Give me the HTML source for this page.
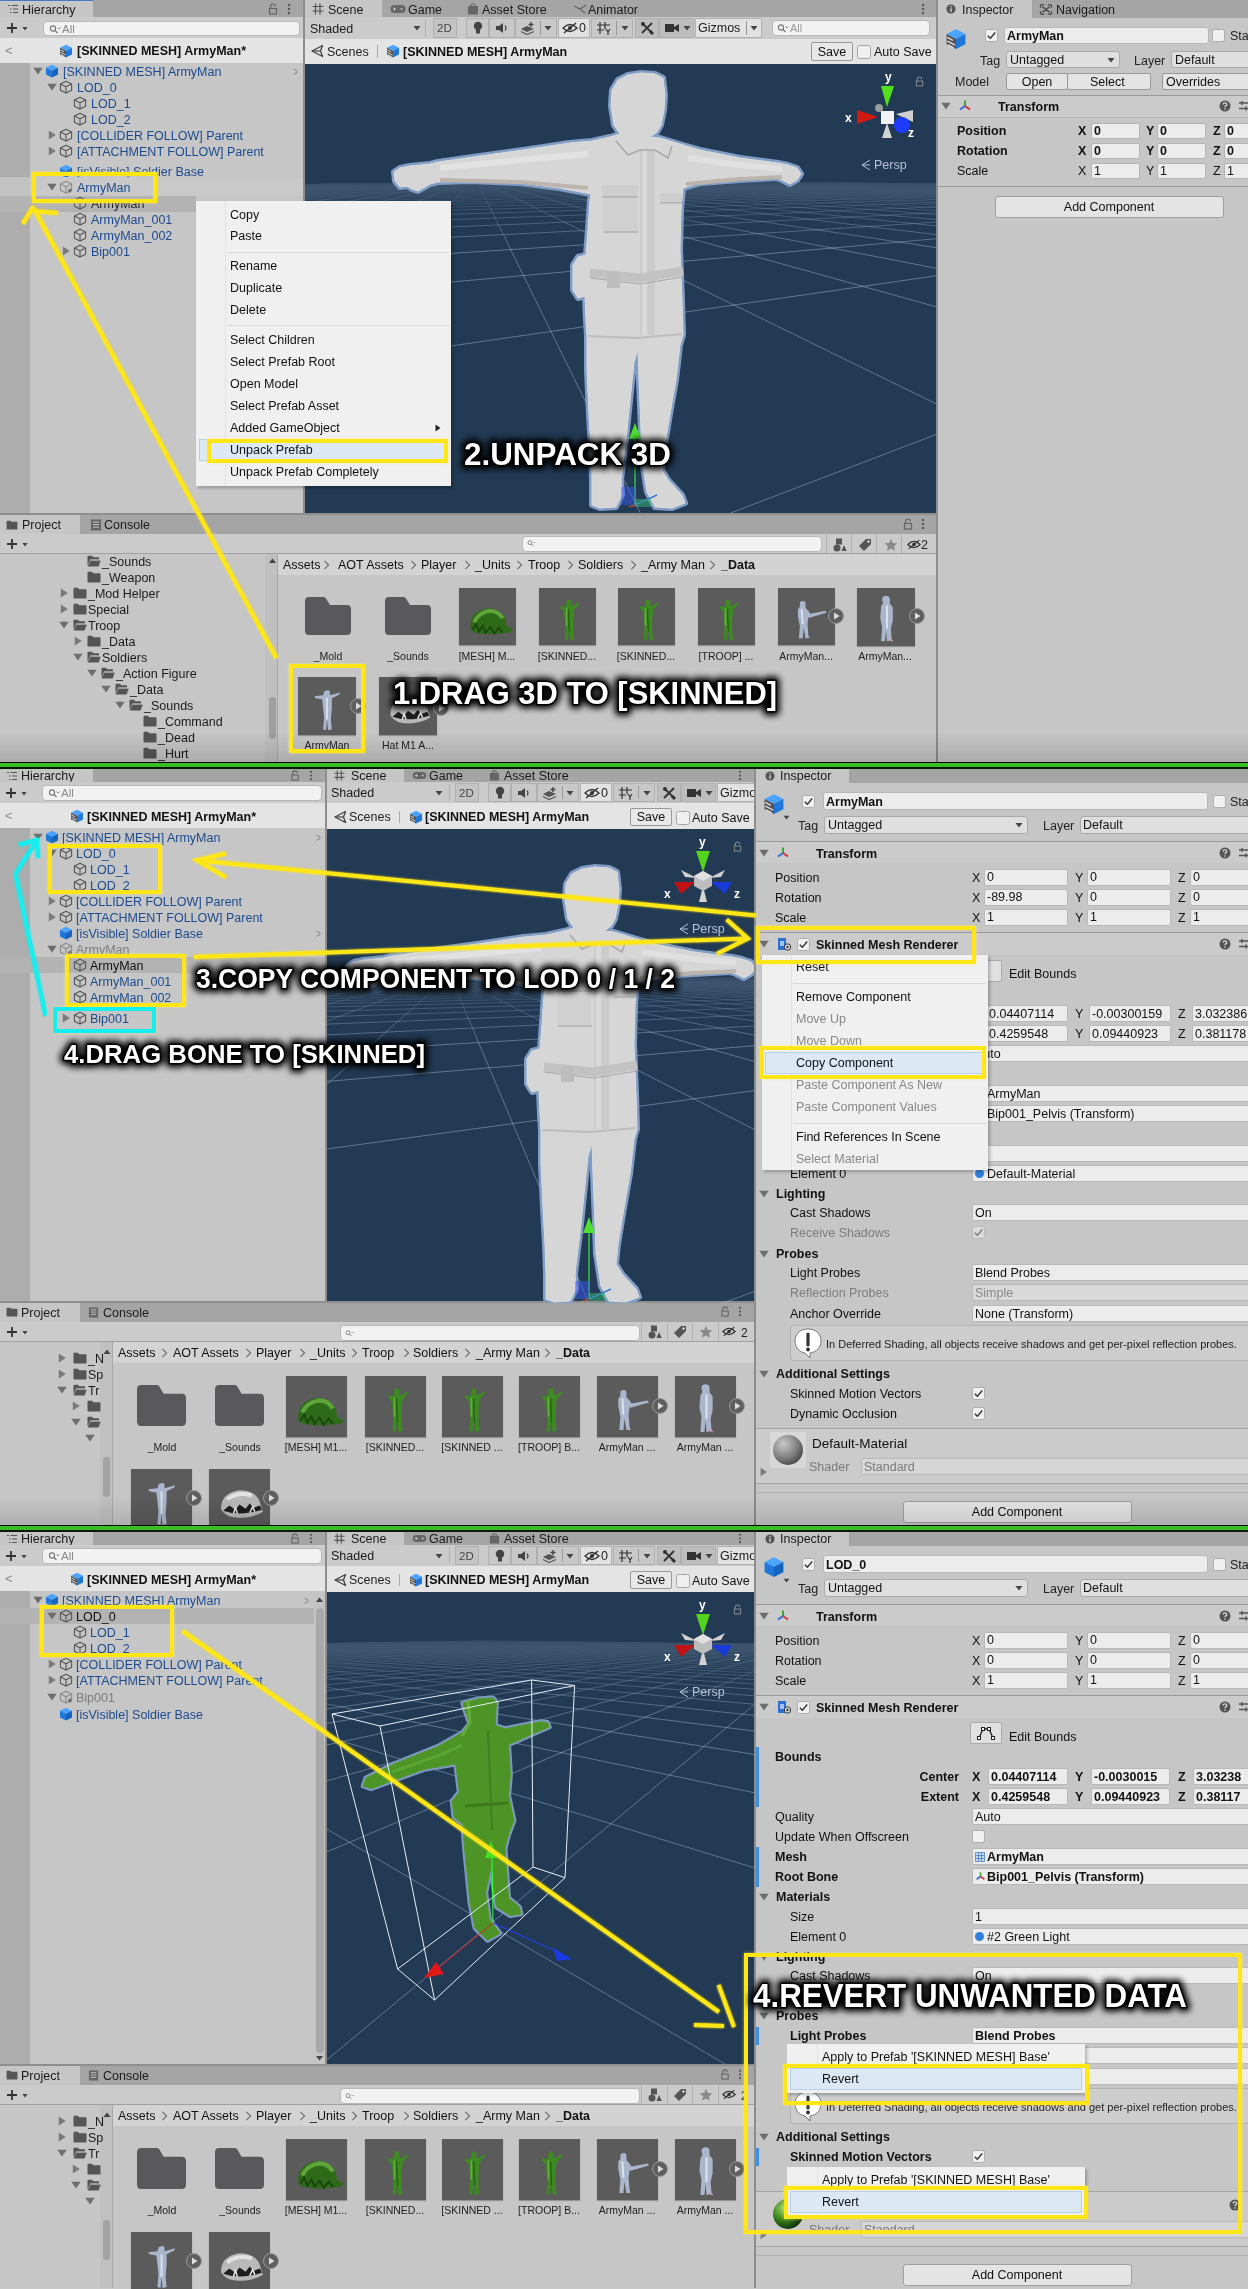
<!DOCTYPE html><html><head><meta charset="utf-8"><style>
html,body{margin:0;padding:0;background:#c8c8c8;}
#root{will-change:transform;position:relative;width:1248px;height:2289px;overflow:hidden;font-family:"Liberation Sans",sans-serif;color:#111;}
.a{position:absolute;}
.t{white-space:nowrap;}
svg.a{overflow:visible}
</style></head><body><div id="root">
<svg width="0" height="0" style="position:absolute">
<defs>
<symbol id="cube" viewBox="0 0 14 14"><path d="M7 1.2 L12.6 4 V10.2 L7 13 L1.4 10.2 V4 Z M1.4 4 L7 6.8 L12.6 4 M7 6.8 V13" fill="none" stroke="#555" stroke-width="1.1" stroke-linejoin="round"/></symbol>
<symbol id="cubeg" viewBox="0 0 14 14"><path d="M7 1.2 L12.6 4 V10.2 L7 13 L1.4 10.2 V4 Z M1.4 4 L7 6.8 L12.6 4 M7 6.8 V13" fill="none" stroke="#8a8a8a" stroke-width="1.1" stroke-linejoin="round"/><path d="M9 10.5h4M11 8.5v4" stroke="#666" stroke-width="1.3"/></symbol>
<symbol id="bcube" viewBox="0 0 14 14"><path d="M7 0.8 L13 3.8 L7 6.8 L1 3.8 Z" fill="#4aa3ff"/><path d="M1 3.8 L7 6.8 V13.4 L1 10.4 Z" fill="#1f78d8"/><path d="M13 3.8 L7 6.8 V13.4 L13 10.4 Z" fill="#1565c0"/></symbol>
<symbol id="pcube" viewBox="0 0 14 14"><path d="M7 0.8 L13 3.8 L7 6.8 L1 3.8 Z" fill="#4aa3ff"/><path d="M1 3.8 L7 6.8 V13.4 L1 10.4 Z" fill="#555"/><path d="M1.5 6 L5 7.8 M1.5 8.4 L6.5 10.9 M2 10.8 L5.5 12.6" stroke="#ddd" stroke-width="0.9"/><path d="M13 3.8 L7 6.8 V13.4 L13 10.4 Z" fill="#1f78d8"/></symbol>
<symbol id="tdown" viewBox="0 0 10 10"><path d="M0.3 1.8 H9.7 L5 8.6 Z" fill="#6e6e6e"/></symbol>
<symbol id="tright" viewBox="0 0 10 10"><path d="M1.8 0.4 V9.6 L8.8 5 Z" fill="#7a7a7a"/></symbol>
<symbol id="folder" viewBox="0 0 14 12"><path d="M0.5 1.5 Q0.5 0.8 1.2 0.8 H5 L6.3 2.2 H12.8 Q13.5 2.2 13.5 2.9 V10.8 Q13.5 11.5 12.8 11.5 H1.2 Q0.5 11.5 0.5 10.8 Z" fill="#555"/></symbol>
<symbol id="folderopen" viewBox="0 0 14 12"><path d="M0.5 1.5 Q0.5 0.8 1.2 0.8 H5 L6.3 2.2 H12 V4.5 H3.2 L0.5 10.5 Z" fill="#555"/><path d="M3.4 5.2 H13.8 L11.6 11.5 H0.6 Z" fill="#555"/><path d="M3.4 5.2 H13.8" stroke="#c6c6c6" stroke-width="0.8"/></symbol>
<symbol id="bigfolder" viewBox="0 0 46 38" preserveAspectRatio="none"><path d="M0 4 Q0 0 4 0 H19 Q20 0 21 1.5 L25 8 H42 Q46 8 46 12 V34 Q46 38 42 38 H4 Q0 38 0 34 Z" fill="#59585b"/></symbol>
<symbol id="play" viewBox="0 0 16 16"><circle cx="8" cy="8" r="7.5" fill="#5f5f5f" stroke="#9a9a9a" stroke-width="1"/><path d="M6 4.5 V11.5 L11.5 8 Z" fill="#ddd"/></symbol>
<symbol id="chk" viewBox="0 0 14 14"><rect x="0.5" y="0.5" width="13" height="13" rx="2" fill="#f0f0f0" stroke="#a8a8a8"/><path d="M3 7.2 L5.8 10 L11 3.8" fill="none" stroke="#333" stroke-width="1.5"/></symbol>
<symbol id="unchk" viewBox="0 0 14 14"><rect x="0.5" y="0.5" width="13" height="13" rx="2" fill="#f0f0f0" stroke="#a8a8a8"/></symbol>
<symbol id="help" viewBox="0 0 12 12"><circle cx="6" cy="6" r="5.5" fill="#555"/><path d="M4.2 4.6 Q4.2 2.8 6 2.8 Q7.8 2.8 7.8 4.4 Q7.8 5.4 6.6 5.9 Q6 6.2 6 7.2" fill="none" stroke="#d8d8d8" stroke-width="1.3"/><circle cx="6" cy="9" r="0.8" fill="#d8d8d8"/></symbol>
<symbol id="sliders" viewBox="0 0 12 12"><path d="M1 3 H11 M1 8.5 H11 M4 1 V5 M8 6.5 V10.5" stroke="#555" stroke-width="1.4"/></symbol>
<symbol id="transform" viewBox="0 0 14 14"><path d="M7 1.5 V7" stroke="#3ea52e" stroke-width="2"/><path d="M7 7 L2 10.5" stroke="#2a6fd6" stroke-width="2"/><path d="M7 7 L12 10.5" stroke="#d33" stroke-width="2"/></symbol>
<symbol id="smr" viewBox="0 0 16 14"><path d="M2 1 H10 V13 H2 Z" fill="#2f6fd0"/><path d="M4 4 L8 4 L8 9 L4 9 Z" fill="#9ec3f5"/><circle cx="11.5" cy="10" r="3.2" fill="#ddd" stroke="#333" stroke-width="1"/><circle cx="11.5" cy="10" r="1.2" fill="#333"/></symbol>
<symbol id="lock" viewBox="0 0 10 12"><path d="M2.5 5.5 V3.5 Q2.5 1 5 1 Q7.5 1 7.5 3.5" fill="none" stroke="#666" stroke-width="1.2"/><rect x="1.5" y="5.5" width="7" height="5.5" fill="none" stroke="#666" stroke-width="1.2"/></symbol>
<symbol id="dots" viewBox="0 0 4 12"><circle cx="2" cy="2" r="1.2" fill="#555"/><circle cx="2" cy="6" r="1.2" fill="#555"/><circle cx="2" cy="10" r="1.2" fill="#555"/></symbol>
<symbol id="hicon" viewBox="0 0 12 10"><path d="M1 1.5 H3 M4.5 1.5 H11 M3 5 H4.5 M6 5 H11 M3 8.5 H4.5 M6 8.5 H11" stroke="#555" stroke-width="1.1"/></symbol>
<symbol id="plus" viewBox="0 0 12 12"><path d="M6 1 V11 M1 6 H11" stroke="#333" stroke-width="1.8"/></symbol>
<symbol id="search" viewBox="0 0 12 10"><circle cx="4" cy="4.5" r="2.6" fill="none" stroke="#777" stroke-width="1.1"/><path d="M6 6.5 L8.5 9" stroke="#777" stroke-width="1.2"/><path d="M8.5 3.5 L10 5 L11.5 3.5" fill="none" stroke="#777" stroke-width="0.9"/></symbol>
<symbol id="unity" viewBox="0 0 14 14"><path d="M12.5 1.5 L2 7 L12.5 12.5 L10.5 7 Z" fill="none" stroke="#444" stroke-width="1.3" stroke-linejoin="round"/><path d="M2 7 H10.5" stroke="#444" stroke-width="1.2"/></symbol>
<symbol id="grid" viewBox="0 0 12 12"><path d="M3.5 0.5 V11.5 M8 0.5 V11.5 M0.5 3.5 H11.5 M0.5 8 H11.5" stroke="#555" stroke-width="1.2"/></symbol>
<symbol id="gamepad" viewBox="0 0 16 10"><rect x="0.5" y="1" width="15" height="8" rx="4" fill="#666"/><path d="M3 5 H6 M4.5 3.5 V6.5" stroke="#c8c8c8" stroke-width="1"/><circle cx="11.5" cy="5" r="1" fill="#c8c8c8"/></symbol>
<symbol id="bag" viewBox="0 0 12 12"><path d="M4 3 V2 Q4 0.8 6 0.8 Q8 0.8 8 2 V3" fill="none" stroke="#666" stroke-width="1.1"/><rect x="1" y="3" width="10" height="8.5" rx="1" fill="#666"/></symbol>
<symbol id="animator" viewBox="0 0 14 12"><path d="M1 3 L7 6 L13 2 M7 6 L12 10" fill="none" stroke="#666" stroke-width="1.3"/></symbol>
<symbol id="info" viewBox="0 0 12 12"><circle cx="6" cy="6" r="5.5" fill="#555"/><path d="M6 5 V9.5" stroke="#ddd" stroke-width="1.5"/><circle cx="6" cy="3.2" r="0.9" fill="#ddd"/></symbol>
<symbol id="nav" viewBox="0 0 14 12"><path d="M1 1 H5 M1 1 V4 M13 1 H9 M13 1 V4 M1 11 H5 M1 11 V8 M13 11 H9 M13 11 V8 M3 3 L11 9 M11 3 L3 9" fill="none" stroke="#444" stroke-width="1.3"/></symbol>
<symbol id="consoleic" viewBox="0 0 12 12"><rect x="1" y="0.5" width="10" height="11" fill="#666"/><path d="M3 3 H9 M3 5.5 H9 M3 8 H9" stroke="#c8c8c8" stroke-width="1"/></symbol>
<symbol id="arrowdn" viewBox="0 0 8 6"><path d="M0.5 1 H7.5 L4 5.5 Z" fill="#444"/></symbol>
<symbol id="redit" viewBox="0 0 14 14"><circle cx="7" cy="4" r="3" fill="#555"/><path d="M1.5 13 Q7 4 12.5 13" fill="#555"/></symbol>
<symbol id="chev" viewBox="0 0 8 12"><path d="M1.5 1 L6.5 6 L1.5 11" fill="none" stroke="#6a6a6a" stroke-width="1.3"/></symbol>
</defs></svg>
<div class="a" style="left:0px;top:0px;width:303px;height:17px;background:#a5a5a5;"></div>
<div class="a" style="left:0px;top:0px;width:93px;height:17px;background:#c6c6c6;"></div>
<div class="a" style="left:0px;top:0px;width:93px;height:1px;background:#4a78c0;"></div>
<svg class="a" style="left:7px;top:4px;" width="12" height="10"><use href="#hicon"/></svg>
<div class="a t" style="top:1.5px;font-size:12.5px;line-height:16px;left:22px;color:#1a1a1a;">Hierarchy</div>
<svg class="a" style="left:268px;top:3px;" width="10" height="12"><use href="#lock"/></svg>
<svg class="a" style="left:287px;top:3px;" width="4" height="12"><use href="#dots"/></svg>
<div class="a" style="left:0px;top:17px;width:303px;height:22px;background:#cbcbcb;"></div>
<svg class="a" style="left:6px;top:22px;" width="12" height="12"><use href="#plus"/></svg>
<svg class="a" style="left:22px;top:26px;" width="6" height="5"><use href="#arrowdn"/></svg>
<div class="a" style="left:43px;top:21px;width:257px;height:15px;background:#f2f2f2;border:1px solid #b8b8b8;box-sizing:border-box;border-radius:4px;"></div>
<svg class="a" style="left:49px;top:24px;" width="12" height="10"><use href="#search"/></svg>
<div class="a t" style="top:20.5px;font-size:11.5px;line-height:16px;left:62px;color:#888;">All</div>
<div class="a" style="left:0px;top:38px;width:303px;height:25px;background:#e4e4e4;"></div>
<div class="a t" style="top:43.0px;font-size:13px;line-height:16px;left:5px;color:#888;">&lt;</div>
<svg class="a" style="left:59px;top:44px;" width="14" height="14"><use href="#pcube"/></svg>
<div class="a t" style="top:43.0px;font-size:12.5px;line-height:16px;left:77px;font-weight:bold;">[SKINNED MESH] ArmyMan*</div>
<div class="a" style="left:0px;top:63px;width:303px;height:452px;background:#c6c6c6;"></div>
<div class="a" style="left:0px;top:63px;width:30px;height:114px;background:#adadad;"></div>
<div class="a" style="left:0px;top:177px;width:30px;height:19px;background:#c2c2c2;"></div>
<div class="a" style="left:0px;top:212px;width:30px;height:303px;background:#adadad;"></div>
<div class="a" style="left:0px;top:196px;width:196px;height:16px;background:#b3b3b3;"></div>
<div class="a" style="left:303px;top:0px;width:2px;height:515px;background:#8d8d8d;"></div>
<svg class="a" style="left:33px;top:66px;" width="10" height="10"><use href="#tdown"/></svg>
<svg class="a" style="left:45px;top:64px;" width="14" height="14"><use href="#bcube"/></svg>
<div class="a t" style="top:63.5px;font-size:12.5px;line-height:16px;left:63px;color:#1c4a8f;">[SKINNED MESH] ArmyMan</div>
<svg class="a" style="left:47px;top:82px;" width="10" height="10"><use href="#tdown"/></svg>
<svg class="a" style="left:59px;top:80px;" width="14" height="14"><use href="#cube"/></svg>
<div class="a t" style="top:79.5px;font-size:12.5px;line-height:16px;left:77px;color:#1c4a8f;">LOD_0</div>
<svg class="a" style="left:73px;top:96px;" width="14" height="14"><use href="#cube"/></svg>
<div class="a t" style="top:95.5px;font-size:12.5px;line-height:16px;left:91px;color:#1c4a8f;">LOD_1</div>
<svg class="a" style="left:73px;top:112px;" width="14" height="14"><use href="#cube"/></svg>
<div class="a t" style="top:111.5px;font-size:12.5px;line-height:16px;left:91px;color:#1c4a8f;">LOD_2</div>
<svg class="a" style="left:47px;top:130px;" width="10" height="10"><use href="#tright"/></svg>
<svg class="a" style="left:59px;top:128px;" width="14" height="14"><use href="#cube"/></svg>
<div class="a t" style="top:127.5px;font-size:12.5px;line-height:16px;left:77px;color:#1c4a8f;">[COLLIDER FOLLOW] Parent</div>
<svg class="a" style="left:47px;top:146px;" width="10" height="10"><use href="#tright"/></svg>
<svg class="a" style="left:59px;top:144px;" width="14" height="14"><use href="#cube"/></svg>
<div class="a t" style="top:143.5px;font-size:12.5px;line-height:16px;left:77px;color:#1c4a8f;">[ATTACHMENT FOLLOW] Parent</div>
<svg class="a" style="left:59px;top:164px;" width="14" height="14"><use href="#bcube"/></svg>
<div class="a t" style="top:163.5px;font-size:12.5px;line-height:16px;left:77px;color:#1c4a8f;">[isVisible] Soldier Base</div>
<div class="a" style="left:30px;top:177px;width:273px;height:19px;background:#c9c9c9;"></div>
<svg class="a" style="left:47px;top:182px;" width="10" height="10"><use href="#tdown"/></svg>
<svg class="a" style="left:59px;top:180px;" width="14" height="14"><use href="#cubeg"/></svg>
<div class="a t" style="top:179.5px;font-size:12.5px;line-height:16px;left:77px;color:#1c4a8f;">ArmyMan</div>
<svg class="a" style="left:73px;top:196px;" width="14" height="14"><use href="#cube"/></svg>
<div class="a t" style="top:195.5px;font-size:12.5px;line-height:16px;left:91px;color:#222;">ArmyMan</div>
<svg class="a" style="left:73px;top:212px;" width="14" height="14"><use href="#cube"/></svg>
<div class="a t" style="top:211.5px;font-size:12.5px;line-height:16px;left:91px;color:#1c4a8f;">ArmyMan_001</div>
<svg class="a" style="left:73px;top:228px;" width="14" height="14"><use href="#cube"/></svg>
<div class="a t" style="top:227.5px;font-size:12.5px;line-height:16px;left:91px;color:#1c4a8f;">ArmyMan_002</div>
<svg class="a" style="left:61px;top:246px;" width="10" height="10"><use href="#tright"/></svg>
<svg class="a" style="left:73px;top:244px;" width="14" height="14"><use href="#cube"/></svg>
<div class="a t" style="top:243.5px;font-size:12.5px;line-height:16px;left:91px;color:#1c4a8f;">Bip001</div>
<div class="a t" style="top:64.0px;font-size:12px;line-height:16px;left:292px;color:#888;transform:scaleX(0.7);">&gt;</div>
<div class="a" style="left:305px;top:0px;width:631px;height:17px;background:#a5a5a5;"></div>
<div class="a" style="left:305px;top:0px;width:77px;height:17px;background:#c6c6c6;"></div>
<svg class="a" style="left:312px;top:3px;" width="12" height="12"><use href="#grid"/></svg>
<div class="a t" style="top:1.5px;font-size:12.5px;line-height:16px;left:328px;color:#1a1a1a;">Scene</div>
<svg class="a" style="left:390px;top:4px;" width="16" height="10"><use href="#gamepad"/></svg>
<div class="a t" style="top:1.5px;font-size:12.5px;line-height:16px;left:408px;color:#1a1a1a;">Game</div>
<svg class="a" style="left:467px;top:3px;" width="12" height="12"><use href="#bag"/></svg>
<div class="a t" style="top:1.5px;font-size:12.5px;line-height:16px;left:482px;color:#1a1a1a;">Asset Store</div>
<svg class="a" style="left:573px;top:3px;" width="14" height="12"><use href="#animator"/></svg>
<div class="a t" style="top:1.5px;font-size:12.5px;line-height:16px;left:588px;color:#1a1a1a;">Animator</div>
<svg class="a" style="left:921px;top:3px;" width="4" height="12"><use href="#dots"/></svg>
<div class="a" style="left:305px;top:17px;width:631px;height:22px;background:#cbcbcb;"></div>
<div class="a t" style="top:20.5px;font-size:12.5px;line-height:16px;left:310px;color:#1a1a1a;">Shaded</div>
<svg class="a" style="left:413px;top:25px;" width="8" height="6"><use href="#arrowdn"/></svg>
<div class="a" style="left:425px;top:19px;width:1px;height:18px;background:#b0b0b0;"></div>
<div class="a" style="left:772px;top:20px;width:158px;height:16px;background:#f2f2f2;border:1px solid #b8b8b8;box-sizing:border-box;border-radius:4px;"></div>
<svg class="a" style="left:777px;top:23px;" width="12" height="10"><use href="#search"/></svg>
<div class="a t" style="top:20.0px;font-size:11px;line-height:16px;left:790px;color:#999;">All</div>
<div class="a" style="left:305px;top:39px;width:631px;height:25px;background:#e4e4e4;"></div>
<svg class="a" style="left:310px;top:44px;" width="14" height="14"><use href="#unity"/></svg>
<div class="a t" style="top:43.5px;font-size:12.5px;line-height:16px;left:327px;color:#222;">Scenes</div>
<div class="a" style="left:377px;top:45px;width:1px;height:13px;background:#aaa;"></div>
<svg class="a" style="left:386px;top:44px;" width="14" height="14"><use href="#pcube"/></svg>
<div class="a t" style="top:43.5px;font-size:12.5px;line-height:16px;left:403px;font-weight:bold;">[SKINNED MESH] ArmyMan</div>
<div class="a" style="left:811px;top:42px;width:42px;height:19px;background:#e8e8e8;border:1px solid #999;box-sizing:border-box;border-radius:2px;"></div>
<div class="a t" style="top:43.5px;font-size:12.5px;line-height:16px;left:532px;width:600px;text-align:center;">Save</div>
<svg class="a" style="left:857px;top:45px;" width="14" height="14"><use href="#unchk"/></svg>
<div class="a t" style="top:44.0px;font-size:12.5px;line-height:16px;left:874px;">Auto Save</div>
<div class="a" style="left:305px;top:64px;width:631px;height:451px;background:#223a54;"></div>
<div class="a" style="left:936px;top:0px;width:2px;height:763px;background:#8d8d8d;"></div>
<div class="a" style="left:938px;top:0px;width:310px;height:18px;background:#a5a5a5;"></div>
<div class="a" style="left:938px;top:0px;width:94px;height:18px;background:#c6c6c6;"></div>
<svg class="a" style="left:946px;top:4px;" width="10" height="10"><use href="#info"/></svg>
<div class="a t" style="top:2.0px;font-size:12.5px;line-height:16px;left:962px;color:#1a1a1a;">Inspector</div>
<svg class="a" style="left:1039px;top:4px;" width="14" height="11"><use href="#nav"/></svg>
<div class="a t" style="top:2.0px;font-size:12.5px;line-height:16px;left:1056px;color:#1a1a1a;">Navigation</div>
<div class="a" style="left:938px;top:18px;width:310px;height:745px;background:#c6c6c6;"></div>
<svg class="a" style="left:945px;top:28px;" width="22" height="22"><use href="#pcube"/></svg>
<svg class="a" style="left:985px;top:29px;" width="13" height="13"><use href="#chk"/></svg>
<div class="a" style="left:1004px;top:27px;width:205px;height:17px;background:#ececec;border:1px solid #b8b8b8;box-sizing:border-box;border-radius:3px;"></div>
<div class="a t" style="top:28.0px;font-size:12.5px;line-height:16px;left:1007px;font-weight:bold;">ArmyMan</div>
<svg class="a" style="left:1212px;top:29px;" width="13" height="13"><use href="#unchk"/></svg>
<div class="a t" style="top:28.0px;font-size:12.5px;line-height:16px;left:1230px;color:#222;">Sta</div>
<div class="a t" style="top:52.5px;font-size:12.5px;line-height:16px;left:980px;color:#222;">Tag</div>
<div class="a" style="left:1006px;top:51px;width:114px;height:17px;background:#dfdfdf;border:1px solid #aaa;box-sizing:border-box;border-radius:3px;"></div>
<div class="a t" style="top:52.0px;font-size:12.5px;line-height:16px;left:1010px;">Untagged</div>
<svg class="a" style="left:1107px;top:57px;" width="8" height="6"><use href="#arrowdn"/></svg>
<div class="a t" style="top:52.5px;font-size:12.5px;line-height:16px;left:1134px;color:#222;">Layer</div>
<div class="a" style="left:1171px;top:51px;width:80px;height:17px;background:#dfdfdf;border:1px solid #aaa;box-sizing:border-box;border-radius:3px;"></div>
<div class="a t" style="top:52.0px;font-size:12.5px;line-height:16px;left:1175px;">Default</div>
<div class="a t" style="top:73.5px;font-size:12.5px;line-height:16px;left:955px;color:#222;">Model</div>
<div class="a" style="left:1006px;top:73px;width:62px;height:17px;background:#e4e4e4;border:1px solid #999;box-sizing:border-box;border-radius:2px;"></div>
<div class="a" style="left:1067px;top:73px;width:84px;height:17px;background:#e4e4e4;border:1px solid #999;box-sizing:border-box;border-radius:2px;"></div>
<div class="a" style="left:1162px;top:73px;width:90px;height:17px;background:#e4e4e4;border:1px solid #999;box-sizing:border-box;border-radius:2px;"></div>
<div class="a t" style="top:73.5px;font-size:12.5px;line-height:16px;left:737px;width:600px;text-align:center;">Open</div>
<div class="a t" style="top:73.5px;font-size:12.5px;line-height:16px;left:1090px;">Select</div>
<div class="a t" style="top:73.5px;font-size:12.5px;line-height:16px;left:1166px;">Overrides</div>
<div class="a" style="left:938px;top:95px;width:310px;height:1px;background:#999;"></div>
<div class="a" style="left:938px;top:96px;width:310px;height:21px;background:#cbcbcb;"></div>
<svg class="a" style="left:941px;top:101px;" width="10" height="10"><use href="#tdown"/></svg>
<svg class="a" style="left:958px;top:99px;" width="14" height="14"><use href="#transform"/></svg>
<div class="a t" style="top:98.5px;font-size:12.5px;line-height:16px;left:998px;font-weight:bold;">Transform</div>
<svg class="a" style="left:1219px;top:100px;" width="12" height="12"><use href="#help"/></svg>
<svg class="a" style="left:1238px;top:100px;" width="12" height="12"><use href="#sliders"/></svg>
<div class="a" style="left:938px;top:117px;width:310px;height:1px;background:#b5b5b5;"></div>
<div class="a t" style="top:123.0px;font-size:12.5px;line-height:16px;left:957px;font-weight:bold;">Position</div>
<div class="a t" style="top:123.0px;font-size:12.5px;line-height:16px;left:1078px;font-weight:bold;">X</div>
<div class="a" style="left:1091px;top:123px;width:49px;height:16px;background:#ececec;border:1px solid #b5b5b5;box-sizing:border-box;border-radius:2px;"></div>
<div class="a t" style="top:123.0px;font-size:12.5px;line-height:16px;left:1094px;font-weight:bold;">0</div>
<div class="a t" style="top:123.0px;font-size:12.5px;line-height:16px;left:1146px;font-weight:bold;">Y</div>
<div class="a" style="left:1157px;top:123px;width:49px;height:16px;background:#ececec;border:1px solid #b5b5b5;box-sizing:border-box;border-radius:2px;"></div>
<div class="a t" style="top:123.0px;font-size:12.5px;line-height:16px;left:1160px;font-weight:bold;">0</div>
<div class="a t" style="top:123.0px;font-size:12.5px;line-height:16px;left:1213px;font-weight:bold;">Z</div>
<div class="a" style="left:1224px;top:123px;width:40px;height:16px;background:#ececec;border:1px solid #b5b5b5;box-sizing:border-box;border-radius:2px;"></div>
<div class="a t" style="top:123.0px;font-size:12.5px;line-height:16px;left:1227px;font-weight:bold;">0</div>
<div class="a t" style="top:143.0px;font-size:12.5px;line-height:16px;left:957px;font-weight:bold;">Rotation</div>
<div class="a t" style="top:143.0px;font-size:12.5px;line-height:16px;left:1078px;font-weight:bold;">X</div>
<div class="a" style="left:1091px;top:143px;width:49px;height:16px;background:#ececec;border:1px solid #b5b5b5;box-sizing:border-box;border-radius:2px;"></div>
<div class="a t" style="top:143.0px;font-size:12.5px;line-height:16px;left:1094px;font-weight:bold;">0</div>
<div class="a t" style="top:143.0px;font-size:12.5px;line-height:16px;left:1146px;font-weight:bold;">Y</div>
<div class="a" style="left:1157px;top:143px;width:49px;height:16px;background:#ececec;border:1px solid #b5b5b5;box-sizing:border-box;border-radius:2px;"></div>
<div class="a t" style="top:143.0px;font-size:12.5px;line-height:16px;left:1160px;font-weight:bold;">0</div>
<div class="a t" style="top:143.0px;font-size:12.5px;line-height:16px;left:1213px;font-weight:bold;">Z</div>
<div class="a" style="left:1224px;top:143px;width:40px;height:16px;background:#ececec;border:1px solid #b5b5b5;box-sizing:border-box;border-radius:2px;"></div>
<div class="a t" style="top:143.0px;font-size:12.5px;line-height:16px;left:1227px;font-weight:bold;">0</div>
<div class="a t" style="top:163.0px;font-size:12.5px;line-height:16px;left:957px;">Scale</div>
<div class="a t" style="top:163.0px;font-size:12.5px;line-height:16px;left:1078px;">X</div>
<div class="a" style="left:1091px;top:163px;width:49px;height:16px;background:#ececec;border:1px solid #b5b5b5;box-sizing:border-box;border-radius:2px;"></div>
<div class="a t" style="top:163.0px;font-size:12.5px;line-height:16px;left:1094px;">1</div>
<div class="a t" style="top:163.0px;font-size:12.5px;line-height:16px;left:1146px;">Y</div>
<div class="a" style="left:1157px;top:163px;width:49px;height:16px;background:#ececec;border:1px solid #b5b5b5;box-sizing:border-box;border-radius:2px;"></div>
<div class="a t" style="top:163.0px;font-size:12.5px;line-height:16px;left:1160px;">1</div>
<div class="a t" style="top:163.0px;font-size:12.5px;line-height:16px;left:1213px;">Z</div>
<div class="a" style="left:1224px;top:163px;width:40px;height:16px;background:#ececec;border:1px solid #b5b5b5;box-sizing:border-box;border-radius:2px;"></div>
<div class="a t" style="top:163.0px;font-size:12.5px;line-height:16px;left:1227px;">1</div>
<div class="a" style="left:938px;top:186px;width:310px;height:1px;background:#999;"></div>
<div class="a" style="left:995px;top:196px;width:229px;height:22px;background:#e4e4e4;border:1px solid #a0a0a0;box-sizing:border-box;border-radius:3px;"></div>
<div class="a t" style="top:199.0px;font-size:12.5px;line-height:16px;left:809px;width:600px;text-align:center;">Add Component</div>
<div class="a" style="left:0px;top:513px;width:936px;height:2px;background:#8e8e8e;"></div>
<div class="a" style="left:0px;top:515px;width:936px;height:19px;background:#a5a5a5;"></div>
<div class="a" style="left:0px;top:515px;width:80px;height:19px;background:#c6c6c6;"></div>
<svg class="a" style="left:6px;top:520px;" width="12" height="10"><use href="#folder"/></svg>
<div class="a t" style="top:517.0px;font-size:12.5px;line-height:16px;left:22px;color:#1a1a1a;">Project</div>
<svg class="a" style="left:90px;top:519px;" width="12" height="12"><use href="#consoleic"/></svg>
<div class="a t" style="top:517.0px;font-size:12.5px;line-height:16px;left:104px;color:#1a1a1a;">Console</div>
<svg class="a" style="left:903px;top:518px;" width="10" height="12"><use href="#lock"/></svg>
<svg class="a" style="left:921px;top:518px;" width="4" height="12"><use href="#dots"/></svg>
<div class="a" style="left:0px;top:534px;width:936px;height:20px;background:#cbcbcb;"></div>
<svg class="a" style="left:6px;top:538px;" width="12" height="12"><use href="#plus"/></svg>
<svg class="a" style="left:22px;top:542px;" width="6" height="5"><use href="#arrowdn"/></svg>
<div class="a" style="left:522px;top:536px;width:300px;height:16px;background:#f2f2f2;border:1px solid #b8b8b8;box-sizing:border-box;border-radius:4px;"></div>
<svg class="a" style="left:527px;top:539px;" width="9" height="8"><use href="#search"/></svg>
<div class="a" style="left:826px;top:535px;width:1px;height:18px;background:#b0b0b0;"></div>
<div class="a" style="left:851px;top:535px;width:1px;height:18px;background:#b0b0b0;"></div>
<div class="a" style="left:876px;top:535px;width:1px;height:18px;background:#b0b0b0;"></div>
<div class="a" style="left:901px;top:535px;width:1px;height:18px;background:#b0b0b0;"></div>
<div class="a t" style="top:536.5px;font-size:12.5px;line-height:16px;left:921px;color:#222;">2</div>
<div class="a" style="left:0px;top:553px;width:936px;height:1px;background:#a0a0a0;"></div>
<div class="a" style="left:0px;top:554px;width:265px;height:209px;background:#c6c6c6;"></div>
<div class="a" style="left:265px;top:554px;width:13px;height:209px;background:#c0c0c0;"></div>
<div class="a" style="left:269px;top:697px;width:7px;height:42px;background:#9f9f9f;border-radius:3px;"></div>
<svg class="a" style="left:268px;top:558px;transform:rotate(180deg);" width="9" height="6"><use href="#arrowdn"/></svg>
<div class="a" style="left:278px;top:554px;width:658px;height:21px;background:#d3d3d3;"></div>
<div class="a" style="left:278px;top:575px;width:658px;height:188px;background:#c6c6c6;"></div>
<div class="a" style="left:277px;top:554px;width:1px;height:209px;background:#a8a8a8;"></div>
<div class="a t" style="top:557.0px;font-size:12.5px;line-height:16px;left:283px;">Assets</div>
<div class="a t" style="top:557.0px;font-size:12px;line-height:16px;left:283px;"></div>
<div class="a t" style="top:557.0px;font-size:12.5px;line-height:16px;left:338px;">AOT Assets</div>
<div class="a t" style="top:557.0px;font-size:12px;line-height:16px;left:338px;"></div>
<div class="a t" style="top:557.0px;font-size:12.5px;line-height:16px;left:421px;">Player</div>
<div class="a t" style="top:557.0px;font-size:12px;line-height:16px;left:421px;"></div>
<div class="a t" style="top:557.0px;font-size:12.5px;line-height:16px;left:475px;">_Units</div>
<div class="a t" style="top:557.0px;font-size:12px;line-height:16px;left:475px;"></div>
<div class="a t" style="top:557.0px;font-size:12.5px;line-height:16px;left:528px;">Troop</div>
<div class="a t" style="top:557.0px;font-size:12px;line-height:16px;left:528px;"></div>
<div class="a t" style="top:557.0px;font-size:12.5px;line-height:16px;left:578px;">Soldiers</div>
<div class="a t" style="top:557.0px;font-size:12px;line-height:16px;left:578px;"></div>
<div class="a t" style="top:557.0px;font-size:12.5px;line-height:16px;left:641px;">_Army Man</div>
<div class="a t" style="top:557.0px;font-size:12px;line-height:16px;left:641px;"></div>
<div class="a t" style="top:557.0px;font-size:12.5px;line-height:16px;left:721px;font-weight:bold;">_Data</div>
<svg class="a" style="left:322.5px;top:560px;" width="7" height="10"><use href="#chev"/></svg>
<svg class="a" style="left:409.5px;top:560px;" width="7" height="10"><use href="#chev"/></svg>
<svg class="a" style="left:464px;top:560px;" width="7" height="10"><use href="#chev"/></svg>
<svg class="a" style="left:516px;top:560px;" width="7" height="10"><use href="#chev"/></svg>
<svg class="a" style="left:567px;top:560px;" width="7" height="10"><use href="#chev"/></svg>
<svg class="a" style="left:629.5px;top:560px;" width="7" height="10"><use href="#chev"/></svg>
<svg class="a" style="left:709px;top:560px;" width="7" height="10"><use href="#chev"/></svg>
<svg class="a" style="left:87px;top:555px;" width="14" height="12"><use href="#folderopen"/></svg>
<div class="a t" style="top:553.5px;font-size:12.5px;line-height:16px;left:102px;color:#1a1a1a;">_Sounds</div>
<svg class="a" style="left:87px;top:571px;" width="14" height="12"><use href="#folder"/></svg>
<div class="a t" style="top:569.5px;font-size:12.5px;line-height:16px;left:102px;color:#1a1a1a;">_Weapon</div>
<svg class="a" style="left:59px;top:588px;" width="10" height="10"><use href="#tright"/></svg>
<svg class="a" style="left:73px;top:587px;" width="14" height="12"><use href="#folder"/></svg>
<div class="a t" style="top:585.5px;font-size:12.5px;line-height:16px;left:88px;color:#1a1a1a;">_Mod Helper</div>
<svg class="a" style="left:59px;top:604px;" width="10" height="10"><use href="#tright"/></svg>
<svg class="a" style="left:73px;top:603px;" width="14" height="12"><use href="#folder"/></svg>
<div class="a t" style="top:601.5px;font-size:12.5px;line-height:16px;left:88px;color:#1a1a1a;">Special</div>
<svg class="a" style="left:59px;top:620px;" width="10" height="10"><use href="#tdown"/></svg>
<svg class="a" style="left:73px;top:619px;" width="14" height="12"><use href="#folderopen"/></svg>
<div class="a t" style="top:617.5px;font-size:12.5px;line-height:16px;left:88px;color:#1a1a1a;">Troop</div>
<svg class="a" style="left:73px;top:636px;" width="10" height="10"><use href="#tright"/></svg>
<svg class="a" style="left:87px;top:635px;" width="14" height="12"><use href="#folder"/></svg>
<div class="a t" style="top:633.5px;font-size:12.5px;line-height:16px;left:102px;color:#1a1a1a;">_Data</div>
<svg class="a" style="left:73px;top:652px;" width="10" height="10"><use href="#tdown"/></svg>
<svg class="a" style="left:87px;top:651px;" width="14" height="12"><use href="#folderopen"/></svg>
<div class="a t" style="top:649.5px;font-size:12.5px;line-height:16px;left:102px;color:#1a1a1a;">Soldiers</div>
<svg class="a" style="left:87px;top:668px;" width="10" height="10"><use href="#tdown"/></svg>
<svg class="a" style="left:101px;top:667px;" width="14" height="12"><use href="#folderopen"/></svg>
<div class="a t" style="top:665.5px;font-size:12.5px;line-height:16px;left:116px;color:#1a1a1a;">_Action Figure</div>
<svg class="a" style="left:101px;top:684px;" width="10" height="10"><use href="#tdown"/></svg>
<svg class="a" style="left:115px;top:683px;" width="14" height="12"><use href="#folderopen"/></svg>
<div class="a t" style="top:681.5px;font-size:12.5px;line-height:16px;left:130px;color:#1a1a1a;">_Data</div>
<svg class="a" style="left:115px;top:700px;" width="10" height="10"><use href="#tdown"/></svg>
<svg class="a" style="left:129px;top:699px;" width="14" height="12"><use href="#folderopen"/></svg>
<div class="a t" style="top:697.5px;font-size:12.5px;line-height:16px;left:144px;color:#1a1a1a;">_Sounds</div>
<svg class="a" style="left:143px;top:715px;" width="14" height="12"><use href="#folder"/></svg>
<div class="a t" style="top:713.5px;font-size:12.5px;line-height:16px;left:158px;color:#1a1a1a;">_Command</div>
<svg class="a" style="left:143px;top:731px;" width="14" height="12"><use href="#folder"/></svg>
<div class="a t" style="top:729.5px;font-size:12.5px;line-height:16px;left:158px;color:#1a1a1a;">_Dead</div>
<svg class="a" style="left:143px;top:747px;" width="14" height="12"><use href="#folder"/></svg>
<div class="a t" style="top:745.5px;font-size:12.5px;line-height:16px;left:158px;color:#1a1a1a;">_Hurt</div>
<svg class="a" style="left:304.7px;top:597px;" width="46" height="38"><use href="#bigfolder"/></svg>
<div class="a t" style="top:648.0px;font-size:10.5px;line-height:16px;left:28px;width:600px;text-align:center;color:#222;">_Mold</div>
<svg class="a" style="left:384.7px;top:597px;" width="46" height="38"><use href="#bigfolder"/></svg>
<div class="a t" style="top:648.0px;font-size:10.5px;line-height:16px;left:108px;width:600px;text-align:center;color:#222;">_Sounds</div>
<div class="a" style="left:459px;top:588px;width:57px;height:57px;background:#5c5c5c;"></div>
<div class="a t" style="top:648.0px;font-size:10.5px;line-height:16px;left:187px;width:600px;text-align:center;color:#222;">[MESH] M...</div>
<div class="a" style="left:539px;top:588px;width:57px;height:57px;background:#5c5c5c;"></div>
<div class="a t" style="top:648.0px;font-size:10.5px;line-height:16px;left:267px;width:600px;text-align:center;color:#222;">[SKINNED...</div>
<div class="a" style="left:618px;top:588px;width:57px;height:57px;background:#5c5c5c;"></div>
<div class="a t" style="top:648.0px;font-size:10.5px;line-height:16px;left:346px;width:600px;text-align:center;color:#222;">[SKINNED...</div>
<div class="a" style="left:698px;top:588px;width:57px;height:57px;background:#5c5c5c;"></div>
<div class="a t" style="top:648.0px;font-size:10.5px;line-height:16px;left:426px;width:600px;text-align:center;color:#222;">[TROOP] ...</div>
<div class="a" style="left:778px;top:588px;width:57px;height:57px;background:#5c5c5c;"></div>
<div class="a t" style="top:648.0px;font-size:10.5px;line-height:16px;left:506px;width:600px;text-align:center;color:#222;">ArmyMan...</div>
<div class="a" style="left:857px;top:588px;width:57px;height:57px;background:#5c5c5c;"></div>
<div class="a t" style="top:648.0px;font-size:10.5px;line-height:16px;left:585px;width:600px;text-align:center;color:#222;">ArmyMan...</div>
<div class="a" style="left:298px;top:677px;width:58px;height:57px;background:#5c5c5c;"></div>
<div class="a t" style="top:737.0px;font-size:10.5px;line-height:16px;left:27px;width:600px;text-align:center;color:#222;">ArmyMan</div>
<div class="a" style="left:379px;top:677px;width:58px;height:57px;background:#5c5c5c;"></div>
<div class="a t" style="top:737.0px;font-size:10.5px;line-height:16px;left:108px;width:600px;text-align:center;color:#222;">Hat M1 A...</div>
<div class="a" style="left:0px;top:769px;width:325px;height:13px;background:#a5a5a5;"></div>
<div class="a" style="left:0px;top:769px;width:93px;height:13px;background:#c6c6c6;"></div>
<svg class="a" style="left:6px;top:771px;" width="12" height="10"><use href="#hicon"/></svg>
<div class="a t" style="top:768.5px;font-size:12.5px;line-height:14px;left:21px;color:#1a1a1a;">Hierarchy</div>
<svg class="a" style="left:290px;top:770px;" width="10" height="11"><use href="#lock"/></svg>
<svg class="a" style="left:309px;top:770px;" width="4" height="11"><use href="#dots"/></svg>
<div class="a" style="left:0px;top:782px;width:325px;height:21px;background:#cbcbcb;"></div>
<svg class="a" style="left:5px;top:787px;" width="12" height="12"><use href="#plus"/></svg>
<svg class="a" style="left:21px;top:791px;" width="6" height="5"><use href="#arrowdn"/></svg>
<div class="a" style="left:42px;top:785px;width:280px;height:16px;background:#f2f2f2;border:1px solid #b8b8b8;box-sizing:border-box;border-radius:4px;"></div>
<svg class="a" style="left:48px;top:788px;" width="12" height="10"><use href="#search"/></svg>
<div class="a t" style="top:785.0px;font-size:11.5px;line-height:16px;left:61px;color:#888;">All</div>
<div class="a" style="left:0px;top:803px;width:325px;height:25px;background:#e4e4e4;"></div>
<div class="a t" style="top:808.0px;font-size:13px;line-height:16px;left:5px;color:#888;">&lt;</div>
<svg class="a" style="left:70px;top:809px;" width="14" height="14"><use href="#pcube"/></svg>
<div class="a t" style="top:808.5px;font-size:12.5px;line-height:16px;left:87px;font-weight:bold;">[SKINNED MESH] ArmyMan*</div>
<div class="a" style="left:0px;top:828px;width:325px;height:475px;background:#c6c6c6;"></div>
<div class="a" style="left:0px;top:828px;width:30px;height:475px;background:#adadad;"></div>
<div class="a" style="left:325px;top:769px;width:2px;height:534px;background:#8d8d8d;"></div>
<svg class="a" style="left:33px;top:832px;" width="10" height="10"><use href="#tdown"/></svg>
<svg class="a" style="left:45px;top:830px;" width="14" height="14"><use href="#bcube"/></svg>
<div class="a t" style="top:829.5px;font-size:12.5px;line-height:16px;left:62px;color:#1c4a8f;">[SKINNED MESH] ArmyMan</div>
<svg class="a" style="left:47px;top:848px;" width="10" height="10"><use href="#tdown"/></svg>
<svg class="a" style="left:59px;top:846px;" width="14" height="14"><use href="#cube"/></svg>
<div class="a t" style="top:845.5px;font-size:12.5px;line-height:16px;left:76px;color:#1c4a8f;">LOD_0</div>
<svg class="a" style="left:73px;top:862px;" width="14" height="14"><use href="#cube"/></svg>
<div class="a t" style="top:861.5px;font-size:12.5px;line-height:16px;left:90px;color:#1c4a8f;">LOD_1</div>
<svg class="a" style="left:73px;top:878px;" width="14" height="14"><use href="#cube"/></svg>
<div class="a t" style="top:877.5px;font-size:12.5px;line-height:16px;left:90px;color:#1c4a8f;">LOD_2</div>
<svg class="a" style="left:47px;top:896px;" width="10" height="10"><use href="#tright"/></svg>
<svg class="a" style="left:59px;top:894px;" width="14" height="14"><use href="#cube"/></svg>
<div class="a t" style="top:893.5px;font-size:12.5px;line-height:16px;left:76px;color:#1c4a8f;">[COLLIDER FOLLOW] Parent</div>
<svg class="a" style="left:47px;top:912px;" width="10" height="10"><use href="#tright"/></svg>
<svg class="a" style="left:59px;top:910px;" width="14" height="14"><use href="#cube"/></svg>
<div class="a t" style="top:909.5px;font-size:12.5px;line-height:16px;left:76px;color:#1c4a8f;">[ATTACHMENT FOLLOW] Parent</div>
<svg class="a" style="left:59px;top:926px;" width="14" height="14"><use href="#bcube"/></svg>
<div class="a t" style="top:925.5px;font-size:12.5px;line-height:16px;left:76px;color:#1c4a8f;">[isVisible] Soldier Base</div>
<svg class="a" style="left:47px;top:944px;" width="10" height="10"><use href="#tdown"/></svg>
<svg class="a" style="left:59px;top:942px;" width="14" height="14"><use href="#cubeg"/></svg>
<div class="a t" style="top:941.5px;font-size:12.5px;line-height:16px;left:76px;color:#7d7d7d;">ArmyMan</div>
<div class="a" style="left:0px;top:957px;width:325px;height:16px;background:#b3b3b3;"></div>
<svg class="a" style="left:73px;top:958px;" width="14" height="14"><use href="#cube"/></svg>
<div class="a t" style="top:957.5px;font-size:12.5px;line-height:16px;left:90px;">ArmyMan</div>
<svg class="a" style="left:73px;top:974px;" width="14" height="14"><use href="#cube"/></svg>
<div class="a t" style="top:973.5px;font-size:12.5px;line-height:16px;left:90px;color:#1c4a8f;">ArmyMan_001</div>
<svg class="a" style="left:73px;top:990px;" width="14" height="14"><use href="#cube"/></svg>
<div class="a t" style="top:989.5px;font-size:12.5px;line-height:16px;left:90px;color:#1c4a8f;">ArmyMan_002</div>
<svg class="a" style="left:61px;top:1013px;" width="10" height="10"><use href="#tright"/></svg>
<svg class="a" style="left:73px;top:1011px;" width="14" height="14"><use href="#cube"/></svg>
<div class="a t" style="top:1010.5px;font-size:12.5px;line-height:16px;left:90px;color:#1c4a8f;">Bip001</div>
<div class="a t" style="top:830.0px;font-size:12px;line-height:16px;left:315px;color:#888;transform:scaleX(0.7);">&gt;</div>
<div class="a t" style="top:926.0px;font-size:12px;line-height:16px;left:315px;color:#888;transform:scaleX(0.7);">&gt;</div>
<div class="a" style="left:327px;top:769px;width:427px;height:13px;background:#a5a5a5;"></div>
<div class="a" style="left:327px;top:769px;width:77px;height:13px;background:#c6c6c6;"></div>
<svg class="a" style="left:334px;top:770px;" width="11" height="11"><use href="#grid"/></svg>
<div class="a t" style="top:768.5px;font-size:12.5px;line-height:14px;left:351px;color:#1a1a1a;">Scene</div>
<svg class="a" style="left:412px;top:771px;" width="15" height="9"><use href="#gamepad"/></svg>
<div class="a t" style="top:768.5px;font-size:12.5px;line-height:14px;left:429px;color:#1a1a1a;">Game</div>
<svg class="a" style="left:489px;top:770px;" width="11" height="11"><use href="#bag"/></svg>
<div class="a t" style="top:768.5px;font-size:12.5px;line-height:14px;left:504px;color:#1a1a1a;">Asset Store</div>
<svg class="a" style="left:738px;top:770px;" width="4" height="11"><use href="#dots"/></svg>
<div class="a" style="left:327px;top:782px;width:427px;height:21px;background:#cbcbcb;"></div>
<div class="a t" style="top:785.0px;font-size:12.5px;line-height:16px;left:331px;color:#1a1a1a;">Shaded</div>
<svg class="a" style="left:435px;top:790px;" width="8" height="6"><use href="#arrowdn"/></svg>
<div class="a" style="left:449px;top:784px;width:1px;height:17px;background:#b0b0b0;"></div>
<div class="a" style="left:327px;top:803px;width:427px;height:26px;background:#e4e4e4;"></div>
<svg class="a" style="left:333px;top:810px;" width="14" height="14"><use href="#unity"/></svg>
<div class="a t" style="top:809.0px;font-size:12.5px;line-height:16px;left:349px;color:#222;">Scenes</div>
<div class="a" style="left:399px;top:811px;width:1px;height:12px;background:#aaa;"></div>
<svg class="a" style="left:409px;top:810px;" width="14" height="14"><use href="#pcube"/></svg>
<div class="a t" style="top:809.0px;font-size:12.5px;line-height:16px;left:425px;font-weight:bold;">[SKINNED MESH] ArmyMan</div>
<div class="a" style="left:630px;top:808px;width:42px;height:18px;background:#e8e8e8;border:1px solid #999;box-sizing:border-box;border-radius:2px;"></div>
<div class="a t" style="top:809.0px;font-size:12.5px;line-height:16px;left:351px;width:600px;text-align:center;">Save</div>
<svg class="a" style="left:676px;top:811px;" width="14" height="14"><use href="#unchk"/></svg>
<div class="a t" style="top:810.0px;font-size:12.5px;line-height:16px;left:692px;">Auto Save</div>
<div class="a" style="left:327px;top:829px;width:427px;height:474px;background:#223a54;"></div>
<div class="a" style="left:754px;top:769px;width:2px;height:756px;background:#8d8d8d;"></div>
<div class="a" style="left:756px;top:769px;width:492px;height:14px;background:#a5a5a5;"></div>
<div class="a" style="left:756px;top:769px;width:93px;height:14px;background:#c6c6c6;"></div>
<svg class="a" style="left:765px;top:771px;" width="10" height="10"><use href="#info"/></svg>
<div class="a t" style="top:768.5px;font-size:12.5px;line-height:14px;left:780px;color:#1a1a1a;">Inspector</div>
<div class="a" style="left:756px;top:783px;width:492px;height:742px;background:#c6c6c6;"></div>
<svg class="a" style="left:763px;top:793px;" width="22" height="22"><use href="#pcube"/></svg>
<svg class="a" style="left:783px;top:815px;" width="7" height="5"><use href="#arrowdn"/></svg>
<svg class="a" style="left:802px;top:795px;" width="13" height="13"><use href="#chk"/></svg>
<div class="a" style="left:823px;top:792px;width:385px;height:18px;background:#ececec;border:1px solid #b8b8b8;box-sizing:border-box;border-radius:3px;"></div>
<div class="a t" style="top:793.5px;font-size:12.5px;line-height:16px;left:826px;font-weight:bold;">ArmyMan</div>
<svg class="a" style="left:1213px;top:795px;" width="13" height="13"><use href="#unchk"/></svg>
<div class="a t" style="top:794.0px;font-size:12.5px;line-height:16px;left:1230px;color:#222;">Sta</div>
<div class="a t" style="top:817.5px;font-size:12.5px;line-height:16px;left:798px;color:#222;">Tag</div>
<div class="a" style="left:824px;top:816px;width:204px;height:18px;background:#dfdfdf;border:1px solid #aaa;box-sizing:border-box;border-radius:3px;"></div>
<div class="a t" style="top:817.0px;font-size:12.5px;line-height:16px;left:828px;">Untagged</div>
<svg class="a" style="left:1015px;top:822px;" width="8" height="6"><use href="#arrowdn"/></svg>
<div class="a t" style="top:817.5px;font-size:12.5px;line-height:16px;left:1043px;color:#222;">Layer</div>
<div class="a" style="left:1080px;top:816px;width:180px;height:18px;background:#dfdfdf;border:1px solid #aaa;box-sizing:border-box;border-radius:3px;"></div>
<div class="a t" style="top:817.0px;font-size:12.5px;line-height:16px;left:1083px;">Default</div>
<div class="a" style="left:756px;top:841px;width:492px;height:1px;background:#999;"></div>
<div class="a" style="left:756px;top:842px;width:492px;height:21px;background:#cbcbcb;"></div>
<svg class="a" style="left:759px;top:848px;" width="10" height="10"><use href="#tdown"/></svg>
<svg class="a" style="left:776px;top:846px;" width="14" height="14"><use href="#transform"/></svg>
<div class="a t" style="top:845.5px;font-size:12.5px;line-height:16px;left:816px;font-weight:bold;">Transform</div>
<svg class="a" style="left:1219px;top:847px;" width="12" height="12"><use href="#help"/></svg>
<svg class="a" style="left:1238px;top:847px;" width="12" height="12"><use href="#sliders"/></svg>
<div class="a t" style="top:869.5px;font-size:12.5px;line-height:16px;left:775px;">Position</div>
<div class="a t" style="top:869.5px;font-size:12.5px;line-height:16px;left:972px;">X</div>
<div class="a" style="left:984px;top:868.5px;width:84px;height:17px;background:#ececec;border:1px solid #b9b9b9;box-sizing:border-box;border-radius:2px;"></div>
<div class="a t" style="top:869.0px;font-size:12.5px;line-height:16px;left:987px;">0</div>
<div class="a t" style="top:869.5px;font-size:12.5px;line-height:16px;left:1075px;">Y</div>
<div class="a" style="left:1087px;top:868.5px;width:84px;height:17px;background:#ececec;border:1px solid #b9b9b9;box-sizing:border-box;border-radius:2px;"></div>
<div class="a t" style="top:869.0px;font-size:12.5px;line-height:16px;left:1090px;">0</div>
<div class="a t" style="top:869.5px;font-size:12.5px;line-height:16px;left:1178px;">Z</div>
<div class="a" style="left:1190px;top:868.5px;width:70px;height:17px;background:#ececec;border:1px solid #b9b9b9;box-sizing:border-box;border-radius:2px;"></div>
<div class="a t" style="top:869.0px;font-size:12.5px;line-height:16px;left:1193px;">0</div>
<div class="a t" style="top:889.5px;font-size:12.5px;line-height:16px;left:775px;">Rotation</div>
<div class="a t" style="top:889.5px;font-size:12.5px;line-height:16px;left:972px;">X</div>
<div class="a" style="left:984px;top:888.5px;width:84px;height:17px;background:#ececec;border:1px solid #b9b9b9;box-sizing:border-box;border-radius:2px;"></div>
<div class="a t" style="top:889.0px;font-size:12.5px;line-height:16px;left:987px;">-89.98</div>
<div class="a t" style="top:889.5px;font-size:12.5px;line-height:16px;left:1075px;">Y</div>
<div class="a" style="left:1087px;top:888.5px;width:84px;height:17px;background:#ececec;border:1px solid #b9b9b9;box-sizing:border-box;border-radius:2px;"></div>
<div class="a t" style="top:889.0px;font-size:12.5px;line-height:16px;left:1090px;">0</div>
<div class="a t" style="top:889.5px;font-size:12.5px;line-height:16px;left:1178px;">Z</div>
<div class="a" style="left:1190px;top:888.5px;width:70px;height:17px;background:#ececec;border:1px solid #b9b9b9;box-sizing:border-box;border-radius:2px;"></div>
<div class="a t" style="top:889.0px;font-size:12.5px;line-height:16px;left:1193px;">0</div>
<div class="a t" style="top:909.5px;font-size:12.5px;line-height:16px;left:775px;">Scale</div>
<div class="a t" style="top:909.5px;font-size:12.5px;line-height:16px;left:972px;">X</div>
<div class="a" style="left:984px;top:908.5px;width:84px;height:17px;background:#ececec;border:1px solid #b9b9b9;box-sizing:border-box;border-radius:2px;"></div>
<div class="a t" style="top:909.0px;font-size:12.5px;line-height:16px;left:987px;">1</div>
<div class="a t" style="top:909.5px;font-size:12.5px;line-height:16px;left:1075px;">Y</div>
<div class="a" style="left:1087px;top:908.5px;width:84px;height:17px;background:#ececec;border:1px solid #b9b9b9;box-sizing:border-box;border-radius:2px;"></div>
<div class="a t" style="top:909.0px;font-size:12.5px;line-height:16px;left:1090px;">1</div>
<div class="a t" style="top:909.5px;font-size:12.5px;line-height:16px;left:1178px;">Z</div>
<div class="a" style="left:1190px;top:908.5px;width:70px;height:17px;background:#ececec;border:1px solid #b9b9b9;box-sizing:border-box;border-radius:2px;"></div>
<div class="a t" style="top:909.0px;font-size:12.5px;line-height:16px;left:1193px;">1</div>
<div class="a" style="left:756px;top:932px;width:492px;height:1px;background:#999;"></div>
<div class="a" style="left:756px;top:933px;width:492px;height:22px;background:#cbcbcb;"></div>
<svg class="a" style="left:759px;top:939px;" width="10" height="10"><use href="#tdown"/></svg>
<svg class="a" style="left:776px;top:937px;" width="16" height="14"><use href="#smr"/></svg>
<svg class="a" style="left:797px;top:938px;" width="13" height="13"><use href="#chk"/></svg>
<div class="a t" style="top:936.5px;font-size:12.5px;line-height:16px;left:816px;font-weight:bold;">Skinned Mesh Renderer</div>
<svg class="a" style="left:1219px;top:938px;" width="12" height="12"><use href="#help"/></svg>
<svg class="a" style="left:1238px;top:938px;" width="12" height="12"><use href="#sliders"/></svg>
<div class="a" style="left:0px;top:1301px;width:754px;height:2px;background:#8e8e8e;"></div>
<div class="a" style="left:0px;top:1303px;width:754px;height:19px;background:#a5a5a5;"></div>
<div class="a" style="left:0px;top:1303px;width:80px;height:19px;background:#c6c6c6;"></div>
<svg class="a" style="left:6px;top:1307px;" width="12" height="10"><use href="#folder"/></svg>
<div class="a t" style="top:1305.0px;font-size:12.5px;line-height:16px;left:21px;color:#1a1a1a;">Project</div>
<svg class="a" style="left:88px;top:1307px;" width="11" height="11"><use href="#consoleic"/></svg>
<div class="a t" style="top:1305.0px;font-size:12.5px;line-height:16px;left:103px;color:#1a1a1a;">Console</div>
<svg class="a" style="left:720px;top:1306px;" width="10" height="11"><use href="#lock"/></svg>
<svg class="a" style="left:738px;top:1306px;" width="4" height="11"><use href="#dots"/></svg>
<div class="a" style="left:0px;top:1322px;width:754px;height:20px;background:#cbcbcb;"></div>
<svg class="a" style="left:6px;top:1326px;" width="12" height="12"><use href="#plus"/></svg>
<svg class="a" style="left:22px;top:1330px;" width="6" height="5"><use href="#arrowdn"/></svg>
<div class="a" style="left:340px;top:1325px;width:300px;height:16px;background:#f2f2f2;border:1px solid #b8b8b8;box-sizing:border-box;border-radius:4px;"></div>
<svg class="a" style="left:345px;top:1329px;" width="9" height="8"><use href="#search"/></svg>
<div class="a" style="left:641px;top:1323px;width:1px;height:18px;background:#b0b0b0;"></div>
<div class="a" style="left:667px;top:1323px;width:1px;height:18px;background:#b0b0b0;"></div>
<div class="a" style="left:692px;top:1323px;width:1px;height:18px;background:#b0b0b0;"></div>
<div class="a" style="left:718px;top:1323px;width:1px;height:18px;background:#b0b0b0;"></div>
<div class="a t" style="top:1324.5px;font-size:12px;line-height:16px;left:741px;color:#222;">2</div>
<div class="a" style="left:0px;top:1341px;width:754px;height:1px;background:#a0a0a0;"></div>
<div class="a" style="left:0px;top:1342px;width:100px;height:183px;background:#c6c6c6;"></div>
<div class="a" style="left:100px;top:1342px;width:13px;height:183px;background:#c0c0c0;"></div>
<svg class="a" style="left:103px;top:1349px;transform:rotate(180deg);" width="8" height="6"><use href="#arrowdn"/></svg>
<div class="a" style="left:103px;top:1457px;width:7px;height:40px;background:#a3a3a3;border-radius:3px;"></div>
<div class="a" style="left:113px;top:1342px;width:641px;height:21px;background:#d3d3d3;"></div>
<div class="a" style="left:113px;top:1363px;width:641px;height:162px;background:#c6c6c6;"></div>
<div class="a" style="left:112px;top:1342px;width:1px;height:183px;background:#a8a8a8;"></div>
<div class="a t" style="top:1345.0px;font-size:12.5px;line-height:16px;left:118px;">Assets</div>
<div class="a t" style="top:1345.0px;font-size:12.5px;line-height:16px;left:173px;">AOT Assets</div>
<div class="a t" style="top:1345.0px;font-size:12.5px;line-height:16px;left:256px;">Player</div>
<div class="a t" style="top:1345.0px;font-size:12.5px;line-height:16px;left:310px;">_Units</div>
<div class="a t" style="top:1345.0px;font-size:12.5px;line-height:16px;left:362px;">Troop</div>
<div class="a t" style="top:1345.0px;font-size:12.5px;line-height:16px;left:413px;">Soldiers</div>
<div class="a t" style="top:1345.0px;font-size:12.5px;line-height:16px;left:476px;">_Army Man</div>
<div class="a t" style="top:1345.0px;font-size:12.5px;line-height:16px;left:556px;font-weight:bold;">_Data</div>
<svg class="a" style="left:161px;top:1348px;" width="7" height="10"><use href="#chev"/></svg>
<svg class="a" style="left:245px;top:1348px;" width="7" height="10"><use href="#chev"/></svg>
<svg class="a" style="left:299px;top:1348px;" width="7" height="10"><use href="#chev"/></svg>
<svg class="a" style="left:351px;top:1348px;" width="7" height="10"><use href="#chev"/></svg>
<svg class="a" style="left:402.5px;top:1348px;" width="7" height="10"><use href="#chev"/></svg>
<svg class="a" style="left:464px;top:1348px;" width="7" height="10"><use href="#chev"/></svg>
<svg class="a" style="left:543.5px;top:1348px;" width="7" height="10"><use href="#chev"/></svg>
<svg class="a" style="left:57px;top:1353px;" width="10" height="10"><use href="#tright"/></svg>
<svg class="a" style="left:73px;top:1352px;" width="14" height="12"><use href="#folder"/></svg>
<div class="a t" style="top:1350.5px;font-size:12.5px;line-height:16px;left:88px;color:#1a1a1a;clip-path:inset(0 0 0 0);">_N</div>
<svg class="a" style="left:57px;top:1369px;" width="10" height="10"><use href="#tright"/></svg>
<svg class="a" style="left:73px;top:1368px;" width="14" height="12"><use href="#folder"/></svg>
<div class="a t" style="top:1366.5px;font-size:12.5px;line-height:16px;left:88px;color:#1a1a1a;clip-path:inset(0 0 0 0);">Sp</div>
<svg class="a" style="left:57px;top:1385px;" width="10" height="10"><use href="#tdown"/></svg>
<svg class="a" style="left:73px;top:1384px;" width="14" height="12"><use href="#folderopen"/></svg>
<div class="a t" style="top:1382.5px;font-size:12.5px;line-height:16px;left:88px;color:#1a1a1a;clip-path:inset(0 0 0 0);">Tr</div>
<svg class="a" style="left:71px;top:1401px;" width="10" height="10"><use href="#tright"/></svg>
<svg class="a" style="left:87px;top:1400px;" width="14" height="12"><use href="#folder"/></svg>
<svg class="a" style="left:71px;top:1417px;" width="10" height="10"><use href="#tdown"/></svg>
<svg class="a" style="left:87px;top:1416px;" width="14" height="12"><use href="#folderopen"/></svg>
<svg class="a" style="left:85px;top:1433px;" width="10" height="10"><use href="#tdown"/></svg>
<div class="a" style="left:90px;top:1342px;width:10px;height:6px;background:#c6c6c6;"></div>
<svg class="a" style="left:137px;top:1385px;width:49px;height:41px;" width="49" height="41"><use href="#bigfolder"/></svg>
<div class="a t" style="top:1438.5px;font-size:10.5px;line-height:16px;left:-138px;width:600px;text-align:center;color:#222;">_Mold</div>
<svg class="a" style="left:215px;top:1385px;width:49px;height:41px;" width="49" height="41"><use href="#bigfolder"/></svg>
<div class="a t" style="top:1438.5px;font-size:10.5px;line-height:16px;left:-60px;width:600px;text-align:center;color:#222;">_Sounds</div>
<div class="a" style="left:286px;top:1376px;width:61px;height:60px;background:#5c5c5c;"></div>
<div class="a t" style="top:1438.5px;font-size:10.5px;line-height:16px;left:16px;width:600px;text-align:center;color:#222;">[MESH] M1...</div>
<div class="a" style="left:365px;top:1376px;width:61px;height:60px;background:#5c5c5c;"></div>
<div class="a t" style="top:1438.5px;font-size:10.5px;line-height:16px;left:95px;width:600px;text-align:center;color:#222;">[SKINNED...</div>
<div class="a" style="left:442px;top:1376px;width:61px;height:60px;background:#5c5c5c;"></div>
<div class="a t" style="top:1438.5px;font-size:10.5px;line-height:16px;left:172px;width:600px;text-align:center;color:#222;">[SKINNED ...</div>
<div class="a" style="left:519px;top:1376px;width:61px;height:60px;background:#5c5c5c;"></div>
<div class="a t" style="top:1438.5px;font-size:10.5px;line-height:16px;left:249px;width:600px;text-align:center;color:#222;">[TROOP] B...</div>
<div class="a" style="left:597px;top:1376px;width:61px;height:60px;background:#5c5c5c;"></div>
<div class="a t" style="top:1438.5px;font-size:10.5px;line-height:16px;left:327px;width:600px;text-align:center;color:#222;">ArmyMan ...</div>
<div class="a" style="left:675px;top:1376px;width:61px;height:60px;background:#5c5c5c;"></div>
<div class="a t" style="top:1438.5px;font-size:10.5px;line-height:16px;left:405px;width:600px;text-align:center;color:#222;">ArmyMan ...</div>
<div class="a" style="left:131px;top:1469px;width:61px;height:56px;background:#5c5c5c;"></div>
<div class="a" style="left:209px;top:1469px;width:61px;height:56px;background:#5c5c5c;"></div>
<div class="a" style="left:970px;top:960px;width:32px;height:22px;background:#e0e0e0;border:1px solid #aaa;box-sizing:border-box;border-radius:2px;"></div>
<div class="a t" style="top:966.0px;font-size:12.5px;line-height:16px;left:1009px;">Edit Bounds</div>
<div class="a t" style="top:1006.0px;font-size:12.5px;line-height:16px;left:972px;">X</div>
<div class="a" style="left:986px;top:1005px;width:82px;height:17px;background:#ececec;border:1px solid #b9b9b9;box-sizing:border-box;border-radius:2px;"></div>
<div class="a t" style="top:1005.5px;font-size:12.5px;line-height:16px;left:989px;">0.04407114</div>
<div class="a t" style="top:1006.0px;font-size:12.5px;line-height:16px;left:1075px;">Y</div>
<div class="a" style="left:1089px;top:1005px;width:82px;height:17px;background:#ececec;border:1px solid #b9b9b9;box-sizing:border-box;border-radius:2px;"></div>
<div class="a t" style="top:1005.5px;font-size:12.5px;line-height:16px;left:1092px;">-0.00300159</div>
<div class="a t" style="top:1006.0px;font-size:12.5px;line-height:16px;left:1178px;">Z</div>
<div class="a" style="left:1192px;top:1005px;width:70px;height:17px;background:#ececec;border:1px solid #b9b9b9;box-sizing:border-box;border-radius:2px;"></div>
<div class="a t" style="top:1005.5px;font-size:12.5px;line-height:16px;left:1195px;">3.032386</div>
<div class="a t" style="top:1026.0px;font-size:12.5px;line-height:16px;left:972px;">X</div>
<div class="a" style="left:986px;top:1025px;width:82px;height:17px;background:#ececec;border:1px solid #b9b9b9;box-sizing:border-box;border-radius:2px;"></div>
<div class="a t" style="top:1025.5px;font-size:12.5px;line-height:16px;left:989px;">0.4259548</div>
<div class="a t" style="top:1026.0px;font-size:12.5px;line-height:16px;left:1075px;">Y</div>
<div class="a" style="left:1089px;top:1025px;width:82px;height:17px;background:#ececec;border:1px solid #b9b9b9;box-sizing:border-box;border-radius:2px;"></div>
<div class="a t" style="top:1025.5px;font-size:12.5px;line-height:16px;left:1092px;">0.09440923</div>
<div class="a t" style="top:1026.0px;font-size:12.5px;line-height:16px;left:1178px;">Z</div>
<div class="a" style="left:1192px;top:1025px;width:70px;height:17px;background:#ececec;border:1px solid #b9b9b9;box-sizing:border-box;border-radius:2px;"></div>
<div class="a t" style="top:1025.5px;font-size:12.5px;line-height:16px;left:1195px;">0.381178</div>
<div class="a" style="left:972px;top:1045px;width:290px;height:17px;background:#ececec;border:1px solid #b9b9b9;box-sizing:border-box;border-radius:2px;"></div>
<div class="a t" style="top:1045.5px;font-size:12.5px;line-height:16px;left:975px;">Auto</div>
<div class="a" style="left:972px;top:1085px;width:290px;height:17px;background:#ececec;border:1px solid #b9b9b9;box-sizing:border-box;border-radius:2px;"></div>
<div class="a t" style="top:1085.5px;font-size:12.5px;line-height:16px;left:987px;">ArmyMan</div>
<div class="a" style="left:972px;top:1105px;width:290px;height:17px;background:#ececec;border:1px solid #b9b9b9;box-sizing:border-box;border-radius:2px;"></div>
<div class="a t" style="top:1105.5px;font-size:12.5px;line-height:16px;left:987px;">Bip001_Pelvis (Transform)</div>
<div class="a" style="left:972px;top:1145px;width:290px;height:17px;background:#ececec;border:1px solid #b9b9b9;box-sizing:border-box;border-radius:2px;"></div>
<div class="a t" style="top:1145.5px;font-size:12.5px;line-height:16px;left:975px;">1</div>
<div class="a t" style="top:1166.0px;font-size:12.5px;line-height:16px;left:790px;">Element 0</div>
<div class="a" style="left:972px;top:1165px;width:290px;height:17px;background:#ececec;border:1px solid #b9b9b9;box-sizing:border-box;border-radius:2px;"></div>
<div class="a t" style="top:1165.5px;font-size:12.5px;line-height:16px;left:987px;">Default-Material</div>
<div class="a" style="left:975px;top:1169px;width:9px;height:9px;background:#2f7fe0;border-radius:5px;"></div>
<svg class="a" style="left:759px;top:1189px;" width="10" height="10"><use href="#tdown"/></svg>
<div class="a t" style="top:1186.0px;font-size:12.5px;line-height:16px;left:776px;font-weight:bold;">Lighting</div>
<div class="a t" style="top:1205.0px;font-size:12.5px;line-height:16px;left:790px;">Cast Shadows</div>
<div class="a" style="left:972px;top:1204px;width:290px;height:17px;background:#ececec;border:1px solid #b9b9b9;box-sizing:border-box;border-radius:2px;"></div>
<div class="a t" style="top:1204.5px;font-size:12.5px;line-height:16px;left:975px;">On</div>
<div class="a t" style="top:1225.0px;font-size:12.5px;line-height:16px;left:790px;color:#7d7d7d;">Receive Shadows</div>
<svg class="a" style="left:972px;top:1226px;opacity:0.5;" width="13" height="13"><use href="#chk"/></svg>
<svg class="a" style="left:759px;top:1249px;" width="10" height="10"><use href="#tdown"/></svg>
<div class="a t" style="top:1246.0px;font-size:12.5px;line-height:16px;left:776px;font-weight:bold;">Probes</div>
<div class="a t" style="top:1265.0px;font-size:12.5px;line-height:16px;left:790px;">Light Probes</div>
<div class="a" style="left:972px;top:1264px;width:290px;height:17px;background:#ececec;border:1px solid #b9b9b9;box-sizing:border-box;border-radius:2px;"></div>
<div class="a t" style="top:1264.5px;font-size:12.5px;line-height:16px;left:975px;">Blend Probes</div>
<div class="a t" style="top:1285.0px;font-size:12.5px;line-height:16px;left:790px;color:#7d7d7d;">Reflection Probes</div>
<div class="a" style="left:972px;top:1284px;width:290px;height:17px;background:#d9d9d9;border:1px solid #b9b9b9;box-sizing:border-box;border-radius:2px;"></div>
<div class="a t" style="top:1284.5px;font-size:12.5px;line-height:16px;left:975px;color:#888;">Simple</div>
<div class="a t" style="top:1306.0px;font-size:12.5px;line-height:16px;left:790px;">Anchor Override</div>
<div class="a" style="left:972px;top:1305px;width:290px;height:17px;background:#ececec;border:1px solid #b9b9b9;box-sizing:border-box;border-radius:2px;"></div>
<div class="a t" style="top:1305.5px;font-size:12.5px;line-height:16px;left:975px;">None (Transform)</div>
<div class="a" style="left:790px;top:1325px;width:470px;height:36px;background:#cdcdcd;border:1px solid #b3b3b3;box-sizing:border-box;border-radius:3px;"></div>
<svg class="a" style="left:793px;top:1327px;" width="32" height="32" viewBox="0 0 32 32"><path d="M15 2 C7 2 2 7 2 14 C2 20 6 25 12 26 L17 31 L17 26 C24 25 28 20 28 14 C28 7 23 2 15 2 Z" fill="#fff" stroke="#777" stroke-width="1"/><path d="M15 7 V18" stroke="#333" stroke-width="3.2" stroke-linecap="round"/><circle cx="15" cy="22.5" r="1.9" fill="#333"/></svg>
<div class="a t" style="top:1335.5px;font-size:11px;line-height:16px;left:826px;color:#222;">In Deferred Shading, all objects receive shadows and get per-pixel reflection probes.</div>
<svg class="a" style="left:759px;top:1369px;" width="10" height="10"><use href="#tdown"/></svg>
<div class="a t" style="top:1366.0px;font-size:12.5px;line-height:16px;left:776px;font-weight:bold;">Additional Settings</div>
<div class="a t" style="top:1386.0px;font-size:12.5px;line-height:16px;left:790px;">Skinned Motion Vectors</div>
<svg class="a" style="left:972px;top:1387px;" width="13" height="13"><use href="#chk"/></svg>
<div class="a t" style="top:1406.0px;font-size:12.5px;line-height:16px;left:790px;">Dynamic Occlusion</div>
<svg class="a" style="left:972px;top:1407px;" width="13" height="13"><use href="#chk"/></svg>
<div class="a" style="left:756px;top:1428px;width:492px;height:1px;background:#a5a5a5;"></div>
<div class="a" style="left:756px;top:1429px;width:492px;height:54px;background:#cbcbcb;"></div>
<div class="a" style="left:770px;top:1432px;width:36px;height:36px;background:#d8d8d8;"></div>
<svg class="a" style="left:772px;top:1434px;" width="32" height="32" viewBox="0 0 32 32"><defs><radialGradient id="ws" cx="0.35" cy="0.3" r="0.8"><stop offset="0" stop-color="#c9c9c9"/><stop offset="0.6" stop-color="#7d7d7d"/><stop offset="1" stop-color="#3d3d3d"/></radialGradient></defs><circle cx="16" cy="16" r="15" fill="url(#ws)"/></svg>
<div class="a t" style="top:1435.5px;font-size:13.5px;line-height:16px;left:812px;">Default-Material</div>
<div class="a t" style="top:1458.5px;font-size:12.5px;line-height:16px;left:809px;color:#7a7a7a;">Shader</div>
<div class="a" style="left:861px;top:1458px;width:400px;height:17px;background:#d6d6d6;border:1px solid #b9b9b9;box-sizing:border-box;border-radius:2px;"></div>
<div class="a t" style="top:1458.5px;font-size:12.5px;line-height:16px;left:864px;color:#7a7a7a;">Standard</div>
<svg class="a" style="left:759px;top:1467px;" width="9" height="10"><use href="#tright"/></svg>
<div class="a" style="left:756px;top:1483px;width:492px;height:1px;background:#a5a5a5;"></div>
<div class="a" style="left:756px;top:1492px;width:492px;height:1px;background:#b0b0b0;"></div>
<div class="a" style="left:903px;top:1501px;width:229px;height:22px;background:#e4e4e4;border:1px solid #a0a0a0;box-sizing:border-box;border-radius:3px;"></div>
<div class="a t" style="top:1504.0px;font-size:12.5px;line-height:16px;left:717px;width:600px;text-align:center;">Add Component</div>
<div class="a" style="left:762px;top:955px;width:226px;height:215px;background:#f0f0f0;box-shadow:2px 2px 3px rgba(0,0,0,0.25);"></div>
<div class="a" style="left:791px;top:955px;width:1px;height:215px;background:#e2e2e2;"></div>
<div class="a t" style="top:959.0px;font-size:12.5px;line-height:16px;left:796px;">Reset</div>
<div class="a" style="left:793px;top:983px;width:193px;height:1px;background:#d9d9d9;"></div>
<div class="a t" style="top:989.0px;font-size:12.5px;line-height:16px;left:796px;">Remove Component</div>
<div class="a t" style="top:1011.0px;font-size:12.5px;line-height:16px;left:796px;color:#888;">Move Up</div>
<div class="a t" style="top:1033.0px;font-size:12.5px;line-height:16px;left:796px;color:#888;">Move Down</div>
<div class="a" style="left:765px;top:1052px;width:220px;height:22px;background:#dde8f5;border:1px solid #b8cfe8;box-sizing:border-box;"></div>
<div class="a t" style="top:1055.0px;font-size:12.5px;line-height:16px;left:796px;">Copy Component</div>
<div class="a t" style="top:1077.0px;font-size:12.5px;line-height:16px;left:796px;color:#888;">Paste Component As New</div>
<div class="a t" style="top:1099.0px;font-size:12.5px;line-height:16px;left:796px;color:#888;">Paste Component Values</div>
<div class="a" style="left:793px;top:1123px;width:193px;height:1px;background:#d9d9d9;"></div>
<div class="a t" style="top:1129.0px;font-size:12.5px;line-height:16px;left:796px;">Find References In Scene</div>
<div class="a t" style="top:1151.0px;font-size:12.5px;line-height:16px;left:796px;color:#888;">Select Material</div>
<div class="a" style="left:0px;top:1532px;width:325px;height:13px;background:#a5a5a5;"></div>
<div class="a" style="left:0px;top:1532px;width:93px;height:13px;background:#c6c6c6;"></div>
<svg class="a" style="left:6px;top:1534px;" width="12" height="10"><use href="#hicon"/></svg>
<div class="a t" style="top:1531.5px;font-size:12.5px;line-height:14px;left:21px;color:#1a1a1a;">Hierarchy</div>
<svg class="a" style="left:290px;top:1533px;" width="10" height="11"><use href="#lock"/></svg>
<svg class="a" style="left:309px;top:1533px;" width="4" height="11"><use href="#dots"/></svg>
<div class="a" style="left:0px;top:1545px;width:325px;height:21px;background:#cbcbcb;"></div>
<svg class="a" style="left:5px;top:1550px;" width="12" height="12"><use href="#plus"/></svg>
<svg class="a" style="left:21px;top:1554px;" width="6" height="5"><use href="#arrowdn"/></svg>
<div class="a" style="left:42px;top:1548px;width:280px;height:16px;background:#f2f2f2;border:1px solid #b8b8b8;box-sizing:border-box;border-radius:4px;"></div>
<svg class="a" style="left:48px;top:1551px;" width="12" height="10"><use href="#search"/></svg>
<div class="a t" style="top:1548.0px;font-size:11.5px;line-height:16px;left:61px;color:#888;">All</div>
<div class="a" style="left:0px;top:1566px;width:325px;height:25px;background:#e4e4e4;"></div>
<div class="a t" style="top:1571.0px;font-size:13px;line-height:16px;left:5px;color:#888;">&lt;</div>
<svg class="a" style="left:70px;top:1572px;" width="14" height="14"><use href="#pcube"/></svg>
<div class="a t" style="top:1571.5px;font-size:12.5px;line-height:16px;left:87px;font-weight:bold;">[SKINNED MESH] ArmyMan*</div>
<div class="a" style="left:0px;top:1591px;width:325px;height:475px;background:#c6c6c6;"></div>
<div class="a" style="left:0px;top:1591px;width:30px;height:475px;background:#adadad;"></div>
<div class="a" style="left:325px;top:1532px;width:2px;height:534px;background:#8d8d8d;"></div>
<svg class="a" style="left:33px;top:1595px;" width="10" height="10"><use href="#tdown"/></svg>
<svg class="a" style="left:45px;top:1593px;" width="14" height="14"><use href="#bcube"/></svg>
<div class="a t" style="top:1592.5px;font-size:12.5px;line-height:16px;left:62px;color:#1c4a8f;">[SKINNED MESH] ArmyMan</div>
<div class="a" style="left:0px;top:1608px;width:314px;height:16px;background:#b3b3b3;"></div>
<svg class="a" style="left:47px;top:1611px;" width="10" height="10"><use href="#tdown"/></svg>
<svg class="a" style="left:59px;top:1609px;" width="14" height="14"><use href="#cube"/></svg>
<div class="a t" style="top:1608.5px;font-size:12.5px;line-height:16px;left:76px;">LOD_0</div>
<svg class="a" style="left:73px;top:1625px;" width="14" height="14"><use href="#cube"/></svg>
<div class="a t" style="top:1624.5px;font-size:12.5px;line-height:16px;left:90px;color:#1c4a8f;">LOD_1</div>
<svg class="a" style="left:73px;top:1641px;" width="14" height="14"><use href="#cube"/></svg>
<div class="a t" style="top:1640.5px;font-size:12.5px;line-height:16px;left:90px;color:#1c4a8f;">LOD_2</div>
<svg class="a" style="left:47px;top:1659px;" width="10" height="10"><use href="#tright"/></svg>
<svg class="a" style="left:59px;top:1657px;" width="14" height="14"><use href="#cube"/></svg>
<div class="a t" style="top:1656.5px;font-size:12.5px;line-height:16px;left:76px;color:#1c4a8f;">[COLLIDER FOLLOW] Parent</div>
<svg class="a" style="left:47px;top:1675px;" width="10" height="10"><use href="#tright"/></svg>
<svg class="a" style="left:59px;top:1673px;" width="14" height="14"><use href="#cube"/></svg>
<div class="a t" style="top:1672.5px;font-size:12.5px;line-height:16px;left:76px;color:#1c4a8f;">[ATTACHMENT FOLLOW] Parent</div>
<svg class="a" style="left:47px;top:1692px;" width="10" height="10"><use href="#tdown"/></svg>
<svg class="a" style="left:59px;top:1690px;" width="14" height="14"><use href="#cubeg"/></svg>
<div class="a t" style="top:1689.5px;font-size:12.5px;line-height:16px;left:76px;color:#7d7d7d;">Bip001</div>
<svg class="a" style="left:59px;top:1707px;" width="14" height="14"><use href="#bcube"/></svg>
<div class="a t" style="top:1706.5px;font-size:12.5px;line-height:16px;left:76px;color:#1c4a8f;">[isVisible] Soldier Base</div>
<div class="a t" style="top:1593.0px;font-size:12px;line-height:16px;left:303px;color:#888;transform:scaleX(0.7);">&gt;</div>
<div class="a" style="left:314px;top:1592px;width:11px;height:472px;background:#c4c4c4;"></div>
<div class="a" style="left:316px;top:1608px;width:8px;height:445px;background:#a9a9a9;border-radius:4px;"></div>
<svg class="a" style="left:315px;top:1597px;transform:rotate(180deg);" width="9" height="6"><use href="#arrowdn"/></svg>
<svg class="a" style="left:315px;top:2055px;" width="9" height="6"><use href="#arrowdn"/></svg>
<div class="a" style="left:327px;top:1532px;width:427px;height:13px;background:#a5a5a5;"></div>
<div class="a" style="left:327px;top:1532px;width:77px;height:13px;background:#c6c6c6;"></div>
<svg class="a" style="left:334px;top:1533px;" width="11" height="11"><use href="#grid"/></svg>
<div class="a t" style="top:1531.5px;font-size:12.5px;line-height:14px;left:351px;color:#1a1a1a;">Scene</div>
<svg class="a" style="left:412px;top:1534px;" width="15" height="9"><use href="#gamepad"/></svg>
<div class="a t" style="top:1531.5px;font-size:12.5px;line-height:14px;left:429px;color:#1a1a1a;">Game</div>
<svg class="a" style="left:489px;top:1533px;" width="11" height="11"><use href="#bag"/></svg>
<div class="a t" style="top:1531.5px;font-size:12.5px;line-height:14px;left:504px;color:#1a1a1a;">Asset Store</div>
<svg class="a" style="left:738px;top:1533px;" width="4" height="11"><use href="#dots"/></svg>
<div class="a" style="left:327px;top:1545px;width:427px;height:21px;background:#cbcbcb;"></div>
<div class="a t" style="top:1548.0px;font-size:12.5px;line-height:16px;left:331px;color:#1a1a1a;">Shaded</div>
<svg class="a" style="left:435px;top:1553px;" width="8" height="6"><use href="#arrowdn"/></svg>
<div class="a" style="left:449px;top:1547px;width:1px;height:17px;background:#b0b0b0;"></div>
<div class="a" style="left:327px;top:1566px;width:427px;height:26px;background:#e4e4e4;"></div>
<svg class="a" style="left:333px;top:1573px;" width="14" height="14"><use href="#unity"/></svg>
<div class="a t" style="top:1572.0px;font-size:12.5px;line-height:16px;left:349px;color:#222;">Scenes</div>
<div class="a" style="left:399px;top:1574px;width:1px;height:12px;background:#aaa;"></div>
<svg class="a" style="left:409px;top:1573px;" width="14" height="14"><use href="#pcube"/></svg>
<div class="a t" style="top:1572.0px;font-size:12.5px;line-height:16px;left:425px;font-weight:bold;">[SKINNED MESH] ArmyMan</div>
<div class="a" style="left:630px;top:1571px;width:42px;height:18px;background:#e8e8e8;border:1px solid #999;box-sizing:border-box;border-radius:2px;"></div>
<div class="a t" style="top:1572.0px;font-size:12.5px;line-height:16px;left:351px;width:600px;text-align:center;">Save</div>
<svg class="a" style="left:676px;top:1574px;" width="14" height="14"><use href="#unchk"/></svg>
<div class="a t" style="top:1573.0px;font-size:12.5px;line-height:16px;left:692px;">Auto Save</div>
<div class="a" style="left:327px;top:1592px;width:427px;height:474px;background:#223a54;"></div>
<div class="a" style="left:754px;top:1532px;width:2px;height:756px;background:#8d8d8d;"></div>
<div class="a" style="left:756px;top:1532px;width:492px;height:14px;background:#a5a5a5;"></div>
<div class="a" style="left:756px;top:1532px;width:93px;height:14px;background:#c6c6c6;"></div>
<svg class="a" style="left:765px;top:1534px;" width="10" height="10"><use href="#info"/></svg>
<div class="a t" style="top:1531.5px;font-size:12.5px;line-height:14px;left:780px;color:#1a1a1a;">Inspector</div>
<div class="a" style="left:756px;top:1546px;width:492px;height:742px;background:#c6c6c6;"></div>
<svg class="a" style="left:763px;top:1556px;" width="22" height="22"><use href="#bcube"/></svg>
<svg class="a" style="left:783px;top:1578px;" width="7" height="5"><use href="#arrowdn"/></svg>
<svg class="a" style="left:802px;top:1558px;" width="13" height="13"><use href="#chk"/></svg>
<div class="a" style="left:823px;top:1555px;width:385px;height:18px;background:#ececec;border:1px solid #b8b8b8;box-sizing:border-box;border-radius:3px;"></div>
<div class="a t" style="top:1556.5px;font-size:12.5px;line-height:16px;left:826px;font-weight:bold;">LOD_0</div>
<svg class="a" style="left:1213px;top:1558px;" width="13" height="13"><use href="#unchk"/></svg>
<div class="a t" style="top:1557.0px;font-size:12.5px;line-height:16px;left:1230px;color:#222;">Sta</div>
<div class="a t" style="top:1580.5px;font-size:12.5px;line-height:16px;left:798px;color:#222;">Tag</div>
<div class="a" style="left:824px;top:1579px;width:204px;height:18px;background:#dfdfdf;border:1px solid #aaa;box-sizing:border-box;border-radius:3px;"></div>
<div class="a t" style="top:1580.0px;font-size:12.5px;line-height:16px;left:828px;">Untagged</div>
<svg class="a" style="left:1015px;top:1585px;" width="8" height="6"><use href="#arrowdn"/></svg>
<div class="a t" style="top:1580.5px;font-size:12.5px;line-height:16px;left:1043px;color:#222;">Layer</div>
<div class="a" style="left:1080px;top:1579px;width:180px;height:18px;background:#dfdfdf;border:1px solid #aaa;box-sizing:border-box;border-radius:3px;"></div>
<div class="a t" style="top:1580.0px;font-size:12.5px;line-height:16px;left:1083px;">Default</div>
<div class="a" style="left:756px;top:1604px;width:492px;height:1px;background:#999;"></div>
<div class="a" style="left:756px;top:1605px;width:492px;height:21px;background:#cbcbcb;"></div>
<svg class="a" style="left:759px;top:1611px;" width="10" height="10"><use href="#tdown"/></svg>
<svg class="a" style="left:776px;top:1609px;" width="14" height="14"><use href="#transform"/></svg>
<div class="a t" style="top:1608.5px;font-size:12.5px;line-height:16px;left:816px;font-weight:bold;">Transform</div>
<svg class="a" style="left:1219px;top:1610px;" width="12" height="12"><use href="#help"/></svg>
<svg class="a" style="left:1238px;top:1610px;" width="12" height="12"><use href="#sliders"/></svg>
<div class="a t" style="top:1632.5px;font-size:12.5px;line-height:16px;left:775px;">Position</div>
<div class="a t" style="top:1632.5px;font-size:12.5px;line-height:16px;left:972px;">X</div>
<div class="a" style="left:984px;top:1631.5px;width:84px;height:17px;background:#ececec;border:1px solid #b9b9b9;box-sizing:border-box;border-radius:2px;"></div>
<div class="a t" style="top:1632.0px;font-size:12.5px;line-height:16px;left:987px;">0</div>
<div class="a t" style="top:1632.5px;font-size:12.5px;line-height:16px;left:1075px;">Y</div>
<div class="a" style="left:1087px;top:1631.5px;width:84px;height:17px;background:#ececec;border:1px solid #b9b9b9;box-sizing:border-box;border-radius:2px;"></div>
<div class="a t" style="top:1632.0px;font-size:12.5px;line-height:16px;left:1090px;">0</div>
<div class="a t" style="top:1632.5px;font-size:12.5px;line-height:16px;left:1178px;">Z</div>
<div class="a" style="left:1190px;top:1631.5px;width:70px;height:17px;background:#ececec;border:1px solid #b9b9b9;box-sizing:border-box;border-radius:2px;"></div>
<div class="a t" style="top:1632.0px;font-size:12.5px;line-height:16px;left:1193px;">0</div>
<div class="a t" style="top:1652.5px;font-size:12.5px;line-height:16px;left:775px;">Rotation</div>
<div class="a t" style="top:1652.5px;font-size:12.5px;line-height:16px;left:972px;">X</div>
<div class="a" style="left:984px;top:1651.5px;width:84px;height:17px;background:#ececec;border:1px solid #b9b9b9;box-sizing:border-box;border-radius:2px;"></div>
<div class="a t" style="top:1652.0px;font-size:12.5px;line-height:16px;left:987px;">0</div>
<div class="a t" style="top:1652.5px;font-size:12.5px;line-height:16px;left:1075px;">Y</div>
<div class="a" style="left:1087px;top:1651.5px;width:84px;height:17px;background:#ececec;border:1px solid #b9b9b9;box-sizing:border-box;border-radius:2px;"></div>
<div class="a t" style="top:1652.0px;font-size:12.5px;line-height:16px;left:1090px;">0</div>
<div class="a t" style="top:1652.5px;font-size:12.5px;line-height:16px;left:1178px;">Z</div>
<div class="a" style="left:1190px;top:1651.5px;width:70px;height:17px;background:#ececec;border:1px solid #b9b9b9;box-sizing:border-box;border-radius:2px;"></div>
<div class="a t" style="top:1652.0px;font-size:12.5px;line-height:16px;left:1193px;">0</div>
<div class="a t" style="top:1672.5px;font-size:12.5px;line-height:16px;left:775px;">Scale</div>
<div class="a t" style="top:1672.5px;font-size:12.5px;line-height:16px;left:972px;">X</div>
<div class="a" style="left:984px;top:1671.5px;width:84px;height:17px;background:#ececec;border:1px solid #b9b9b9;box-sizing:border-box;border-radius:2px;"></div>
<div class="a t" style="top:1672.0px;font-size:12.5px;line-height:16px;left:987px;">1</div>
<div class="a t" style="top:1672.5px;font-size:12.5px;line-height:16px;left:1075px;">Y</div>
<div class="a" style="left:1087px;top:1671.5px;width:84px;height:17px;background:#ececec;border:1px solid #b9b9b9;box-sizing:border-box;border-radius:2px;"></div>
<div class="a t" style="top:1672.0px;font-size:12.5px;line-height:16px;left:1090px;">1</div>
<div class="a t" style="top:1672.5px;font-size:12.5px;line-height:16px;left:1178px;">Z</div>
<div class="a" style="left:1190px;top:1671.5px;width:70px;height:17px;background:#ececec;border:1px solid #b9b9b9;box-sizing:border-box;border-radius:2px;"></div>
<div class="a t" style="top:1672.0px;font-size:12.5px;line-height:16px;left:1193px;">1</div>
<div class="a" style="left:756px;top:1695px;width:492px;height:1px;background:#999;"></div>
<div class="a" style="left:756px;top:1696px;width:492px;height:22px;background:#cbcbcb;"></div>
<svg class="a" style="left:759px;top:1702px;" width="10" height="10"><use href="#tdown"/></svg>
<svg class="a" style="left:776px;top:1700px;" width="16" height="14"><use href="#smr"/></svg>
<svg class="a" style="left:797px;top:1701px;" width="13" height="13"><use href="#chk"/></svg>
<div class="a t" style="top:1699.5px;font-size:12.5px;line-height:16px;left:816px;font-weight:bold;">Skinned Mesh Renderer</div>
<svg class="a" style="left:1219px;top:1701px;" width="12" height="12"><use href="#help"/></svg>
<svg class="a" style="left:1238px;top:1701px;" width="12" height="12"><use href="#sliders"/></svg>
<div class="a" style="left:0px;top:2064px;width:754px;height:2px;background:#8e8e8e;"></div>
<div class="a" style="left:0px;top:2066px;width:754px;height:19px;background:#a5a5a5;"></div>
<div class="a" style="left:0px;top:2066px;width:80px;height:19px;background:#c6c6c6;"></div>
<svg class="a" style="left:6px;top:2070px;" width="12" height="10"><use href="#folder"/></svg>
<div class="a t" style="top:2068.0px;font-size:12.5px;line-height:16px;left:21px;color:#1a1a1a;">Project</div>
<svg class="a" style="left:88px;top:2070px;" width="11" height="11"><use href="#consoleic"/></svg>
<div class="a t" style="top:2068.0px;font-size:12.5px;line-height:16px;left:103px;color:#1a1a1a;">Console</div>
<svg class="a" style="left:720px;top:2069px;" width="10" height="11"><use href="#lock"/></svg>
<svg class="a" style="left:738px;top:2069px;" width="4" height="11"><use href="#dots"/></svg>
<div class="a" style="left:0px;top:2085px;width:754px;height:20px;background:#cbcbcb;"></div>
<svg class="a" style="left:6px;top:2089px;" width="12" height="12"><use href="#plus"/></svg>
<svg class="a" style="left:22px;top:2093px;" width="6" height="5"><use href="#arrowdn"/></svg>
<div class="a" style="left:340px;top:2088px;width:300px;height:16px;background:#f2f2f2;border:1px solid #b8b8b8;box-sizing:border-box;border-radius:4px;"></div>
<svg class="a" style="left:345px;top:2092px;" width="9" height="8"><use href="#search"/></svg>
<div class="a" style="left:641px;top:2086px;width:1px;height:18px;background:#b0b0b0;"></div>
<div class="a" style="left:667px;top:2086px;width:1px;height:18px;background:#b0b0b0;"></div>
<div class="a" style="left:692px;top:2086px;width:1px;height:18px;background:#b0b0b0;"></div>
<div class="a" style="left:718px;top:2086px;width:1px;height:18px;background:#b0b0b0;"></div>
<div class="a t" style="top:2087.5px;font-size:12px;line-height:16px;left:741px;color:#222;">2</div>
<div class="a" style="left:0px;top:2104px;width:754px;height:1px;background:#a0a0a0;"></div>
<div class="a" style="left:0px;top:2105px;width:100px;height:183px;background:#c6c6c6;"></div>
<div class="a" style="left:100px;top:2105px;width:13px;height:183px;background:#c0c0c0;"></div>
<svg class="a" style="left:103px;top:2112px;transform:rotate(180deg);" width="8" height="6"><use href="#arrowdn"/></svg>
<div class="a" style="left:103px;top:2220px;width:7px;height:40px;background:#a3a3a3;border-radius:3px;"></div>
<div class="a" style="left:113px;top:2105px;width:641px;height:21px;background:#d3d3d3;"></div>
<div class="a" style="left:113px;top:2126px;width:641px;height:162px;background:#c6c6c6;"></div>
<div class="a" style="left:112px;top:2105px;width:1px;height:183px;background:#a8a8a8;"></div>
<div class="a t" style="top:2108.0px;font-size:12.5px;line-height:16px;left:118px;">Assets</div>
<div class="a t" style="top:2108.0px;font-size:12.5px;line-height:16px;left:173px;">AOT Assets</div>
<div class="a t" style="top:2108.0px;font-size:12.5px;line-height:16px;left:256px;">Player</div>
<div class="a t" style="top:2108.0px;font-size:12.5px;line-height:16px;left:310px;">_Units</div>
<div class="a t" style="top:2108.0px;font-size:12.5px;line-height:16px;left:362px;">Troop</div>
<div class="a t" style="top:2108.0px;font-size:12.5px;line-height:16px;left:413px;">Soldiers</div>
<div class="a t" style="top:2108.0px;font-size:12.5px;line-height:16px;left:476px;">_Army Man</div>
<div class="a t" style="top:2108.0px;font-size:12.5px;line-height:16px;left:556px;font-weight:bold;">_Data</div>
<svg class="a" style="left:161px;top:2111px;" width="7" height="10"><use href="#chev"/></svg>
<svg class="a" style="left:245px;top:2111px;" width="7" height="10"><use href="#chev"/></svg>
<svg class="a" style="left:299px;top:2111px;" width="7" height="10"><use href="#chev"/></svg>
<svg class="a" style="left:351px;top:2111px;" width="7" height="10"><use href="#chev"/></svg>
<svg class="a" style="left:402.5px;top:2111px;" width="7" height="10"><use href="#chev"/></svg>
<svg class="a" style="left:464px;top:2111px;" width="7" height="10"><use href="#chev"/></svg>
<svg class="a" style="left:543.5px;top:2111px;" width="7" height="10"><use href="#chev"/></svg>
<svg class="a" style="left:57px;top:2116px;" width="10" height="10"><use href="#tright"/></svg>
<svg class="a" style="left:73px;top:2115px;" width="14" height="12"><use href="#folder"/></svg>
<div class="a t" style="top:2113.5px;font-size:12.5px;line-height:16px;left:88px;color:#1a1a1a;clip-path:inset(0 0 0 0);">_N</div>
<svg class="a" style="left:57px;top:2132px;" width="10" height="10"><use href="#tright"/></svg>
<svg class="a" style="left:73px;top:2131px;" width="14" height="12"><use href="#folder"/></svg>
<div class="a t" style="top:2129.5px;font-size:12.5px;line-height:16px;left:88px;color:#1a1a1a;clip-path:inset(0 0 0 0);">Sp</div>
<svg class="a" style="left:57px;top:2148px;" width="10" height="10"><use href="#tdown"/></svg>
<svg class="a" style="left:73px;top:2147px;" width="14" height="12"><use href="#folderopen"/></svg>
<div class="a t" style="top:2145.5px;font-size:12.5px;line-height:16px;left:88px;color:#1a1a1a;clip-path:inset(0 0 0 0);">Tr</div>
<svg class="a" style="left:71px;top:2164px;" width="10" height="10"><use href="#tright"/></svg>
<svg class="a" style="left:87px;top:2163px;" width="14" height="12"><use href="#folder"/></svg>
<svg class="a" style="left:71px;top:2180px;" width="10" height="10"><use href="#tdown"/></svg>
<svg class="a" style="left:87px;top:2179px;" width="14" height="12"><use href="#folderopen"/></svg>
<svg class="a" style="left:85px;top:2196px;" width="10" height="10"><use href="#tdown"/></svg>
<div class="a" style="left:90px;top:2105px;width:10px;height:6px;background:#c6c6c6;"></div>
<svg class="a" style="left:137px;top:2148px;width:49px;height:41px;" width="49" height="41"><use href="#bigfolder"/></svg>
<div class="a t" style="top:2201.5px;font-size:10.5px;line-height:16px;left:-138px;width:600px;text-align:center;color:#222;">_Mold</div>
<svg class="a" style="left:215px;top:2148px;width:49px;height:41px;" width="49" height="41"><use href="#bigfolder"/></svg>
<div class="a t" style="top:2201.5px;font-size:10.5px;line-height:16px;left:-60px;width:600px;text-align:center;color:#222;">_Sounds</div>
<div class="a" style="left:286px;top:2139px;width:61px;height:60px;background:#5c5c5c;"></div>
<div class="a t" style="top:2201.5px;font-size:10.5px;line-height:16px;left:16px;width:600px;text-align:center;color:#222;">[MESH] M1...</div>
<div class="a" style="left:365px;top:2139px;width:61px;height:60px;background:#5c5c5c;"></div>
<div class="a t" style="top:2201.5px;font-size:10.5px;line-height:16px;left:95px;width:600px;text-align:center;color:#222;">[SKINNED...</div>
<div class="a" style="left:442px;top:2139px;width:61px;height:60px;background:#5c5c5c;"></div>
<div class="a t" style="top:2201.5px;font-size:10.5px;line-height:16px;left:172px;width:600px;text-align:center;color:#222;">[SKINNED ...</div>
<div class="a" style="left:519px;top:2139px;width:61px;height:60px;background:#5c5c5c;"></div>
<div class="a t" style="top:2201.5px;font-size:10.5px;line-height:16px;left:249px;width:600px;text-align:center;color:#222;">[TROOP] B...</div>
<div class="a" style="left:597px;top:2139px;width:61px;height:60px;background:#5c5c5c;"></div>
<div class="a t" style="top:2201.5px;font-size:10.5px;line-height:16px;left:327px;width:600px;text-align:center;color:#222;">ArmyMan ...</div>
<div class="a" style="left:675px;top:2139px;width:61px;height:60px;background:#5c5c5c;"></div>
<div class="a t" style="top:2201.5px;font-size:10.5px;line-height:16px;left:405px;width:600px;text-align:center;color:#222;">ArmyMan ...</div>
<div class="a" style="left:131px;top:2232px;width:61px;height:56px;background:#5c5c5c;"></div>
<div class="a" style="left:209px;top:2232px;width:61px;height:56px;background:#5c5c5c;"></div>
<div class="a" style="left:970px;top:1722px;width:32px;height:22px;background:#e0e0e0;border:1px solid #aaa;box-sizing:border-box;border-radius:2px;"></div>
<svg class="a" style="left:977px;top:1726px;" width="18" height="14" viewBox="0 0 18 14"><path d="M2 12 L6 3 H12 L16 12" fill="none" stroke="#222" stroke-width="1.3"/><rect x="0.5" y="10.5" width="3" height="3" fill="#fff" stroke="#222"/><rect x="14.5" y="10.5" width="3" height="3" fill="#fff" stroke="#222"/><rect x="4.5" y="1.5" width="3" height="3" fill="#fff" stroke="#222"/><rect x="10.5" y="1.5" width="3" height="3" fill="#fff" stroke="#222"/></svg>
<div class="a t" style="top:1729.0px;font-size:12.5px;line-height:16px;left:1009px;">Edit Bounds</div>
<div class="a" style="left:756px;top:1747px;width:3px;height:60px;background:#3d8fe0;"></div>
<div class="a" style="left:756px;top:1847px;width:3px;height:40px;background:#3d8fe0;"></div>
<div class="a t" style="top:1749.0px;font-size:12.5px;line-height:16px;left:775px;font-weight:bold;">Bounds</div>
<div class="a t" style="top:1769.0px;font-size:12.5px;line-height:16px;right:289px;font-weight:bold;">Center</div>
<div class="a t" style="top:1789.0px;font-size:12.5px;line-height:16px;right:289px;font-weight:bold;">Extent</div>
<div class="a t" style="top:1769.0px;font-size:12.5px;line-height:16px;left:972px;font-weight:bold;">X</div>
<div class="a" style="left:988px;top:1768px;width:80px;height:17px;background:#ececec;border:1px solid #b9b9b9;box-sizing:border-box;border-radius:2px;"></div>
<div class="a t" style="top:1768.5px;font-size:12.5px;line-height:16px;left:991px;font-weight:bold;">0.04407114</div>
<div class="a t" style="top:1769.0px;font-size:12.5px;line-height:16px;left:1075px;font-weight:bold;">Y</div>
<div class="a" style="left:1091px;top:1768px;width:79px;height:17px;background:#ececec;border:1px solid #b9b9b9;box-sizing:border-box;border-radius:2px;"></div>
<div class="a t" style="top:1768.5px;font-size:12.5px;line-height:16px;left:1094px;font-weight:bold;">-0.0030015</div>
<div class="a t" style="top:1769.0px;font-size:12.5px;line-height:16px;left:1178px;font-weight:bold;">Z</div>
<div class="a" style="left:1193px;top:1768px;width:70px;height:17px;background:#ececec;border:1px solid #b9b9b9;box-sizing:border-box;border-radius:2px;"></div>
<div class="a t" style="top:1768.5px;font-size:12.5px;line-height:16px;left:1196px;font-weight:bold;">3.03238</div>
<div class="a t" style="top:1789.0px;font-size:12.5px;line-height:16px;left:972px;font-weight:bold;">X</div>
<div class="a" style="left:988px;top:1788px;width:80px;height:17px;background:#ececec;border:1px solid #b9b9b9;box-sizing:border-box;border-radius:2px;"></div>
<div class="a t" style="top:1788.5px;font-size:12.5px;line-height:16px;left:991px;font-weight:bold;">0.4259548</div>
<div class="a t" style="top:1789.0px;font-size:12.5px;line-height:16px;left:1075px;font-weight:bold;">Y</div>
<div class="a" style="left:1091px;top:1788px;width:79px;height:17px;background:#ececec;border:1px solid #b9b9b9;box-sizing:border-box;border-radius:2px;"></div>
<div class="a t" style="top:1788.5px;font-size:12.5px;line-height:16px;left:1094px;font-weight:bold;">0.09440923</div>
<div class="a t" style="top:1789.0px;font-size:12.5px;line-height:16px;left:1178px;font-weight:bold;">Z</div>
<div class="a" style="left:1193px;top:1788px;width:70px;height:17px;background:#ececec;border:1px solid #b9b9b9;box-sizing:border-box;border-radius:2px;"></div>
<div class="a t" style="top:1788.5px;font-size:12.5px;line-height:16px;left:1196px;font-weight:bold;">0.38117</div>
<div class="a t" style="top:1809.0px;font-size:12.5px;line-height:16px;left:775px;">Quality</div>
<div class="a" style="left:972px;top:1808px;width:290px;height:17px;background:#ececec;border:1px solid #b9b9b9;box-sizing:border-box;border-radius:2px;"></div>
<div class="a t" style="top:1808.5px;font-size:12.5px;line-height:16px;left:975px;">Auto</div>
<div class="a t" style="top:1829.0px;font-size:12.5px;line-height:16px;left:775px;">Update When Offscreen</div>
<svg class="a" style="left:972px;top:1830px;" width="13" height="13"><use href="#unchk"/></svg>
<div class="a t" style="top:1849.0px;font-size:12.5px;line-height:16px;left:775px;font-weight:bold;">Mesh</div>
<div class="a" style="left:972px;top:1848px;width:290px;height:17px;background:#ececec;border:1px solid #b9b9b9;box-sizing:border-box;border-radius:2px;"></div>
<div class="a t" style="top:1848.5px;font-size:12.5px;line-height:16px;left:987px;font-weight:bold;">ArmyMan</div>
<svg class="a" style="left:975px;top:1852px;" width="10" height="10" viewBox="0 0 10 10"><path d="M0.5 0.5h9v9h-9zM3.5 0.5v9M6.5 0.5v9M0.5 3.5h9M0.5 6.5h9" fill="#c9dcf2" stroke="#4a7fc0" stroke-width="0.8"/></svg>
<div class="a t" style="top:1869.0px;font-size:12.5px;line-height:16px;left:775px;font-weight:bold;">Root Bone</div>
<div class="a" style="left:972px;top:1868px;width:290px;height:17px;background:#ececec;border:1px solid #b9b9b9;box-sizing:border-box;border-radius:2px;"></div>
<div class="a t" style="top:1868.5px;font-size:12.5px;line-height:16px;left:987px;font-weight:bold;">Bip001_Pelvis (Transform)</div>
<svg class="a" style="left:975px;top:1871px;" width="11" height="11"><use href="#transform"/></svg>
<svg class="a" style="left:759px;top:1892px;" width="10" height="10"><use href="#tdown"/></svg>
<div class="a t" style="top:1889.0px;font-size:12.5px;line-height:16px;left:776px;font-weight:bold;">Materials</div>
<div class="a t" style="top:1909.0px;font-size:12.5px;line-height:16px;left:790px;">Size</div>
<div class="a" style="left:972px;top:1908px;width:290px;height:17px;background:#ececec;border:1px solid #b9b9b9;box-sizing:border-box;border-radius:2px;"></div>
<div class="a t" style="top:1908.5px;font-size:12.5px;line-height:16px;left:975px;">1</div>
<div class="a t" style="top:1929.0px;font-size:12.5px;line-height:16px;left:790px;">Element 0</div>
<div class="a" style="left:972px;top:1928px;width:290px;height:17px;background:#ececec;border:1px solid #b9b9b9;box-sizing:border-box;border-radius:2px;"></div>
<div class="a t" style="top:1928.5px;font-size:12.5px;line-height:16px;left:987px;">#2 Green Light</div>
<div class="a" style="left:975px;top:1932px;width:9px;height:9px;background:#2f7fe0;border-radius:5px;"></div>
<svg class="a" style="left:759px;top:1952px;" width="10" height="10"><use href="#tdown"/></svg>
<div class="a t" style="top:1949.0px;font-size:12.5px;line-height:16px;left:776px;font-weight:bold;">Lighting</div>
<div class="a t" style="top:1968.0px;font-size:12.5px;line-height:16px;left:790px;">Cast Shadows</div>
<div class="a" style="left:972px;top:1967px;width:290px;height:17px;background:#ececec;border:1px solid #b9b9b9;box-sizing:border-box;border-radius:2px;"></div>
<div class="a t" style="top:1967.5px;font-size:12.5px;line-height:16px;left:975px;">On</div>
<div class="a t" style="top:1988.0px;font-size:12.5px;line-height:16px;left:790px;color:#7d7d7d;">Receive Shadows</div>
<svg class="a" style="left:972px;top:1989px;opacity:0.5;" width="13" height="13"><use href="#chk"/></svg>
<svg class="a" style="left:759px;top:2011px;" width="10" height="10"><use href="#tdown"/></svg>
<div class="a t" style="top:2008.0px;font-size:12.5px;line-height:16px;left:776px;font-weight:bold;">Probes</div>
<div class="a" style="left:756px;top:2027px;width:3px;height:18px;background:#3d8fe0;"></div>
<div class="a t" style="top:2028.0px;font-size:12.5px;line-height:16px;left:790px;font-weight:bold;">Light Probes</div>
<div class="a" style="left:972px;top:2027px;width:290px;height:17px;background:#ececec;border:1px solid #b9b9b9;box-sizing:border-box;border-radius:2px;"></div>
<div class="a t" style="top:2027.5px;font-size:12.5px;line-height:16px;left:975px;font-weight:bold;">Blend Probes</div>
<div class="a" style="left:972px;top:2047px;width:290px;height:17px;background:#ececec;border:1px solid #b9b9b9;box-sizing:border-box;border-radius:2px;"></div>
<div class="a" style="left:972px;top:2068px;width:290px;height:17px;background:#ececec;border:1px solid #b9b9b9;box-sizing:border-box;border-radius:2px;"></div>
<div class="a" style="left:790px;top:2088px;width:470px;height:36px;background:#cdcdcd;border:1px solid #b3b3b3;box-sizing:border-box;border-radius:3px;"></div>
<svg class="a" style="left:793px;top:2090px;" width="32" height="32" viewBox="0 0 32 32"><path d="M15 2 C7 2 2 7 2 14 C2 20 6 25 12 26 L17 31 L17 26 C24 25 28 20 28 14 C28 7 23 2 15 2 Z" fill="#fff" stroke="#777" stroke-width="1"/><path d="M15 7 V18" stroke="#333" stroke-width="3.2" stroke-linecap="round"/><circle cx="15" cy="22.5" r="1.9" fill="#333"/></svg>
<div class="a t" style="top:2098.5px;font-size:11px;line-height:16px;left:826px;color:#222;">In Deferred Shading, all objects receive shadows and get per-pixel reflection probes.</div>
<svg class="a" style="left:759px;top:2132px;" width="10" height="10"><use href="#tdown"/></svg>
<div class="a t" style="top:2129.0px;font-size:12.5px;line-height:16px;left:776px;font-weight:bold;">Additional Settings</div>
<div class="a" style="left:756px;top:2148px;width:3px;height:18px;background:#3d8fe0;"></div>
<div class="a t" style="top:2149.0px;font-size:12.5px;line-height:16px;left:790px;font-weight:bold;">Skinned Motion Vectors</div>
<svg class="a" style="left:972px;top:2150px;" width="13" height="13"><use href="#chk"/></svg>
<div class="a t" style="top:2169.0px;font-size:12.5px;line-height:16px;left:790px;">Dynamic Occlusion</div>
<svg class="a" style="left:972px;top:2170px;" width="13" height="13"><use href="#chk"/></svg>
<div class="a" style="left:756px;top:2191px;width:492px;height:1px;background:#a5a5a5;"></div>
<div class="a" style="left:756px;top:2192px;width:492px;height:54px;background:#cbcbcb;"></div>
<svg class="a" style="left:772px;top:2198px;" width="32" height="32" viewBox="0 0 32 32"><defs><radialGradient id="gs" cx="0.35" cy="0.3" r="0.75"><stop offset="0" stop-color="#9ad06a"/><stop offset="0.5" stop-color="#3d8a1c"/><stop offset="1" stop-color="#0d2a06"/></radialGradient></defs><circle cx="16" cy="16" r="15" fill="url(#gs)"/></svg>
<div class="a t" style="top:2198.5px;font-size:13.5px;line-height:16px;left:812px;">Default-Material</div>
<div class="a t" style="top:2221.5px;font-size:12.5px;line-height:16px;left:809px;color:#7a7a7a;">Shader</div>
<div class="a" style="left:861px;top:2221px;width:400px;height:17px;background:#d6d6d6;border:1px solid #b9b9b9;box-sizing:border-box;border-radius:2px;"></div>
<div class="a t" style="top:2221.5px;font-size:12.5px;line-height:16px;left:864px;color:#7a7a7a;">Standard</div>
<svg class="a" style="left:759px;top:2230px;" width="9" height="10"><use href="#tright"/></svg>
<div class="a" style="left:756px;top:2246px;width:492px;height:1px;background:#a5a5a5;"></div>
<div class="a" style="left:756px;top:2255px;width:492px;height:1px;background:#b0b0b0;"></div>
<div class="a" style="left:903px;top:2264px;width:229px;height:22px;background:#e4e4e4;border:1px solid #a0a0a0;box-sizing:border-box;border-radius:3px;"></div>
<div class="a t" style="top:2267.0px;font-size:12.5px;line-height:16px;left:717px;width:600px;text-align:center;">Add Component</div>
<svg class="a" style="left:1229px;top:2199px;" width="12" height="12"><use href="#help"/></svg>
<div class="a" style="left:787px;top:2044px;width:298px;height:49px;background:#f0f0f0;box-shadow:2px 2px 3px rgba(0,0,0,0.25);"></div>
<div class="a" style="left:817px;top:2044px;width:1px;height:49px;background:#e2e2e2;"></div>
<div class="a t" style="top:2049.0px;font-size:12.5px;line-height:16px;left:822px;">Apply to Prefab &#x27;[SKINNED MESH] Base&#x27;</div>
<div class="a" style="left:790px;top:2068px;width:292px;height:22px;background:#dde8f5;border:1px solid #b8cfe8;box-sizing:border-box;"></div>
<div class="a t" style="top:2071.0px;font-size:12.5px;line-height:16px;left:822px;">Revert</div>
<div class="a" style="left:787px;top:2167px;width:298px;height:49px;background:#f0f0f0;box-shadow:2px 2px 3px rgba(0,0,0,0.25);"></div>
<div class="a" style="left:817px;top:2167px;width:1px;height:49px;background:#e2e2e2;"></div>
<div class="a t" style="top:2172.0px;font-size:12.5px;line-height:16px;left:822px;">Apply to Prefab &#x27;[SKINNED MESH] Base&#x27;</div>
<div class="a" style="left:790px;top:2191px;width:292px;height:22px;background:#dde8f5;border:1px solid #b8cfe8;box-sizing:border-box;"></div>
<div class="a t" style="top:2194.0px;font-size:12.5px;line-height:16px;left:822px;">Revert</div>
<svg class="a" style="left:305px;top:64px;overflow:hidden" width="631" height="449"><defs><linearGradient id="mgp1" gradientUnits="userSpaceOnUse" x1="0" y1="115" x2="0" y2="186"><stop offset="0" stop-color="#fff" stop-opacity="0.08"/><stop offset="1" stop-color="#fff" stop-opacity="1"/></linearGradient><mask id="mkp1" maskUnits="userSpaceOnUse" x="0" y="0" width="631" height="449"><rect x="0" y="0" width="631" height="449" fill="url(#mgp1)"/></mask></defs><g mask="url(#mkp1)"><g stroke="rgba(190,210,235,0.45)" stroke-width="0.9" fill="none"><line x1="31648.7" y1="5198.3" x2="1376.8" y2="127.9"/><line x1="9821.3" y1="5198.3" x2="1320.5" y2="127.3"/><line x1="-12006.0" y1="5198.3" x2="1269.3" y2="126.7"/><line x1="-33833.3" y1="5198.3" x2="1222.5" y2="126.2"/><line x1="-55660.7" y1="5198.3" x2="1179.5" y2="125.8"/><line x1="-77488.0" y1="5198.3" x2="1139.9" y2="125.3"/><line x1="-99315.3" y1="5198.3" x2="1103.2" y2="124.9"/><line x1="-121142.7" y1="5198.3" x2="1069.3" y2="124.6"/><line x1="-142970.0" y1="5198.3" x2="1037.7" y2="124.2"/><line x1="-16496.1" y1="659.6" x2="1008.3" y2="123.9"/><line x1="-5255.5" y1="292.3" x2="980.8" y2="123.6"/><line x1="-3069.8" y1="220.9" x2="955.0" y2="123.4"/><line x1="-2139.3" y1="190.5" x2="930.9" y2="123.1"/><line x1="-1623.9" y1="173.7" x2="908.1" y2="122.9"/><line x1="-1296.5" y1="163.0" x2="886.7" y2="122.6"/><line x1="-1070.2" y1="155.6" x2="866.5" y2="122.4"/><line x1="-904.3" y1="150.1" x2="847.5" y2="122.2"/><line x1="-777.5" y1="146.0" x2="829.4" y2="122.0"/><line x1="-677.5" y1="142.7" x2="812.3" y2="121.8"/><line x1="-596.6" y1="140.1" x2="796.0" y2="121.7"/><line x1="-529.7" y1="137.9" x2="780.6" y2="121.5"/><line x1="-473.6" y1="136.1" x2="765.9" y2="121.3"/><line x1="-425.8" y1="134.5" x2="751.8" y2="121.2"/><line x1="-384.6" y1="133.2" x2="738.5" y2="121.1"/><line x1="-348.7" y1="132.0" x2="725.7" y2="120.9"/><line x1="-317.2" y1="131.0" x2="713.5" y2="120.8"/><line x1="-289.2" y1="130.0" x2="701.8" y2="120.7"/><line x1="-264.3" y1="129.2" x2="690.6" y2="120.5"/><line x1="-242.0" y1="128.5" x2="679.9" y2="120.4"/><line x1="-221.8" y1="127.8" x2="669.6" y2="120.3"/><line x1="-203.5" y1="127.2" x2="659.7" y2="120.2"/><line x1="-186.9" y1="126.7" x2="650.2" y2="120.1"/><line x1="-171.6" y1="126.2" x2="641.1" y2="120.0"/><line x1="-157.6" y1="125.7" x2="632.3" y2="119.9"/><line x1="-144.8" y1="125.3" x2="623.8" y2="119.8"/><line x1="-132.8" y1="124.9" x2="615.7" y2="119.7"/><line x1="-121.8" y1="124.6" x2="607.8" y2="119.7"/><line x1="-111.5" y1="124.2" x2="600.2" y2="119.6"/><line x1="-101.9" y1="123.9" x2="592.8" y2="119.5"/><line x1="-93.0" y1="123.6" x2="585.7" y2="119.4"/><line x1="-84.6" y1="123.4" x2="578.9" y2="119.3"/><line x1="-76.7" y1="123.1" x2="572.2" y2="119.3"/><line x1="-69.3" y1="122.9" x2="565.8" y2="119.2"/><line x1="-62.3" y1="122.6" x2="559.6" y2="119.1"/><line x1="-55.8" y1="122.4" x2="553.6" y2="119.1"/><line x1="-49.5" y1="122.2" x2="547.7" y2="119.0"/><line x1="-43.7" y1="122.0" x2="542.1" y2="119.0"/><line x1="-38.1" y1="121.8" x2="536.6" y2="118.9"/><line x1="-32.8" y1="121.7" x2="531.2" y2="118.8"/><line x1="-27.8" y1="121.5" x2="526.0" y2="118.8"/><line x1="-23.0" y1="121.3" x2="521.0" y2="118.7"/><line x1="-18.4" y1="121.2" x2="516.1" y2="118.7"/><line x1="-14.0" y1="121.0" x2="511.3" y2="118.6"/><line x1="-9.9" y1="120.9" x2="506.7" y2="118.6"/><line x1="-5.9" y1="120.8" x2="502.2" y2="118.5"/><line x1="-2.1" y1="120.7" x2="497.8" y2="118.5"/><line x1="1.5" y1="120.5" x2="493.5" y2="118.4"/><line x1="5.0" y1="120.4" x2="489.4" y2="118.4"/><line x1="8.4" y1="120.3" x2="485.3" y2="118.4"/><line x1="11.6" y1="120.2" x2="481.3" y2="118.3"/><line x1="14.7" y1="120.1" x2="477.5" y2="118.3"/><line x1="17.7" y1="120.0" x2="473.7" y2="118.2"/><line x1="20.6" y1="119.9" x2="470.0" y2="118.2"/><line x1="23.3" y1="119.8" x2="466.5" y2="118.2"/><line x1="-155389.0" y1="5198.3" x2="23.3" y2="119.8"/><line x1="-147486.0" y1="5198.3" x2="31.7" y2="119.8"/><line x1="-139583.0" y1="5198.3" x2="40.1" y2="119.8"/><line x1="-131680.0" y1="5198.3" x2="48.3" y2="119.7"/><line x1="-123777.0" y1="5198.3" x2="56.4" y2="119.7"/><line x1="-115874.0" y1="5198.3" x2="64.4" y2="119.7"/><line x1="-107971.0" y1="5198.3" x2="72.3" y2="119.6"/><line x1="-100068.0" y1="5198.3" x2="80.1" y2="119.6"/><line x1="-92165.0" y1="5198.3" x2="87.8" y2="119.6"/><line x1="-84262.0" y1="5198.3" x2="95.4" y2="119.6"/><line x1="-76359.0" y1="5198.3" x2="102.9" y2="119.5"/><line x1="-68456.0" y1="5198.3" x2="110.3" y2="119.5"/><line x1="-60553.0" y1="5198.3" x2="117.6" y2="119.5"/><line x1="-52650.0" y1="5198.3" x2="124.8" y2="119.4"/><line x1="-44747.0" y1="5198.3" x2="132.0" y2="119.4"/><line x1="-36844.0" y1="5198.3" x2="139.0" y2="119.4"/><line x1="-28941.0" y1="5198.3" x2="146.0" y2="119.4"/><line x1="-21038.0" y1="5198.3" x2="152.9" y2="119.3"/><line x1="-13135.0" y1="5198.3" x2="159.7" y2="119.3"/><line x1="-5232.0" y1="5198.3" x2="166.4" y2="119.3"/><line x1="2671.0" y1="5198.3" x2="173.1" y2="119.3"/><line x1="10574.0" y1="5198.3" x2="179.7" y2="119.2"/><line x1="18477.0" y1="5198.3" x2="186.2" y2="119.2"/><line x1="26380.0" y1="5198.3" x2="192.6" y2="119.2"/><line x1="10404.6" y1="1640.0" x2="198.9" y2="119.2"/><line x1="4237.0" y1="606.9" x2="205.2" y2="119.1"/><line x1="3050.9" y1="408.3" x2="211.4" y2="119.1"/><line x1="2547.2" y1="323.9" x2="217.5" y2="119.1"/><line x1="2268.6" y1="277.2" x2="223.6" y2="119.1"/><line x1="2091.7" y1="247.6" x2="229.6" y2="119.0"/><line x1="1969.5" y1="227.1" x2="235.5" y2="119.0"/><line x1="1879.9" y1="212.1" x2="241.4" y2="119.0"/><line x1="1811.5" y1="200.7" x2="247.2" y2="119.0"/><line x1="1757.5" y1="191.6" x2="252.9" y2="119.0"/><line x1="1713.8" y1="184.3" x2="258.6" y2="118.9"/><line x1="1677.8" y1="178.3" x2="264.2" y2="118.9"/><line x1="1647.5" y1="173.2" x2="269.8" y2="118.9"/><line x1="1621.7" y1="168.9" x2="275.3" y2="118.9"/><line x1="1599.5" y1="165.2" x2="280.7" y2="118.9"/><line x1="1580.1" y1="161.9" x2="286.1" y2="118.8"/><line x1="1563.1" y1="159.1" x2="291.4" y2="118.8"/><line x1="1548.1" y1="156.6" x2="296.7" y2="118.8"/><line x1="1534.7" y1="154.3" x2="301.9" y2="118.8"/><line x1="1522.6" y1="152.3" x2="307.1" y2="118.8"/><line x1="1511.7" y1="150.5" x2="312.2" y2="118.7"/><line x1="1501.9" y1="148.8" x2="317.2" y2="118.7"/><line x1="1492.9" y1="147.3" x2="322.2" y2="118.7"/><line x1="1484.7" y1="145.9" x2="327.2" y2="118.7"/><line x1="1477.1" y1="144.7" x2="332.1" y2="118.7"/><line x1="1470.2" y1="143.5" x2="336.9" y2="118.6"/><line x1="1463.8" y1="142.4" x2="341.7" y2="118.6"/><line x1="1457.8" y1="141.4" x2="346.5" y2="118.6"/><line x1="1452.3" y1="140.5" x2="351.2" y2="118.6"/><line x1="1447.1" y1="139.6" x2="355.9" y2="118.6"/><line x1="1442.3" y1="138.8" x2="360.5" y2="118.6"/><line x1="1437.7" y1="138.1" x2="365.0" y2="118.5"/><line x1="1433.5" y1="137.4" x2="369.6" y2="118.5"/><line x1="1429.5" y1="136.7" x2="374.1" y2="118.5"/><line x1="1425.8" y1="136.1" x2="378.5" y2="118.5"/><line x1="1422.2" y1="135.5" x2="382.9" y2="118.5"/><line x1="1418.9" y1="134.9" x2="387.3" y2="118.5"/><line x1="1415.7" y1="134.4" x2="391.6" y2="118.4"/><line x1="1412.7" y1="133.9" x2="395.8" y2="118.4"/><line x1="1409.8" y1="133.4" x2="400.1" y2="118.4"/><line x1="1407.1" y1="132.9" x2="404.3" y2="118.4"/><line x1="1404.5" y1="132.5" x2="408.4" y2="118.4"/><line x1="1402.1" y1="132.1" x2="412.6" y2="118.4"/><line x1="1399.7" y1="131.7" x2="416.6" y2="118.3"/><line x1="1397.5" y1="131.3" x2="420.7" y2="118.3"/><line x1="1395.3" y1="131.0" x2="424.7" y2="118.3"/><line x1="1393.3" y1="130.6" x2="428.7" y2="118.3"/><line x1="1391.3" y1="130.3" x2="432.6" y2="118.3"/><line x1="1389.4" y1="130.0" x2="436.5" y2="118.3"/><line x1="1387.6" y1="129.7" x2="440.4" y2="118.2"/><line x1="1385.9" y1="129.4" x2="444.2" y2="118.2"/><line x1="1384.2" y1="129.1" x2="448.0" y2="118.2"/><line x1="1382.6" y1="128.8" x2="451.7" y2="118.2"/><line x1="1381.1" y1="128.6" x2="455.5" y2="118.2"/><line x1="1379.6" y1="128.3" x2="459.2" y2="118.2"/><line x1="1378.2" y1="128.1" x2="462.8" y2="118.2"/><line x1="1376.8" y1="127.9" x2="466.5" y2="118.2"/></g></g><polygon points="336.0,9.0 350.0,10.0 358.0,14.0 360.0,31.0 359.0,46.0 356.0,61.0 352.0,68.0 345.0,73.0 355.0,74.0 378.0,81.0 395.0,86.0 435.0,94.0 473.0,99.0 483.0,101.0 492.0,104.0 496.0,110.0 492.0,116.0 485.0,120.0 477.0,116.0 471.0,114.0 435.0,116.0 395.0,119.0 378.0,124.0 376.0,146.0 375.0,186.0 377.0,236.0 378.0,271.0 375.0,281.0 371.0,316.0 365.0,350.0 359.0,386.0 357.0,406.0 363.0,416.0 377.0,431.0 380.0,439.0 367.0,444.0 350.0,443.0 342.0,428.0 337.0,396.0 336.0,366.0 334.0,316.0 333.0,285.0 329.0,298.0 322.0,366.0 316.0,416.0 317.0,431.0 311.0,443.0 295.0,444.0 287.0,441.0 287.0,416.0 286.0,386.0 284.0,350.0 282.0,306.0 282.0,272.0 281.0,256.0 280.0,232.0 273.0,234.0 268.0,226.0 268.0,201.0 273.0,193.0 281.0,191.0 283.0,166.0 285.0,136.0 286.0,130.0 255.0,124.0 215.0,119.0 165.0,117.0 133.0,118.0 125.0,120.0 113.0,127.0 107.0,125.0 102.0,122.0 95.0,123.0 90.0,117.0 89.0,108.0 95.0,104.0 105.0,102.0 125.0,100.0 133.0,98.0 175.0,92.0 225.0,85.0 265.0,79.0 287.0,77.0 305.0,73.0 315.0,70.0 309.0,61.0 306.0,42.0 307.0,26.0 313.0,16.0 323.0,11.0" fill="#809dc5" stroke="#809dc5" stroke-width="6" stroke-linejoin="round"/><polygon points="336.0,9.0 350.0,10.0 358.0,14.0 360.0,31.0 359.0,46.0 356.0,61.0 352.0,68.0 345.0,73.0 355.0,74.0 378.0,81.0 395.0,86.0 435.0,94.0 473.0,99.0 483.0,101.0 492.0,104.0 496.0,110.0 492.0,116.0 485.0,120.0 477.0,116.0 471.0,114.0 435.0,116.0 395.0,119.0 378.0,124.0 376.0,146.0 375.0,186.0 377.0,236.0 378.0,271.0 375.0,281.0 371.0,316.0 365.0,350.0 359.0,386.0 357.0,406.0 363.0,416.0 377.0,431.0 380.0,439.0 367.0,444.0 350.0,443.0 342.0,428.0 337.0,396.0 336.0,366.0 334.0,316.0 333.0,285.0 329.0,298.0 322.0,366.0 316.0,416.0 317.0,431.0 311.0,443.0 295.0,444.0 287.0,441.0 287.0,416.0 286.0,386.0 284.0,350.0 282.0,306.0 282.0,272.0 281.0,256.0 280.0,232.0 273.0,234.0 268.0,226.0 268.0,201.0 273.0,193.0 281.0,191.0 283.0,166.0 285.0,136.0 286.0,130.0 255.0,124.0 215.0,119.0 165.0,117.0 133.0,118.0 125.0,120.0 113.0,127.0 107.0,125.0 102.0,122.0 95.0,123.0 90.0,117.0 89.0,108.0 95.0,104.0 105.0,102.0 125.0,100.0 133.0,98.0 175.0,92.0 225.0,85.0 265.0,79.0 287.0,77.0 305.0,73.0 315.0,70.0 309.0,61.0 306.0,42.0 307.0,26.0 313.0,16.0 323.0,11.0" fill="#d6d6d6" stroke="#dcdcdc" stroke-width="1" stroke-linejoin="round"/><polyline points="135.0,116.0 215.0,118.0 283.0,124.0" stroke="#bdb5ad" stroke-width="4" fill="none"/><polyline points="381.0,120.0 435.0,115.0 477.0,113.0" stroke="#bdb5ad" stroke-width="4" fill="none"/><polyline points="135.0,104.0 215.0,96.0 283.0,90.0" stroke="#e2e2e2" stroke-width="6" fill="none"/><polyline points="383.0,94.0 435.0,101.0 477.0,105.0" stroke="#e0e0e0" stroke-width="6" fill="none"/><rect x="335" y="86" width="15" height="185" fill="#cbcbcb"/><rect x="337" y="86" width="5" height="185" fill="#dadada"/><polyline points="311.0,77.0 323.0,91.0 335.0,86.0 350.0,86.0 363.0,94.0 367.0,82.0" stroke="#a9a9a9" stroke-width="1.5" fill="none"/><rect x="297" y="121" width="36" height="12" fill="#cfcfcf"/><line x1="297" y1="133" x2="333" y2="133" stroke="#9d9d9d" stroke-width="1.2"/><rect x="298" y="134" width="34" height="34" fill="#d0d0d0"/><line x1="299" y1="168" x2="333" y2="168" stroke="#b0b0b0" stroke-width="1.5"/><rect x="355" y="129" width="22" height="10" fill="#cdcdcd"/><line x1="355" y1="139" x2="377" y2="139" stroke="#a5a5a5" stroke-width="1"/><polyline points="285.0,209.0 335.0,214.0 378.0,207.0" stroke="#c2c2c2" stroke-width="9" fill="none"/><polyline points="285.0,214.0 335.0,220.0 378.0,213.0" stroke="#a8a8a8" stroke-width="1" fill="none"/><rect x="302" y="208" width="13" height="16" fill="#bdbdbd"/><polyline points="283.0,272.0 331.0,274.0 377.0,270.0" stroke="#bdbdbd" stroke-width="2" fill="none"/><g transform="translate(-305,-64)"><path d="M881 86 L894 86 L887 107 Z" fill="#52e01d"/><path d="M857 110 L857 124 L878 117 Z" fill="#d21a12"/><path d="M913 110 L913 122 L896 114 Z" fill="#cfcfcf"/><path d="M882 138 L892 138 L887 123 Z" fill="#d3d3d3"/><circle cx="879" cy="108" r="4" fill="#9a9a9a"/><rect x="881" y="111" width="13" height="13" fill="#f4f4f4"/><circle cx="902" cy="125" r="8" fill="#1d3cff"/><text x="885" y="81" fill="#fff" font-size="12" font-weight="bold" font-family="Liberation Sans">y</text><text x="845" y="122" fill="#fff" font-size="12" font-weight="bold" font-family="Liberation Sans">x</text><text x="908" y="137" fill="#fff" font-size="12" font-weight="bold" font-family="Liberation Sans">z</text></g></svg>
<div class="a t" style="top:157.0px;font-size:12.5px;line-height:16px;left:874px;color:#b4c2d6;">Persp</div>
<svg class="a" style="left:861px;top:159px;" width="10" height="12" viewBox="0 0 10 12"><path d="M9 1 L1 6 L9 11 M9 6 H1" fill="none" stroke="#b4c2d6" stroke-width="1"/></svg>
<svg class="a" style="left:915px;top:76px;filter:invert(1);opacity:0.8;" width="9" height="11"><use href="#lock"/></svg>
<svg class="a" style="left:327px;top:829px;overflow:hidden" width="427" height="474"><defs><linearGradient id="mgp2" gradientUnits="userSpaceOnUse" x1="0" y1="146" x2="0" y2="215"><stop offset="0" stop-color="#fff" stop-opacity="0.08"/><stop offset="1" stop-color="#fff" stop-opacity="1"/></linearGradient><mask id="mkp2" maskUnits="userSpaceOnUse" x="0" y="0" width="427" height="474"><rect x="0" y="0" width="427" height="474" fill="url(#mgp2)"/></mask></defs><g mask="url(#mkp2)"><g stroke="rgba(190,210,235,0.45)" stroke-width="0.9" fill="none"><line x1="34033.0" y1="5099.3" x2="1360.8" y2="159.3"/><line x1="11033.0" y1="5099.3" x2="1297.8" y2="158.6"/><line x1="-11967.0" y1="5099.3" x2="1241.0" y2="158.0"/><line x1="-34967.0" y1="5099.3" x2="1189.4" y2="157.4"/><line x1="-57967.0" y1="5099.3" x2="1142.3" y2="156.9"/><line x1="-80967.0" y1="5099.3" x2="1099.3" y2="156.5"/><line x1="-103967.0" y1="5099.3" x2="1059.7" y2="156.0"/><line x1="-126967.0" y1="5099.3" x2="1023.2" y2="155.6"/><line x1="-149967.0" y1="5099.3" x2="989.4" y2="155.3"/><line x1="-7439.0" y1="393.7" x2="958.1" y2="155.0"/><line x1="-3658.0" y1="269.8" x2="929.0" y2="154.6"/><line x1="-2397.7" y1="228.6" x2="901.8" y2="154.3"/><line x1="-1767.5" y1="207.9" x2="876.4" y2="154.1"/><line x1="-1389.4" y1="195.5" x2="852.6" y2="153.8"/><line x1="-1137.3" y1="187.3" x2="830.3" y2="153.6"/><line x1="-957.3" y1="181.4" x2="809.3" y2="153.4"/><line x1="-822.2" y1="177.0" x2="789.5" y2="153.1"/><line x1="-717.2" y1="173.5" x2="770.8" y2="152.9"/><line x1="-633.2" y1="170.8" x2="753.1" y2="152.8"/><line x1="-564.5" y1="168.5" x2="736.4" y2="152.6"/><line x1="-507.2" y1="166.6" x2="720.5" y2="152.4"/><line x1="-458.7" y1="165.1" x2="705.5" y2="152.2"/><line x1="-417.1" y1="163.7" x2="691.1" y2="152.1"/><line x1="-381.1" y1="162.5" x2="677.5" y2="151.9"/><line x1="-349.6" y1="161.5" x2="664.5" y2="151.8"/><line x1="-321.8" y1="160.6" x2="652.1" y2="151.7"/><line x1="-297.1" y1="159.8" x2="640.3" y2="151.5"/><line x1="-275.0" y1="159.0" x2="628.9" y2="151.4"/><line x1="-255.1" y1="158.4" x2="618.1" y2="151.3"/><line x1="-237.1" y1="157.8" x2="607.7" y2="151.2"/><line x1="-220.7" y1="157.3" x2="597.8" y2="151.1"/><line x1="-205.8" y1="156.8" x2="588.2" y2="151.0"/><line x1="-192.1" y1="156.3" x2="579.0" y2="150.9"/><line x1="-179.5" y1="155.9" x2="570.2" y2="150.8"/><line x1="-167.8" y1="155.5" x2="561.7" y2="150.7"/><line x1="-157.1" y1="155.2" x2="553.5" y2="150.6"/><line x1="-147.1" y1="154.8" x2="545.6" y2="150.5"/><line x1="-137.8" y1="154.5" x2="538.1" y2="150.4"/><line x1="-129.1" y1="154.3" x2="530.7" y2="150.4"/><line x1="-120.9" y1="154.0" x2="523.7" y2="150.3"/><line x1="-113.3" y1="153.7" x2="516.8" y2="150.2"/><line x1="-106.2" y1="153.5" x2="510.2" y2="150.2"/><line x1="-99.4" y1="153.3" x2="503.8" y2="150.1"/><line x1="-93.1" y1="153.1" x2="497.7" y2="150.0"/><line x1="-87.1" y1="152.9" x2="491.7" y2="150.0"/><line x1="-81.4" y1="152.7" x2="485.9" y2="149.9"/><line x1="-76.0" y1="152.5" x2="480.3" y2="149.8"/><line x1="-70.9" y1="152.4" x2="474.8" y2="149.8"/><line x1="-66.1" y1="152.2" x2="469.6" y2="149.7"/><line x1="-61.4" y1="152.0" x2="464.4" y2="149.7"/><line x1="-57.0" y1="151.9" x2="459.5" y2="149.6"/><line x1="-52.9" y1="151.8" x2="454.6" y2="149.6"/><line x1="-48.9" y1="151.6" x2="450.0" y2="149.5"/><line x1="-45.0" y1="151.5" x2="445.4" y2="149.5"/><line x1="-41.4" y1="151.4" x2="441.0" y2="149.4"/><line x1="-37.9" y1="151.3" x2="436.6" y2="149.4"/><line x1="-34.5" y1="151.2" x2="432.4" y2="149.3"/><line x1="-31.3" y1="151.1" x2="428.3" y2="149.3"/><line x1="-28.2" y1="151.0" x2="424.4" y2="149.2"/><line x1="-25.3" y1="150.9" x2="420.5" y2="149.2"/><line x1="-22.4" y1="150.8" x2="416.7" y2="149.1"/><line x1="-19.7" y1="150.7" x2="413.0" y2="149.1"/><line x1="-17.0" y1="150.6" x2="409.4" y2="149.1"/><line x1="-14.5" y1="150.5" x2="405.9" y2="149.0"/><line x1="-151117.0" y1="5099.3" x2="-14.5" y2="150.5"/><line x1="-143450.3" y1="5099.3" x2="-6.7" y2="150.5"/><line x1="-135783.7" y1="5099.3" x2="0.9" y2="150.4"/><line x1="-128117.0" y1="5099.3" x2="8.5" y2="150.4"/><line x1="-120450.3" y1="5099.3" x2="16.0" y2="150.4"/><line x1="-112783.7" y1="5099.3" x2="23.4" y2="150.4"/><line x1="-105117.0" y1="5099.3" x2="30.7" y2="150.3"/><line x1="-97450.3" y1="5099.3" x2="37.9" y2="150.3"/><line x1="-89783.7" y1="5099.3" x2="45.0" y2="150.3"/><line x1="-82117.0" y1="5099.3" x2="52.1" y2="150.3"/><line x1="-74450.3" y1="5099.3" x2="59.1" y2="150.2"/><line x1="-66783.7" y1="5099.3" x2="66.0" y2="150.2"/><line x1="-59117.0" y1="5099.3" x2="72.8" y2="150.2"/><line x1="-51450.3" y1="5099.3" x2="79.5" y2="150.2"/><line x1="-43783.7" y1="5099.3" x2="86.2" y2="150.2"/><line x1="-36117.0" y1="5099.3" x2="92.8" y2="150.1"/><line x1="-28450.3" y1="5099.3" x2="99.3" y2="150.1"/><line x1="-20783.7" y1="5099.3" x2="105.8" y2="150.1"/><line x1="-13117.0" y1="5099.3" x2="112.1" y2="150.1"/><line x1="-5450.3" y1="5099.3" x2="118.5" y2="150.0"/><line x1="2216.3" y1="5099.3" x2="124.7" y2="150.0"/><line x1="9883.0" y1="5099.3" x2="130.9" y2="150.0"/><line x1="17549.7" y1="5099.3" x2="137.0" y2="150.0"/><line x1="25216.3" y1="5099.3" x2="143.0" y2="150.0"/><line x1="32883.0" y1="5099.3" x2="149.0" y2="149.9"/><line x1="6187.0" y1="889.0" x2="154.9" y2="149.9"/><line x1="3730.0" y1="517.5" x2="160.8" y2="149.9"/><line x1="2911.0" y1="393.7" x2="166.6" y2="149.9"/><line x1="2501.5" y1="331.7" x2="172.3" y2="149.8"/><line x1="2255.8" y1="294.6" x2="178.0" y2="149.8"/><line x1="2092.0" y1="269.8" x2="183.6" y2="149.8"/><line x1="1975.0" y1="252.1" x2="189.1" y2="149.8"/><line x1="1887.2" y1="238.9" x2="194.6" y2="149.8"/><line x1="1819.0" y1="228.6" x2="200.1" y2="149.8"/><line x1="1764.4" y1="220.3" x2="205.5" y2="149.7"/><line x1="1719.7" y1="213.5" x2="210.8" y2="149.7"/><line x1="1682.5" y1="207.9" x2="216.1" y2="149.7"/><line x1="1651.0" y1="203.2" x2="221.3" y2="149.7"/><line x1="1624.0" y1="199.1" x2="226.5" y2="149.7"/><line x1="1600.6" y1="195.5" x2="231.6" y2="149.6"/><line x1="1580.1" y1="192.4" x2="236.7" y2="149.6"/><line x1="1562.1" y1="189.7" x2="241.8" y2="149.6"/><line x1="1546.0" y1="187.3" x2="246.7" y2="149.6"/><line x1="1531.6" y1="185.1" x2="251.7" y2="149.6"/><line x1="1518.7" y1="183.1" x2="256.6" y2="149.6"/><line x1="1507.0" y1="181.4" x2="261.4" y2="149.5"/><line x1="1496.4" y1="179.8" x2="266.2" y2="149.5"/><line x1="1486.7" y1="178.3" x2="270.9" y2="149.5"/><line x1="1477.7" y1="177.0" x2="275.6" y2="149.5"/><line x1="1469.6" y1="175.7" x2="280.3" y2="149.5"/><line x1="1462.0" y1="174.6" x2="284.9" y2="149.5"/><line x1="1455.0" y1="173.5" x2="289.5" y2="149.4"/><line x1="1448.5" y1="172.5" x2="294.0" y2="149.4"/><line x1="1442.4" y1="171.6" x2="298.5" y2="149.4"/><line x1="1436.8" y1="170.8" x2="303.0" y2="149.4"/><line x1="1431.5" y1="170.0" x2="307.4" y2="149.4"/><line x1="1426.6" y1="169.2" x2="311.8" y2="149.4"/><line x1="1421.9" y1="168.5" x2="316.1" y2="149.3"/><line x1="1417.5" y1="167.9" x2="320.4" y2="149.3"/><line x1="1413.4" y1="167.2" x2="324.6" y2="149.3"/><line x1="1409.5" y1="166.6" x2="328.8" y2="149.3"/><line x1="1405.8" y1="166.1" x2="333.0" y2="149.3"/><line x1="1402.3" y1="165.6" x2="337.2" y2="149.3"/><line x1="1399.0" y1="165.1" x2="341.3" y2="149.3"/><line x1="1395.9" y1="164.6" x2="345.3" y2="149.2"/><line x1="1392.9" y1="164.1" x2="349.4" y2="149.2"/><line x1="1390.0" y1="163.7" x2="353.4" y2="149.2"/><line x1="1387.3" y1="163.3" x2="357.3" y2="149.2"/><line x1="1384.7" y1="162.9" x2="361.3" y2="149.2"/><line x1="1382.2" y1="162.5" x2="365.2" y2="149.2"/><line x1="1379.8" y1="162.2" x2="369.0" y2="149.2"/><line x1="1377.6" y1="161.8" x2="372.8" y2="149.1"/><line x1="1375.4" y1="161.5" x2="376.6" y2="149.1"/><line x1="1373.3" y1="161.2" x2="380.4" y2="149.1"/><line x1="1371.3" y1="160.9" x2="384.1" y2="149.1"/><line x1="1369.4" y1="160.6" x2="387.9" y2="149.1"/><line x1="1367.5" y1="160.3" x2="391.5" y2="149.1"/><line x1="1365.7" y1="160.0" x2="395.2" y2="149.1"/><line x1="1364.0" y1="159.8" x2="398.8" y2="149.1"/><line x1="1362.3" y1="159.5" x2="402.4" y2="149.0"/><line x1="1360.8" y1="159.3" x2="405.9" y2="149.0"/></g></g><polygon points="268.0,38.0 282.0,39.0 290.0,43.0 292.0,60.0 291.0,75.0 288.0,90.0 284.0,97.0 277.0,102.0 287.0,103.0 310.0,110.0 327.0,115.0 367.0,123.0 405.0,128.0 415.0,130.0 424.0,133.0 428.0,139.0 424.0,145.0 417.0,149.0 409.0,145.0 403.0,143.0 367.0,145.0 327.0,148.0 310.0,153.0 308.0,175.0 307.0,215.0 309.0,265.0 310.0,300.0 307.0,310.0 303.0,345.0 297.0,379.0 291.0,415.0 289.0,435.0 295.0,445.0 309.0,460.0 312.0,468.0 299.0,473.0 282.0,472.0 274.0,457.0 269.0,425.0 268.0,395.0 266.0,345.0 265.0,314.0 261.0,327.0 254.0,395.0 248.0,445.0 249.0,460.0 243.0,472.0 227.0,473.0 219.0,470.0 219.0,445.0 218.0,415.0 216.0,379.0 214.0,335.0 214.0,301.0 213.0,285.0 212.0,261.0 205.0,263.0 200.0,255.0 200.0,230.0 205.0,222.0 213.0,220.0 215.0,195.0 217.0,165.0 218.0,159.0 187.0,153.0 147.0,148.0 97.0,146.0 65.0,147.0 57.0,149.0 45.0,156.0 39.0,154.0 34.0,151.0 27.0,152.0 22.0,146.0 21.0,137.0 27.0,133.0 37.0,131.0 57.0,129.0 65.0,127.0 107.0,121.0 157.0,114.0 197.0,108.0 219.0,106.0 237.0,102.0 247.0,99.0 241.0,90.0 238.0,71.0 239.0,55.0 245.0,45.0 255.0,40.0" fill="#809dc5" stroke="#809dc5" stroke-width="6" stroke-linejoin="round"/><polygon points="268.0,38.0 282.0,39.0 290.0,43.0 292.0,60.0 291.0,75.0 288.0,90.0 284.0,97.0 277.0,102.0 287.0,103.0 310.0,110.0 327.0,115.0 367.0,123.0 405.0,128.0 415.0,130.0 424.0,133.0 428.0,139.0 424.0,145.0 417.0,149.0 409.0,145.0 403.0,143.0 367.0,145.0 327.0,148.0 310.0,153.0 308.0,175.0 307.0,215.0 309.0,265.0 310.0,300.0 307.0,310.0 303.0,345.0 297.0,379.0 291.0,415.0 289.0,435.0 295.0,445.0 309.0,460.0 312.0,468.0 299.0,473.0 282.0,472.0 274.0,457.0 269.0,425.0 268.0,395.0 266.0,345.0 265.0,314.0 261.0,327.0 254.0,395.0 248.0,445.0 249.0,460.0 243.0,472.0 227.0,473.0 219.0,470.0 219.0,445.0 218.0,415.0 216.0,379.0 214.0,335.0 214.0,301.0 213.0,285.0 212.0,261.0 205.0,263.0 200.0,255.0 200.0,230.0 205.0,222.0 213.0,220.0 215.0,195.0 217.0,165.0 218.0,159.0 187.0,153.0 147.0,148.0 97.0,146.0 65.0,147.0 57.0,149.0 45.0,156.0 39.0,154.0 34.0,151.0 27.0,152.0 22.0,146.0 21.0,137.0 27.0,133.0 37.0,131.0 57.0,129.0 65.0,127.0 107.0,121.0 157.0,114.0 197.0,108.0 219.0,106.0 237.0,102.0 247.0,99.0 241.0,90.0 238.0,71.0 239.0,55.0 245.0,45.0 255.0,40.0" fill="#d6d6d6" stroke="#dcdcdc" stroke-width="1" stroke-linejoin="round"/><polyline points="67.0,145.0 147.0,147.0 215.0,153.0" stroke="#bdb5ad" stroke-width="4" fill="none"/><polyline points="313.0,149.0 367.0,144.0 409.0,142.0" stroke="#bdb5ad" stroke-width="4" fill="none"/><polyline points="67.0,133.0 147.0,125.0 215.0,119.0" stroke="#e2e2e2" stroke-width="6" fill="none"/><polyline points="315.0,123.0 367.0,130.0 409.0,134.0" stroke="#e0e0e0" stroke-width="6" fill="none"/><rect x="267" y="115" width="15" height="185" fill="#cbcbcb"/><rect x="269" y="115" width="5" height="185" fill="#dadada"/><polyline points="243.0,106.0 255.0,120.0 267.0,115.0 282.0,115.0 295.0,123.0 299.0,111.0" stroke="#a9a9a9" stroke-width="1.5" fill="none"/><rect x="229" y="150" width="36" height="12" fill="#cfcfcf"/><line x1="229" y1="162" x2="265" y2="162" stroke="#9d9d9d" stroke-width="1.2"/><rect x="230" y="163" width="34" height="34" fill="#d0d0d0"/><line x1="231" y1="197" x2="265" y2="197" stroke="#b0b0b0" stroke-width="1.5"/><rect x="287" y="158" width="22" height="10" fill="#cdcdcd"/><line x1="287" y1="168" x2="309" y2="168" stroke="#a5a5a5" stroke-width="1"/><polyline points="217.0,238.0 267.0,243.0 310.0,236.0" stroke="#c2c2c2" stroke-width="9" fill="none"/><polyline points="217.0,243.0 267.0,249.0 310.0,242.0" stroke="#a8a8a8" stroke-width="1" fill="none"/><rect x="234" y="237" width="13" height="16" fill="#bdbdbd"/><polyline points="215.0,301.0 263.0,303.0 309.0,299.0" stroke="#bdbdbd" stroke-width="2" fill="none"/><g transform="translate(-327,-829)"><path d="M696 851 L710 851 L703 872 Z" fill="#52d41d"/><path d="M674 882 L681 894 L695 882 Z" fill="#c01414"/><path d="M732 882 L725 894 L711 882 Z" fill="#1a3ad8"/><path d="M681 870 L685 877 L697 878 Z" fill="#d0d0d0"/><path d="M725 870 L721 877 L709 878 Z" fill="#d0d0d0"/><path d="M699 902 L707 902 L703 886 Z" fill="#d3d3d3"/><path d="M703 871 L712 876 L712 886 L703 891 L694 886 L694 876 Z" fill="#bdbdbd"/><path d="M703 871 L712 876 L703 881 L694 876 Z" fill="#e0e0e0"/><text x="699" y="846" fill="#fff" font-size="12" font-weight="bold" font-family="Liberation Sans">y</text><text x="664" y="898" fill="#fff" font-size="12" font-weight="bold" font-family="Liberation Sans">x</text><text x="734" y="898" fill="#fff" font-size="12" font-weight="bold" font-family="Liberation Sans">z</text></g></svg>
<div class="a t" style="top:921.0px;font-size:12.5px;line-height:16px;left:692px;color:#b4c2d6;">Persp</div>
<svg class="a" style="left:679px;top:923px;" width="10" height="12" viewBox="0 0 10 12"><path d="M9 1 L1 6 L9 11 M9 6 H1" fill="none" stroke="#b4c2d6" stroke-width="1"/></svg>
<svg class="a" style="left:733px;top:841px;filter:invert(1);opacity:0.8;" width="9" height="11"><use href="#lock"/></svg>
<svg class="a" style="left:327px;top:1592px;overflow:hidden" width="427" height="472"><defs><linearGradient id="mgp3" gradientUnits="userSpaceOnUse" x1="0" y1="44" x2="0" y2="130"><stop offset="0" stop-color="#fff" stop-opacity="0.08"/><stop offset="1" stop-color="#fff" stop-opacity="1"/></linearGradient><mask id="mkp3" maskUnits="userSpaceOnUse" x="0" y="0" width="427" height="472"><rect x="0" y="0" width="427" height="472" fill="url(#mgp3)"/></mask></defs><g mask="url(#mkp3)"><g stroke="rgba(190,210,235,0.45)" stroke-width="0.9" fill="none"><line x1="138056.7" y1="6304.0" x2="755.6" y2="55.2"/><line x1="130802.7" y1="6304.0" x2="739.1" y2="55.0"/><line x1="123548.7" y1="6304.0" x2="723.1" y2="54.8"/><line x1="116294.7" y1="6304.0" x2="707.6" y2="54.7"/><line x1="109040.7" y1="6304.0" x2="692.5" y2="54.5"/><line x1="101786.7" y1="6304.0" x2="677.9" y2="54.4"/><line x1="94532.7" y1="6304.0" x2="663.6" y2="54.2"/><line x1="87278.7" y1="6304.0" x2="649.8" y2="54.1"/><line x1="80024.7" y1="6304.0" x2="636.3" y2="53.9"/><line x1="72770.7" y1="6304.0" x2="623.3" y2="53.8"/><line x1="65516.7" y1="6304.0" x2="610.5" y2="53.7"/><line x1="58262.7" y1="6304.0" x2="598.1" y2="53.6"/><line x1="51008.7" y1="6304.0" x2="586.1" y2="53.4"/><line x1="43754.7" y1="6304.0" x2="574.3" y2="53.3"/><line x1="36500.7" y1="6304.0" x2="562.8" y2="53.2"/><line x1="29246.7" y1="6304.0" x2="551.6" y2="53.1"/><line x1="21992.7" y1="6304.0" x2="540.7" y2="53.0"/><line x1="14738.7" y1="6304.0" x2="530.1" y2="52.9"/><line x1="7484.7" y1="6304.0" x2="519.7" y2="52.7"/><line x1="230.7" y1="6304.0" x2="509.6" y2="52.6"/><line x1="-7023.3" y1="6304.0" x2="499.7" y2="52.5"/><line x1="-14277.3" y1="6304.0" x2="490.1" y2="52.4"/><line x1="-21531.3" y1="6304.0" x2="480.6" y2="52.3"/><line x1="-28785.3" y1="6304.0" x2="471.4" y2="52.2"/><line x1="-36039.3" y1="6304.0" x2="462.4" y2="52.2"/><line x1="-43293.3" y1="6304.0" x2="453.6" y2="52.1"/><line x1="-50547.3" y1="6304.0" x2="445.0" y2="52.0"/><line x1="-57801.3" y1="6304.0" x2="436.6" y2="51.9"/><line x1="-65055.3" y1="6304.0" x2="428.3" y2="51.8"/><line x1="-72309.3" y1="6304.0" x2="420.2" y2="51.7"/><line x1="-79563.3" y1="6304.0" x2="412.3" y2="51.6"/><line x1="-86817.3" y1="6304.0" x2="404.6" y2="51.6"/><line x1="-94071.3" y1="6304.0" x2="397.0" y2="51.5"/><line x1="-101325.3" y1="6304.0" x2="389.6" y2="51.4"/><line x1="-108579.3" y1="6304.0" x2="382.4" y2="51.3"/><line x1="-115833.3" y1="6304.0" x2="375.2" y2="51.3"/><line x1="-123087.3" y1="6304.0" x2="368.3" y2="51.2"/><line x1="-130341.3" y1="6304.0" x2="361.4" y2="51.1"/><line x1="-137595.3" y1="6304.0" x2="354.7" y2="51.0"/><line x1="-144849.3" y1="6304.0" x2="348.1" y2="51.0"/><line x1="-152103.3" y1="6304.0" x2="341.7" y2="50.9"/><line x1="-159357.3" y1="6304.0" x2="335.3" y2="50.8"/><line x1="-166611.3" y1="6304.0" x2="329.1" y2="50.8"/><line x1="-173865.3" y1="6304.0" x2="323.0" y2="50.7"/><line x1="-22193.7" y1="826.5" x2="317.1" y2="50.7"/><line x1="-10823.0" y1="419.6" x2="311.2" y2="50.6"/><line x1="-7232.3" y1="291.1" x2="305.4" y2="50.5"/><line x1="-5472.1" y1="228.1" x2="299.7" y2="50.5"/><line x1="-4427.0" y1="190.7" x2="294.2" y2="50.4"/><line x1="-3734.8" y1="165.9" x2="288.7" y2="50.4"/><line x1="-3242.6" y1="148.3" x2="283.3" y2="50.3"/><line x1="-2874.6" y1="135.2" x2="278.1" y2="50.2"/><line x1="-2589.1" y1="124.9" x2="272.9" y2="50.2"/><line x1="-2361.1" y1="116.8" x2="267.8" y2="50.1"/><line x1="-2174.9" y1="110.1" x2="262.8" y2="50.1"/><line x1="-2019.9" y1="104.6" x2="257.8" y2="50.0"/><line x1="-1888.9" y1="99.9" x2="253.0" y2="50.0"/><line x1="-1776.7" y1="95.9" x2="248.2" y2="49.9"/><line x1="-1679.6" y1="92.4" x2="243.5" y2="49.9"/><line x1="-1594.6" y1="89.4" x2="238.9" y2="49.8"/><line x1="-1519.7" y1="86.7" x2="234.4" y2="49.8"/><line x1="-1453.2" y1="84.3" x2="229.9" y2="49.8"/><line x1="-1393.7" y1="82.2" x2="225.5" y2="49.7"/><line x1="-1340.1" y1="80.3" x2="221.2" y2="49.7"/><line x1="-1291.7" y1="78.5" x2="216.9" y2="49.6"/><line x1="-1247.7" y1="76.9" x2="212.7" y2="49.6"/><line x1="-1207.5" y1="75.5" x2="208.6" y2="49.5"/><line x1="-1170.7" y1="74.2" x2="204.5" y2="49.5"/><line x1="-1136.9" y1="73.0" x2="200.5" y2="49.4"/><line x1="-1105.6" y1="71.9" x2="196.5" y2="49.4"/><line x1="-1076.7" y1="70.8" x2="192.7" y2="49.4"/><line x1="-1049.9" y1="69.9" x2="188.8" y2="49.3"/><line x1="-1024.9" y1="69.0" x2="185.0" y2="49.3"/><line x1="-1001.6" y1="68.1" x2="181.3" y2="49.2"/><line x1="-979.7" y1="67.4" x2="177.7" y2="49.2"/><line x1="-959.3" y1="66.6" x2="174.0" y2="49.2"/><line x1="-940.1" y1="65.9" x2="170.5" y2="49.1"/><line x1="-922.0" y1="65.3" x2="167.0" y2="49.1"/><line x1="-905.0" y1="64.7" x2="163.5" y2="49.1"/><line x1="-888.9" y1="64.1" x2="160.1" y2="49.0"/><line x1="-873.7" y1="63.6" x2="156.7" y2="49.0"/><line x1="-175260.3" y1="6304.0" x2="-873.7" y2="63.6"/><line x1="-165495.3" y1="6304.0" x2="-825.0" y2="62.9"/><line x1="-155730.3" y1="6304.0" x2="-779.6" y2="62.2"/><line x1="-145965.3" y1="6304.0" x2="-737.2" y2="61.6"/><line x1="-136200.3" y1="6304.0" x2="-697.6" y2="61.1"/><line x1="-126435.3" y1="6304.0" x2="-660.3" y2="60.5"/><line x1="-116670.3" y1="6304.0" x2="-625.3" y2="60.1"/><line x1="-106905.3" y1="6304.0" x2="-592.3" y2="59.6"/><line x1="-97140.3" y1="6304.0" x2="-561.2" y2="59.1"/><line x1="-87375.3" y1="6304.0" x2="-531.8" y2="58.7"/><line x1="-77610.3" y1="6304.0" x2="-504.0" y2="58.3"/><line x1="-67845.3" y1="6304.0" x2="-477.6" y2="58.0"/><line x1="-58080.3" y1="6304.0" x2="-452.6" y2="57.6"/><line x1="-48315.3" y1="6304.0" x2="-428.7" y2="57.3"/><line x1="-38550.3" y1="6304.0" x2="-406.1" y2="57.0"/><line x1="-28785.3" y1="6304.0" x2="-384.5" y2="56.6"/><line x1="-19020.3" y1="6304.0" x2="-363.9" y2="56.4"/><line x1="-9255.3" y1="6304.0" x2="-344.2" y2="56.1"/><line x1="509.7" y1="6304.0" x2="-325.4" y2="55.8"/><line x1="10274.7" y1="6304.0" x2="-307.4" y2="55.6"/><line x1="20039.7" y1="6304.0" x2="-290.2" y2="55.3"/><line x1="29804.7" y1="6304.0" x2="-273.7" y2="55.1"/><line x1="39569.7" y1="6304.0" x2="-257.8" y2="54.9"/><line x1="49334.7" y1="6304.0" x2="-242.6" y2="54.6"/><line x1="59099.7" y1="6304.0" x2="-228.0" y2="54.4"/><line x1="68864.7" y1="6304.0" x2="-213.9" y2="54.2"/><line x1="78629.7" y1="6304.0" x2="-200.3" y2="54.0"/><line x1="88394.7" y1="6304.0" x2="-187.3" y2="53.9"/><line x1="98159.7" y1="6304.0" x2="-174.7" y2="53.7"/><line x1="107924.7" y1="6304.0" x2="-162.6" y2="53.5"/><line x1="117689.7" y1="6304.0" x2="-150.9" y2="53.3"/><line x1="127454.7" y1="6304.0" x2="-139.5" y2="53.2"/><line x1="137219.7" y1="6304.0" x2="-128.6" y2="53.0"/><line x1="12299.7" y1="580.6" x2="-118.0" y2="52.9"/><line x1="6404.9" y1="312.3" x2="-107.8" y2="52.7"/><line x1="4439.9" y1="222.9" x2="-97.9" y2="52.6"/><line x1="3457.4" y1="178.1" x2="-88.3" y2="52.5"/><line x1="2867.9" y1="151.3" x2="-79.1" y2="52.3"/><line x1="2475.0" y1="133.4" x2="-70.1" y2="52.2"/><line x1="2194.2" y1="120.7" x2="-61.3" y2="52.1"/><line x1="1983.7" y1="111.1" x2="-52.8" y2="52.0"/><line x1="1820.0" y1="103.6" x2="-44.6" y2="51.8"/><line x1="1689.0" y1="97.7" x2="-36.6" y2="51.7"/><line x1="1581.8" y1="92.8" x2="-28.9" y2="51.6"/><line x1="1492.5" y1="88.7" x2="-21.3" y2="51.5"/><line x1="1416.9" y1="85.3" x2="-14.0" y2="51.4"/><line x1="1352.1" y1="82.3" x2="-6.9" y2="51.3"/><line x1="1296.0" y1="79.8" x2="0.1" y2="51.2"/><line x1="1246.9" y1="77.5" x2="6.8" y2="51.1"/><line x1="1203.5" y1="75.6" x2="13.4" y2="51.0"/><line x1="1165.0" y1="73.8" x2="19.8" y2="50.9"/><line x1="1130.5" y1="72.2" x2="26.1" y2="50.8"/><line x1="1099.5" y1="70.8" x2="32.2" y2="50.8"/><line x1="1071.4" y1="69.6" x2="38.1" y2="50.7"/><line x1="1045.9" y1="68.4" x2="43.9" y2="50.6"/><line x1="1022.6" y1="67.3" x2="49.6" y2="50.5"/><line x1="1001.2" y1="66.4" x2="55.1" y2="50.4"/><line x1="981.6" y1="65.5" x2="60.5" y2="50.4"/><line x1="963.5" y1="64.6" x2="65.7" y2="50.3"/><line x1="946.7" y1="63.9" x2="70.9" y2="50.2"/><line x1="931.1" y1="63.2" x2="75.9" y2="50.1"/><line x1="916.5" y1="62.5" x2="80.8" y2="50.1"/><line x1="903.0" y1="61.9" x2="85.6" y2="50.0"/><line x1="890.3" y1="61.3" x2="90.3" y2="49.9"/><line x1="878.4" y1="60.8" x2="94.9" y2="49.9"/><line x1="867.3" y1="60.3" x2="99.4" y2="49.8"/><line x1="856.8" y1="59.8" x2="103.8" y2="49.7"/><line x1="846.8" y1="59.3" x2="108.1" y2="49.7"/><line x1="837.5" y1="58.9" x2="112.3" y2="49.6"/><line x1="828.6" y1="58.5" x2="116.4" y2="49.6"/><line x1="820.3" y1="58.1" x2="120.5" y2="49.5"/><line x1="812.3" y1="57.8" x2="124.4" y2="49.5"/><line x1="804.7" y1="57.4" x2="128.3" y2="49.4"/><line x1="797.6" y1="57.1" x2="132.1" y2="49.3"/><line x1="790.7" y1="56.8" x2="135.8" y2="49.3"/><line x1="784.2" y1="56.5" x2="139.5" y2="49.2"/><line x1="777.9" y1="56.2" x2="143.1" y2="49.2"/><line x1="772.0" y1="55.9" x2="146.6" y2="49.1"/><line x1="766.3" y1="55.7" x2="150.0" y2="49.1"/><line x1="760.8" y1="55.4" x2="153.4" y2="49.0"/><line x1="755.6" y1="55.2" x2="156.7" y2="49.0"/></g></g><polygon points="135.8,111.2 151.0,107.0 165.8,105.9 169.3,110.3 168.4,133.3 178.0,136.8 213.4,129.7 220.4,130.6 222.2,135.0 209.8,140.3 181.6,152.6 183.4,182.6 181.6,203.8 187.0,228.4 181.6,242.5 178.0,256.6 181.6,306.0 192.2,314.8 194.0,321.9 183.4,323.6 169.3,314.8 164.0,274.3 158.7,300.7 162.3,327.2 172.8,341.3 160.5,348.3 148.0,336.0 142.9,309.5 137.6,256.6 135.8,232.0 127.0,225.0 125.2,209.0 132.3,200.0 128.8,172.0 97.0,177.3 58.3,191.4 44.0,196.7 36.2,194.0 38.9,186.0 67.0,172.0 111.0,154.4 135.8,140.3 142.9,131.5 137.6,117.4" fill="#7c98c0" stroke="#7c98c0" stroke-width="5" stroke-linejoin="round"/><polygon points="135.8,111.2 151.0,107.0 165.8,105.9 169.3,110.3 168.4,133.3 178.0,136.8 213.4,129.7 220.4,130.6 222.2,135.0 209.8,140.3 181.6,152.6 183.4,182.6 181.6,203.8 187.0,228.4 181.6,242.5 178.0,256.6 181.6,306.0 192.2,314.8 194.0,321.9 183.4,323.6 169.3,314.8 164.0,274.3 158.7,300.7 162.3,327.2 172.8,341.3 160.5,348.3 148.0,336.0 142.9,309.5 137.6,256.6 135.8,232.0 127.0,225.0 125.2,209.0 132.3,200.0 128.8,172.0 97.0,177.3 58.3,191.4 44.0,196.7 36.2,194.0 38.9,186.0 67.0,172.0 111.0,154.4 135.8,140.3 142.9,131.5 137.6,117.4" fill="#4c9426" stroke="#53992b" stroke-width="1" stroke-linejoin="round"/><polyline points="161.0,138.0 165.0,238.0" stroke="#3f7f1e" stroke-width="2" fill="none"/><polyline points="138.0,214.0 181.0,211.0" stroke="#3d7a1c" stroke-width="3" fill="none"/><polyline points="141.0,108.0 143.0,130.0 135.0,144.0" stroke="#62ad38" stroke-width="3" fill="none"/><polyline points="65.0,180.0 113.0,163.0 135.0,153.0" stroke="#5aa633" stroke-width="3" fill="none"/><g stroke="#e8eef8" stroke-width="1" fill="none"><line x1="5" y1="122" x2="204.60000000000002" y2="88"/><line x1="204.60000000000002" y1="88" x2="247.60000000000002" y2="93.5"/><line x1="247.60000000000002" y1="93.5" x2="53" y2="134"/><line x1="53" y1="134" x2="5" y2="122"/><line x1="5" y1="122" x2="70.60000000000002" y2="377"/><line x1="53" y1="134" x2="107.60000000000002" y2="408"/><line x1="204.60000000000002" y1="88" x2="206" y2="275"/><line x1="247.60000000000002" y1="93.5" x2="238" y2="285.70000000000005"/><line x1="70.60000000000002" y1="377" x2="107.60000000000002" y2="408"/><line x1="107.60000000000002" y1="408" x2="238" y2="285.70000000000005"/><line x1="238" y1="285.70000000000005" x2="206" y2="275"/><line x1="206" y1="275" x2="70.60000000000002" y2="377"/></g><line x1="166" y1="331" x2="111" y2="376" stroke="#e02020" stroke-width="1"/><line x1="166" y1="331" x2="233" y2="361" stroke="#2040ff" stroke-width="1"/><line x1="166" y1="331" x2="165" y2="261" stroke="#40ff40" stroke-width="1"/><path d="M97 386 L109 370 L117 382 Z" fill="#e01818"/><path d="M245 367 L226 356 L230 369 Z" fill="#1a3ae8"/><path d="M164 249 L158 266 L170 266 Z" fill="#40e020"/><g transform="translate(-327,-1592)"><path d="M696 1614 L710 1614 L703 1635 Z" fill="#52d41d"/><path d="M674 1645 L681 1657 L695 1645 Z" fill="#c01414"/><path d="M732 1645 L725 1657 L711 1645 Z" fill="#1a3ad8"/><path d="M681 1633 L685 1640 L697 1641 Z" fill="#d0d0d0"/><path d="M725 1633 L721 1640 L709 1641 Z" fill="#d0d0d0"/><path d="M699 1665 L707 1665 L703 1649 Z" fill="#d3d3d3"/><path d="M703 1634 L712 1639 L712 1649 L703 1654 L694 1649 L694 1639 Z" fill="#bdbdbd"/><path d="M703 1634 L712 1639 L703 1644 L694 1639 Z" fill="#e0e0e0"/><text x="699" y="1609" fill="#fff" font-size="12" font-weight="bold" font-family="Liberation Sans">y</text><text x="664" y="1661" fill="#fff" font-size="12" font-weight="bold" font-family="Liberation Sans">x</text><text x="734" y="1661" fill="#fff" font-size="12" font-weight="bold" font-family="Liberation Sans">z</text></g></svg>
<div class="a t" style="top:1684.0px;font-size:12.5px;line-height:16px;left:692px;color:#b4c2d6;">Persp</div>
<svg class="a" style="left:679px;top:1686px;" width="10" height="12" viewBox="0 0 10 12"><path d="M9 1 L1 6 L9 11 M9 6 H1" fill="none" stroke="#b4c2d6" stroke-width="1"/></svg>
<svg class="a" style="left:733px;top:1604px;filter:invert(1);opacity:0.8;" width="9" height="11"><use href="#lock"/></svg>
<svg width="0" height="0" style="position:absolute"><defs>
<symbol id="th_helmet" viewBox="0 0 60 60"><path d="M12 42 Q11 28 24 23 Q36 19 45 27 Q50 32 50 40 L57 44 Q54 48 44 48 Q30 50 18 47 Q12 46 12 42 Z" fill="#2e6b18"/><path d="M16 36 Q20 26 32 24 Q42 24 46 32" stroke="#5fa53a" stroke-width="4" fill="none"/><path d="M14 44 L18 38 L21 46 L25 40 L28 47 L33 41 L37 48 L42 42 L46 47" fill="none" stroke="#1c4510" stroke-width="2"/></symbol>
<symbol id="th_green" viewBox="0 0 60 60"><path d="M31 12 Q34 12 34 15 L34 19 L38 18 L41 15 L43 16 L37 23 L36 34 L36 46 L37 54 L33 55 L32 44 L30 55 L27 54 L28 42 L27 32 L26 24 L22 21 L24 19 L28 20 L29 15 Q29 12 31 12 Z" fill="#3e8a22"/><path d="M31 22 L32 46" stroke="#2a6414" stroke-width="1.5"/><path d="M29 21 L29 40" stroke="#64b040" stroke-width="1.5"/></symbol>
<symbol id="th_gun" viewBox="0 0 60 60"><path d="M25 14 Q29 13 29 17 L29 21 L32 24 L34 27 L50 24 L51 26 L34 31 L32 31 L31 38 L32 50 L33 53 L29 53 L27 42 L26 53 L22 53 L23 40 L21 30 L21 22 L23 20 L23 16 Q23 14 25 14 Z" fill="#aab6cc"/><path d="M25 22 L26 38" stroke="#dde4ee" stroke-width="1.8"/></symbol>
<symbol id="th_stand" viewBox="0 0 60 60"><path d="M30 8 Q34 8 34 12 L34 16 L37 20 L37 34 L35 42 L36 54 L31 55 L30 44 L29 55 L25 55 L26 40 L24 31 L25 19 L27 16 L26 12 Q26 8 30 8 Z" fill="#aab6cc"/><path d="M31 18 L31 42" stroke="#dde4ee" stroke-width="2"/><path d="M33 52 L37 55" stroke="#d8a0c0" stroke-width="1.5"/></symbol>
<symbol id="th_tpose" viewBox="0 0 60 60"><path d="M30 14 Q33 13 33 16 L33 19 L40 17 L43 16 L43 18 L35 22 L35 32 L34 44 L35 54 L31 55 L30 44 L29 55 L26 54 L27 42 L26 32 L25 23 L18 22 L17 20 L26 19 L27 16 Q27 14 30 14 Z" fill="#aab6cc"/><path d="M30 22 L30 44" stroke="#dde4ee" stroke-width="1.8"/></symbol>
<symbol id="th_hat" viewBox="0 0 60 60"><path d="M12 40 Q11 24 30 21 Q48 21 51 36 L53 42 Q44 48 30 48 Q17 48 12 40 Z" fill="#b9b9b9"/><path d="M18 30 Q28 22 42 26" stroke="#e2e2e2" stroke-width="4" fill="none"/><path d="M14 41 Q30 47 52 40 L50 36 L44 38 L40 34 L36 39 L30 35 L26 40 L20 36 Z" fill="#1e1e1e"/><path d="M24 44 L26 38 L28 44 M40 43 L43 37 L45 42" stroke="#e8e8e8" stroke-width="1.5" fill="none"/></symbol>
<symbol id="ic_bulb" viewBox="0 0 12 14"><circle cx="6" cy="5" r="4.2" fill="#444"/><rect x="4" y="9" width="4" height="3.5" fill="#444"/></symbol>
<symbol id="ic_audio" viewBox="0 0 14 12"><path d="M1 4 H4 L8 1 V11 L4 8 H1 Z" fill="#444"/><path d="M10 3.5 Q12 6 10 8.5" stroke="#444" stroke-width="1.2" fill="none"/></symbol>
<symbol id="ic_fx" viewBox="0 0 16 14"><path d="M1 8 L7 5 L14 8 L7 11 Z" fill="#555"/><path d="M1 10.5 L7 13.5 L14 10.5" stroke="#555" stroke-width="1.2" fill="none"/><path d="M11 1 V6 M8.5 3.5 H13.5" stroke="#444" stroke-width="1.4"/></symbol>
<symbol id="ic_eye" viewBox="0 0 16 12"><path d="M1 6 Q8 -1 15 6 Q8 13 1 6 Z" fill="none" stroke="#333" stroke-width="1.3"/><circle cx="8" cy="6" r="2" fill="#333"/><path d="M2 11 L14 1" stroke="#333" stroke-width="1.4"/></symbol>
<symbol id="ic_gridy" viewBox="0 0 16 14"><path d="M4 1 V13 M9 1 V8 M1 4 H14 M1 9 H8" stroke="#333" stroke-width="1.2"/><path d="M10 8 L12 11 L14 8 M12 11 V14" stroke="#333" stroke-width="1.2" fill="none"/></symbol>
<symbol id="ic_tools" viewBox="0 0 14 14"><path d="M2 12 L12 2 M2 2 L12 12" stroke="#333" stroke-width="1.8"/><circle cx="3" cy="3" r="2" fill="#333"/><path d="M10 10 L13 13" stroke="#333" stroke-width="3"/></symbol>
<symbol id="ic_cam" viewBox="0 0 16 12"><rect x="1" y="2" width="9" height="8" fill="#333"/><path d="M10 5 L15 2 V10 L10 7 Z" fill="#333"/></symbol>
<symbol id="ic_shapes" viewBox="0 0 14 14"><rect x="3" y="0.5" width="6" height="6" fill="#555"/><circle cx="4" cy="10" r="3.5" fill="#555"/><path d="M8.5 13 L11 7 L13.8 13 Z" fill="#555"/></symbol>
<symbol id="ic_tag" viewBox="0 0 14 14"><path d="M1 8 L8 1 H13 V6 L6 13 Z" fill="#555"/><circle cx="10.5" cy="3.5" r="1.2" fill="#ddd"/></symbol>
<symbol id="ic_star" viewBox="0 0 14 14"><path d="M7 0.8 L8.9 5 L13.4 5.3 L10 8.3 L11 12.8 L7 10.4 L3 12.8 L4 8.3 L0.6 5.3 L5.1 5 Z" fill="#8a8a8a"/></symbol>
</defs></svg>
<div class="a" style="left:459px;top:588px;width:57px;height:57px;background:#5b5b5b;box-shadow:0 1px 1px rgba(0,0,0,0.25);"></div>
<svg class="a" style="left:459px;top:588px;width:57px;height:57px;" width="57" height="57"><use href="#th_helmet"/></svg>
<div class="a" style="left:539px;top:588px;width:57px;height:57px;background:#5b5b5b;box-shadow:0 1px 1px rgba(0,0,0,0.25);"></div>
<svg class="a" style="left:539px;top:588px;width:57px;height:57px;" width="57" height="57"><use href="#th_green"/></svg>
<div class="a" style="left:618px;top:588px;width:57px;height:57px;background:#5b5b5b;box-shadow:0 1px 1px rgba(0,0,0,0.25);"></div>
<svg class="a" style="left:618px;top:588px;width:57px;height:57px;" width="57" height="57"><use href="#th_green"/></svg>
<div class="a" style="left:698px;top:588px;width:57px;height:57px;background:#5b5b5b;box-shadow:0 1px 1px rgba(0,0,0,0.25);"></div>
<svg class="a" style="left:698px;top:588px;width:57px;height:57px;" width="57" height="57"><use href="#th_green"/></svg>
<div class="a" style="left:778px;top:588px;width:57px;height:57px;background:#5b5b5b;box-shadow:0 1px 1px rgba(0,0,0,0.25);"></div>
<svg class="a" style="left:778px;top:588px;width:57px;height:57px;" width="57" height="57"><use href="#th_gun"/></svg>
<svg class="a" style="left:828px;top:608px;" width="16" height="16"><use href="#play"/></svg>
<div class="a" style="left:857px;top:588px;width:58px;height:58px;background:#5b5b5b;box-shadow:0 1px 1px rgba(0,0,0,0.25);"></div>
<svg class="a" style="left:857px;top:588px;width:58px;height:58px;" width="58" height="58"><use href="#th_stand"/></svg>
<svg class="a" style="left:909px;top:608px;" width="16" height="16"><use href="#play"/></svg>
<div class="a" style="left:298px;top:677px;width:58px;height:58px;background:#5b5b5b;box-shadow:0 1px 1px rgba(0,0,0,0.25);"></div>
<svg class="a" style="left:298px;top:677px;width:58px;height:58px;" width="58" height="58"><use href="#th_tpose"/></svg>
<svg class="a" style="left:349.5px;top:698px;" width="16" height="16"><use href="#play"/></svg>
<div class="a" style="left:379px;top:677px;width:58px;height:58px;background:#5b5b5b;box-shadow:0 1px 1px rgba(0,0,0,0.25);"></div>
<svg class="a" style="left:379px;top:677px;width:58px;height:58px;" width="58" height="58"><use href="#th_hat"/></svg>
<svg class="a" style="left:432.7px;top:699.5px;" width="16" height="16"><use href="#play"/></svg>
<div class="a" style="left:286px;top:1376px;width:61px;height:61px;background:#5b5b5b;box-shadow:0 1px 1px rgba(0,0,0,0.25);"></div>
<svg class="a" style="left:286px;top:1376px;width:61px;height:61px;" width="61" height="61"><use href="#th_helmet"/></svg>
<div class="a" style="left:365px;top:1376px;width:61px;height:61px;background:#5b5b5b;box-shadow:0 1px 1px rgba(0,0,0,0.25);"></div>
<svg class="a" style="left:365px;top:1376px;width:61px;height:61px;" width="61" height="61"><use href="#th_green"/></svg>
<div class="a" style="left:442px;top:1376px;width:61px;height:61px;background:#5b5b5b;box-shadow:0 1px 1px rgba(0,0,0,0.25);"></div>
<svg class="a" style="left:442px;top:1376px;width:61px;height:61px;" width="61" height="61"><use href="#th_green"/></svg>
<div class="a" style="left:519px;top:1376px;width:61px;height:61px;background:#5b5b5b;box-shadow:0 1px 1px rgba(0,0,0,0.25);"></div>
<svg class="a" style="left:519px;top:1376px;width:61px;height:61px;" width="61" height="61"><use href="#th_green"/></svg>
<div class="a" style="left:597px;top:1376px;width:61px;height:61px;background:#5b5b5b;box-shadow:0 1px 1px rgba(0,0,0,0.25);"></div>
<svg class="a" style="left:597px;top:1376px;width:61px;height:61px;" width="61" height="61"><use href="#th_gun"/></svg>
<svg class="a" style="left:652px;top:1398px;" width="16" height="16"><use href="#play"/></svg>
<div class="a" style="left:675px;top:1376px;width:61px;height:61px;background:#5b5b5b;box-shadow:0 1px 1px rgba(0,0,0,0.25);"></div>
<svg class="a" style="left:675px;top:1376px;width:61px;height:61px;" width="61" height="61"><use href="#th_stand"/></svg>
<svg class="a" style="left:729px;top:1398px;" width="16" height="16"><use href="#play"/></svg>
<div class="a" style="left:131px;top:1469px;width:61px;height:61px;background:#5b5b5b;box-shadow:0 1px 1px rgba(0,0,0,0.25);"></div>
<svg class="a" style="left:131px;top:1469px;width:61px;height:61px;" width="61" height="61"><use href="#th_tpose"/></svg>
<svg class="a" style="left:186px;top:1490px;" width="16" height="16"><use href="#play"/></svg>
<div class="a" style="left:209px;top:1469px;width:61px;height:61px;background:#5b5b5b;box-shadow:0 1px 1px rgba(0,0,0,0.25);"></div>
<svg class="a" style="left:209px;top:1469px;width:61px;height:61px;" width="61" height="61"><use href="#th_hat"/></svg>
<svg class="a" style="left:263px;top:1490px;" width="16" height="16"><use href="#play"/></svg>
<div class="a" style="left:286px;top:2139px;width:61px;height:61px;background:#5b5b5b;box-shadow:0 1px 1px rgba(0,0,0,0.25);"></div>
<svg class="a" style="left:286px;top:2139px;width:61px;height:61px;" width="61" height="61"><use href="#th_helmet"/></svg>
<div class="a" style="left:365px;top:2139px;width:61px;height:61px;background:#5b5b5b;box-shadow:0 1px 1px rgba(0,0,0,0.25);"></div>
<svg class="a" style="left:365px;top:2139px;width:61px;height:61px;" width="61" height="61"><use href="#th_green"/></svg>
<div class="a" style="left:442px;top:2139px;width:61px;height:61px;background:#5b5b5b;box-shadow:0 1px 1px rgba(0,0,0,0.25);"></div>
<svg class="a" style="left:442px;top:2139px;width:61px;height:61px;" width="61" height="61"><use href="#th_green"/></svg>
<div class="a" style="left:519px;top:2139px;width:61px;height:61px;background:#5b5b5b;box-shadow:0 1px 1px rgba(0,0,0,0.25);"></div>
<svg class="a" style="left:519px;top:2139px;width:61px;height:61px;" width="61" height="61"><use href="#th_green"/></svg>
<div class="a" style="left:597px;top:2139px;width:61px;height:61px;background:#5b5b5b;box-shadow:0 1px 1px rgba(0,0,0,0.25);"></div>
<svg class="a" style="left:597px;top:2139px;width:61px;height:61px;" width="61" height="61"><use href="#th_gun"/></svg>
<svg class="a" style="left:652px;top:2161px;" width="16" height="16"><use href="#play"/></svg>
<div class="a" style="left:675px;top:2139px;width:61px;height:61px;background:#5b5b5b;box-shadow:0 1px 1px rgba(0,0,0,0.25);"></div>
<svg class="a" style="left:675px;top:2139px;width:61px;height:61px;" width="61" height="61"><use href="#th_stand"/></svg>
<svg class="a" style="left:729px;top:2161px;" width="16" height="16"><use href="#play"/></svg>
<div class="a" style="left:131px;top:2232px;width:61px;height:61px;background:#5b5b5b;box-shadow:0 1px 1px rgba(0,0,0,0.25);"></div>
<svg class="a" style="left:131px;top:2232px;width:61px;height:61px;" width="61" height="61"><use href="#th_tpose"/></svg>
<svg class="a" style="left:186px;top:2253px;" width="16" height="16"><use href="#play"/></svg>
<div class="a" style="left:209px;top:2232px;width:61px;height:61px;background:#5b5b5b;box-shadow:0 1px 1px rgba(0,0,0,0.25);"></div>
<svg class="a" style="left:209px;top:2232px;width:61px;height:61px;" width="61" height="61"><use href="#th_hat"/></svg>
<svg class="a" style="left:263px;top:2253px;" width="16" height="16"><use href="#play"/></svg>
<svg class="a" style="left:833px;top:538px;" width="14" height="14"><use href="#ic_shapes"/></svg>
<svg class="a" style="left:858px;top:538px;" width="14" height="14"><use href="#ic_tag"/></svg>
<svg class="a" style="left:884px;top:538px;" width="14" height="14"><use href="#ic_star"/></svg>
<svg class="a" style="left:907px;top:539px;" width="14" height="11"><use href="#ic_eye"/></svg>
<svg class="a" style="left:648px;top:1325px;" width="14" height="14"><use href="#ic_shapes"/></svg>
<svg class="a" style="left:673px;top:1325px;" width="14" height="14"><use href="#ic_tag"/></svg>
<svg class="a" style="left:699px;top:1325px;" width="14" height="14"><use href="#ic_star"/></svg>
<svg class="a" style="left:722px;top:1326px;" width="14" height="11"><use href="#ic_eye"/></svg>
<svg class="a" style="left:648px;top:2088px;" width="14" height="14"><use href="#ic_shapes"/></svg>
<svg class="a" style="left:673px;top:2088px;" width="14" height="14"><use href="#ic_tag"/></svg>
<svg class="a" style="left:699px;top:2088px;" width="14" height="14"><use href="#ic_star"/></svg>
<svg class="a" style="left:722px;top:2089px;" width="14" height="11"><use href="#ic_eye"/></svg>
<svg class="a" style="left:605px;top:415px;overflow:hidden;" width="60" height="92" viewBox="0 0 60 92"><path d="M30 20 V90 M30 90 L8 98 M30 90 L52 80" stroke-width="1.2" fill="none" stroke="#3de03d"/><path d="M30 90 L8 98" stroke="#e03030" stroke-width="1.2"/><path d="M30 90 L52 80" stroke="#3050ff" stroke-width="1.2"/><path d="M30 8 L24 24 L36 24 Z" fill="#50e030"/><rect x="16" y="72" width="14" height="18" fill="rgba(60,90,255,0.45)"/><rect x="30" y="84" width="16" height="14" fill="rgba(60,200,120,0.45)"/></svg>
<svg class="a" style="left:559px;top:1209px;overflow:hidden;" width="60" height="92" viewBox="0 0 60 92"><path d="M30 20 V90 M30 90 L8 98 M30 90 L52 80" stroke-width="1.2" fill="none" stroke="#3de03d"/><path d="M30 90 L8 98" stroke="#e03030" stroke-width="1.2"/><path d="M30 90 L52 80" stroke="#3050ff" stroke-width="1.2"/><path d="M30 8 L24 24 L36 24 Z" fill="#50e030"/><rect x="16" y="72" width="14" height="18" fill="rgba(60,90,255,0.45)"/><rect x="30" y="84" width="16" height="14" fill="rgba(60,200,120,0.45)"/></svg>
<div class="a" style="left:433px;top:18px;width:24px;height:20px;background:#c4c4c4;border:1px solid #b0b0b0;box-sizing:border-box;"></div>
<div class="a" style="left:466px;top:18px;width:23px;height:20px;background:#c8c8c8;border:1px solid #b0b0b0;box-sizing:border-box;"></div>
<div class="a" style="left:489px;top:18px;width:26px;height:20px;background:#c8c8c8;border:1px solid #b0b0b0;box-sizing:border-box;"></div>
<div class="a" style="left:515px;top:18px;width:42px;height:20px;background:#c8c8c8;border:1px solid #b0b0b0;box-sizing:border-box;"></div>
<div class="a" style="left:558px;top:18px;width:32px;height:20px;background:#e2e2e2;border:1px solid #b0b0b0;box-sizing:border-box;"></div>
<div class="a" style="left:591px;top:18px;width:42px;height:20px;background:#c8c8c8;border:1px solid #b0b0b0;box-sizing:border-box;"></div>
<div class="a" style="left:635px;top:18px;width:24px;height:20px;background:#bdbdbd;border:1px solid #b0b0b0;box-sizing:border-box;"></div>
<div class="a" style="left:659px;top:18px;width:35px;height:20px;background:#bdbdbd;border:1px solid #b0b0b0;box-sizing:border-box;"></div>
<div class="a" style="left:695px;top:18px;width:67px;height:20px;background:#e2e2e2;border:1px solid #b0b0b0;box-sizing:border-box;"></div>
<div class="a t" style="top:20.0px;font-size:11.5px;line-height:16px;left:437px;color:#444;">2D</div>
<svg class="a" style="left:472px;top:21.0px;" width="12" height="14"><use href="#ic_bulb"/></svg>
<svg class="a" style="left:495px;top:22.0px;" width="14" height="12"><use href="#ic_audio"/></svg>
<svg class="a" style="left:520px;top:21.0px;" width="16" height="14"><use href="#ic_fx"/></svg>
<svg class="a" style="left:544px;top:25.0px;" width="8" height="6"><use href="#arrowdn"/></svg>
<div class="a" style="left:540px;top:21px;width:1px;height:14px;background:#999;"></div>
<svg class="a" style="left:562px;top:22.0px;" width="16" height="12"><use href="#ic_eye"/></svg>
<div class="a t" style="top:20.0px;font-size:12.5px;line-height:16px;left:579px;color:#222;">0</div>
<svg class="a" style="left:596px;top:21.0px;" width="16" height="14"><use href="#ic_gridy"/></svg>
<svg class="a" style="left:621px;top:25.0px;" width="8" height="6"><use href="#arrowdn"/></svg>
<div class="a" style="left:616px;top:21px;width:1px;height:14px;background:#999;"></div>
<svg class="a" style="left:640px;top:21.0px;" width="14" height="14"><use href="#ic_tools"/></svg>
<svg class="a" style="left:664px;top:22.0px;" width="16" height="12"><use href="#ic_cam"/></svg>
<svg class="a" style="left:683px;top:25.0px;" width="8" height="6"><use href="#arrowdn"/></svg>
<div class="a t" style="top:20.0px;font-size:12.5px;line-height:16px;left:698px;color:#1a1a1a;">Gizmos</div>
<svg class="a" style="left:750px;top:25.0px;" width="8" height="6"><use href="#arrowdn"/></svg>
<div class="a" style="left:746px;top:21px;width:1px;height:14px;background:#999;"></div>
<div class="a" style="left:0;top:0;width:754px;height:2289px;overflow:hidden">
<div class="a" style="left:455px;top:783px;width:24px;height:19px;background:#c4c4c4;border:1px solid #b0b0b0;box-sizing:border-box;"></div>
<div class="a" style="left:488px;top:783px;width:23px;height:19px;background:#c8c8c8;border:1px solid #b0b0b0;box-sizing:border-box;"></div>
<div class="a" style="left:511px;top:783px;width:26px;height:19px;background:#c8c8c8;border:1px solid #b0b0b0;box-sizing:border-box;"></div>
<div class="a" style="left:537px;top:783px;width:42px;height:19px;background:#c8c8c8;border:1px solid #b0b0b0;box-sizing:border-box;"></div>
<div class="a" style="left:580px;top:783px;width:32px;height:19px;background:#e2e2e2;border:1px solid #b0b0b0;box-sizing:border-box;"></div>
<div class="a" style="left:613px;top:783px;width:42px;height:19px;background:#c8c8c8;border:1px solid #b0b0b0;box-sizing:border-box;"></div>
<div class="a" style="left:657px;top:783px;width:24px;height:19px;background:#bdbdbd;border:1px solid #b0b0b0;box-sizing:border-box;"></div>
<div class="a" style="left:681px;top:783px;width:35px;height:19px;background:#bdbdbd;border:1px solid #b0b0b0;box-sizing:border-box;"></div>
<div class="a" style="left:717px;top:783px;width:67px;height:19px;background:#e2e2e2;border:1px solid #b0b0b0;box-sizing:border-box;"></div>
<div class="a t" style="top:784.5px;font-size:11.5px;line-height:16px;left:459px;color:#444;">2D</div>
<svg class="a" style="left:494px;top:785.5px;" width="12" height="14"><use href="#ic_bulb"/></svg>
<svg class="a" style="left:517px;top:786.5px;" width="14" height="12"><use href="#ic_audio"/></svg>
<svg class="a" style="left:542px;top:785.5px;" width="16" height="14"><use href="#ic_fx"/></svg>
<svg class="a" style="left:566px;top:789.5px;" width="8" height="6"><use href="#arrowdn"/></svg>
<div class="a" style="left:562px;top:786px;width:1px;height:13px;background:#999;"></div>
<svg class="a" style="left:584px;top:786.5px;" width="16" height="12"><use href="#ic_eye"/></svg>
<div class="a t" style="top:784.5px;font-size:12.5px;line-height:16px;left:601px;color:#222;">0</div>
<svg class="a" style="left:618px;top:785.5px;" width="16" height="14"><use href="#ic_gridy"/></svg>
<svg class="a" style="left:643px;top:789.5px;" width="8" height="6"><use href="#arrowdn"/></svg>
<div class="a" style="left:638px;top:786px;width:1px;height:13px;background:#999;"></div>
<svg class="a" style="left:662px;top:785.5px;" width="14" height="14"><use href="#ic_tools"/></svg>
<svg class="a" style="left:686px;top:786.5px;" width="16" height="12"><use href="#ic_cam"/></svg>
<svg class="a" style="left:705px;top:789.5px;" width="8" height="6"><use href="#arrowdn"/></svg>
<div class="a t" style="top:784.5px;font-size:12.5px;line-height:16px;left:720px;color:#1a1a1a;">Gizmos</div>
<svg class="a" style="left:772px;top:789.5px;" width="8" height="6"><use href="#arrowdn"/></svg>
<div class="a" style="left:768px;top:786px;width:1px;height:13px;background:#999;"></div>
<div class="a" style="left:455px;top:1546px;width:24px;height:19px;background:#c4c4c4;border:1px solid #b0b0b0;box-sizing:border-box;"></div>
<div class="a" style="left:488px;top:1546px;width:23px;height:19px;background:#c8c8c8;border:1px solid #b0b0b0;box-sizing:border-box;"></div>
<div class="a" style="left:511px;top:1546px;width:26px;height:19px;background:#c8c8c8;border:1px solid #b0b0b0;box-sizing:border-box;"></div>
<div class="a" style="left:537px;top:1546px;width:42px;height:19px;background:#c8c8c8;border:1px solid #b0b0b0;box-sizing:border-box;"></div>
<div class="a" style="left:580px;top:1546px;width:32px;height:19px;background:#e2e2e2;border:1px solid #b0b0b0;box-sizing:border-box;"></div>
<div class="a" style="left:613px;top:1546px;width:42px;height:19px;background:#c8c8c8;border:1px solid #b0b0b0;box-sizing:border-box;"></div>
<div class="a" style="left:657px;top:1546px;width:24px;height:19px;background:#bdbdbd;border:1px solid #b0b0b0;box-sizing:border-box;"></div>
<div class="a" style="left:681px;top:1546px;width:35px;height:19px;background:#bdbdbd;border:1px solid #b0b0b0;box-sizing:border-box;"></div>
<div class="a" style="left:717px;top:1546px;width:67px;height:19px;background:#e2e2e2;border:1px solid #b0b0b0;box-sizing:border-box;"></div>
<div class="a t" style="top:1547.5px;font-size:11.5px;line-height:16px;left:459px;color:#444;">2D</div>
<svg class="a" style="left:494px;top:1548.5px;" width="12" height="14"><use href="#ic_bulb"/></svg>
<svg class="a" style="left:517px;top:1549.5px;" width="14" height="12"><use href="#ic_audio"/></svg>
<svg class="a" style="left:542px;top:1548.5px;" width="16" height="14"><use href="#ic_fx"/></svg>
<svg class="a" style="left:566px;top:1552.5px;" width="8" height="6"><use href="#arrowdn"/></svg>
<div class="a" style="left:562px;top:1549px;width:1px;height:13px;background:#999;"></div>
<svg class="a" style="left:584px;top:1549.5px;" width="16" height="12"><use href="#ic_eye"/></svg>
<div class="a t" style="top:1547.5px;font-size:12.5px;line-height:16px;left:601px;color:#222;">0</div>
<svg class="a" style="left:618px;top:1548.5px;" width="16" height="14"><use href="#ic_gridy"/></svg>
<svg class="a" style="left:643px;top:1552.5px;" width="8" height="6"><use href="#arrowdn"/></svg>
<div class="a" style="left:638px;top:1549px;width:1px;height:13px;background:#999;"></div>
<svg class="a" style="left:662px;top:1548.5px;" width="14" height="14"><use href="#ic_tools"/></svg>
<svg class="a" style="left:686px;top:1549.5px;" width="16" height="12"><use href="#ic_cam"/></svg>
<svg class="a" style="left:705px;top:1552.5px;" width="8" height="6"><use href="#arrowdn"/></svg>
<div class="a t" style="top:1547.5px;font-size:12.5px;line-height:16px;left:720px;color:#1a1a1a;">Gizmos</div>
<svg class="a" style="left:772px;top:1552.5px;" width="8" height="6"><use href="#arrowdn"/></svg>
<div class="a" style="left:768px;top:1549px;width:1px;height:13px;background:#999;"></div>
</div>
<svg width="0" height="0" style="position:absolute"><defs><filter id="blur3" x="-10%" y="-40%" width="120%" height="180%"><feGaussianBlur stdDeviation="3"/></filter><filter id="glowy" x="-5%" y="-5%" width="110%" height="110%"><feGaussianBlur in="SourceGraphic" stdDeviation="1.2" result="b"/><feMerge><feMergeNode in="b"/><feMergeNode in="SourceGraphic"/></feMerge></filter></defs></svg>
<div class="a" style="left:0px;top:732px;width:1248px;height:30px;background:linear-gradient(rgba(0,0,0,0),rgba(0,0,0,0.13));"></div>
<div class="a" style="left:0px;top:1497px;width:1248px;height:28px;background:linear-gradient(rgba(0,0,0,0),rgba(0,0,0,0.11));"></div>
<div class="a" style="left:0px;top:762px;width:1248px;height:1px;background:#000;"></div>
<div class="a" style="left:0px;top:763px;width:1248px;height:4px;background:#37c022;"></div>
<div class="a" style="left:0px;top:767px;width:1248px;height:2px;background:#031a00;"></div>
<div class="a" style="left:0px;top:1525px;width:1248px;height:1px;background:#000;"></div>
<div class="a" style="left:0px;top:1526px;width:1248px;height:4px;background:#37c022;"></div>
<div class="a" style="left:0px;top:1530px;width:1248px;height:2px;background:#031a00;"></div>
<div class="a" style="left:196px;top:201px;width:255px;height:285px;background:#f0f0f0;box-shadow:2px 2px 3px rgba(0,0,0,0.25);"></div>
<div class="a" style="left:225px;top:201px;width:1px;height:285px;background:#e2e2e2;"></div>
<div class="a t" style="top:206.5px;font-size:12.5px;line-height:16px;left:230px;">Copy</div>
<div class="a t" style="top:228.0px;font-size:12.5px;line-height:16px;left:230px;">Paste</div>
<div class="a" style="left:227px;top:252px;width:222px;height:1px;background:#d9d9d9;"></div>
<div class="a t" style="top:258.0px;font-size:12.5px;line-height:16px;left:230px;">Rename</div>
<div class="a t" style="top:280.0px;font-size:12.5px;line-height:16px;left:230px;">Duplicate</div>
<div class="a t" style="top:302.0px;font-size:12.5px;line-height:16px;left:230px;">Delete</div>
<div class="a" style="left:227px;top:325px;width:222px;height:1px;background:#d9d9d9;"></div>
<div class="a t" style="top:332.0px;font-size:12.5px;line-height:16px;left:230px;">Select Children</div>
<div class="a t" style="top:354.0px;font-size:12.5px;line-height:16px;left:230px;">Select Prefab Root</div>
<div class="a t" style="top:376.0px;font-size:12.5px;line-height:16px;left:230px;">Open Model</div>
<div class="a t" style="top:398.0px;font-size:12.5px;line-height:16px;left:230px;">Select Prefab Asset</div>
<div class="a t" style="top:420.0px;font-size:12.5px;line-height:16px;left:230px;">Added GameObject</div>
<div class="a" style="left:199px;top:439px;width:249px;height:22px;background:#dde8f5;border:1px solid #b8cfe8;box-sizing:border-box;"></div>
<div class="a t" style="top:442.0px;font-size:12.5px;line-height:16px;left:230px;">Unpack Prefab</div>
<div class="a t" style="top:464.0px;font-size:12.5px;line-height:16px;left:230px;">Unpack Prefab Completely</div>
<svg class="a" style="left:435px;top:424px;" width="6" height="8" viewBox="0 0 6 8"><path d="M0.5 0.5 L5.5 4 L0.5 7.5 Z" fill="#222"/></svg>
<div class="a" style="left:32px;top:172px;width:125px;height:31px;border:4px solid #ffe614;box-sizing:border-box;box-shadow:0 0 3px rgba(255,240,120,0.6);"></div>
<div class="a" style="left:207px;top:439px;width:241px;height:24px;border:4px solid #ffe614;box-sizing:border-box;box-shadow:0 0 3px rgba(255,240,120,0.6);"></div>
<div class="a" style="left:289px;top:664px;width:76px;height:89px;border:4px solid #ffe614;box-sizing:border-box;box-shadow:0 0 3px rgba(255,240,120,0.6);"></div>
<svg class="a" style="left:0;top:0;overflow:visible" width="1" height="1"><g fill="none" stroke="#ffe614" stroke-width="4" stroke-linecap="butt" stroke-linejoin="miter" filter="url(#glowy)"><polyline points="276.4,658 34.2,209"/><polyline points="22.9,223.6 33.6,206.2"/><polyline points="35.3,211.3 57.8,213"/></g></svg>
<svg class="a" style="left:0;top:0;overflow:visible" width="1" height="1"><text x="464" y="465" font-family="Liberation Sans" font-weight="bold" font-size="31.4" textLength="207" lengthAdjust="spacingAndGlyphs" fill="#000" stroke="#000" stroke-width="9" stroke-linejoin="round" filter="url(#blur3)" opacity="1">2.UNPACK 3D</text><text x="464" y="465" font-family="Liberation Sans" font-weight="bold" font-size="31.4" textLength="207" lengthAdjust="spacingAndGlyphs" fill="#000" stroke="#000" stroke-width="3" stroke-linejoin="round">2.UNPACK 3D</text><text x="464" y="465" font-family="Liberation Sans" font-weight="bold" font-size="31.4" textLength="207" lengthAdjust="spacingAndGlyphs" fill="#fff">2.UNPACK 3D</text></svg>
<svg class="a" style="left:0;top:0;overflow:visible" width="1" height="1"><text x="393" y="703.5" font-family="Liberation Sans" font-weight="bold" font-size="31.4" textLength="384" lengthAdjust="spacingAndGlyphs" fill="#000" stroke="#000" stroke-width="9" stroke-linejoin="round" filter="url(#blur3)" opacity="1">1.DRAG 3D TO [SKINNED]</text><text x="393" y="703.5" font-family="Liberation Sans" font-weight="bold" font-size="31.4" textLength="384" lengthAdjust="spacingAndGlyphs" fill="#000" stroke="#000" stroke-width="3" stroke-linejoin="round">1.DRAG 3D TO [SKINNED]</text><text x="393" y="703.5" font-family="Liberation Sans" font-weight="bold" font-size="31.4" textLength="384" lengthAdjust="spacingAndGlyphs" fill="#fff">1.DRAG 3D TO [SKINNED]</text></svg>
<div class="a" style="left:48px;top:844px;width:114px;height:50px;border:4px solid #ffe614;box-sizing:border-box;box-shadow:0 0 3px rgba(255,240,120,0.6);"></div>
<div class="a" style="left:65px;top:954px;width:121px;height:53px;border:4px solid #ffe614;box-sizing:border-box;box-shadow:0 0 3px rgba(255,240,120,0.6);"></div>
<div class="a" style="left:756px;top:926px;width:220px;height:38px;border:4px solid #ffe614;box-sizing:border-box;box-shadow:0 0 3px rgba(255,240,120,0.6);"></div>
<div class="a" style="left:760px;top:1046px;width:226px;height:33px;border:4px solid #ffe614;box-sizing:border-box;box-shadow:0 0 3px rgba(255,240,120,0.6);"></div>
<div class="a" style="left:53px;top:1007px;width:103px;height:26px;border:4px solid #13eef0;box-sizing:border-box;box-shadow:0 0 3px rgba(255,240,120,0.6);"></div>
<svg class="a" style="left:0;top:0;overflow:visible" width="1" height="1"><g fill="none" stroke="#ffe614" stroke-width="4" stroke-linecap="butt" stroke-linejoin="miter" filter="url(#glowy)"><polyline points="756,915.5 197,860.3"/><polyline points="226,853.5 197,860.3 226,877.4"/><polyline points="194,957 748,938.5"/><polyline points="726.7,919.4 748,938.5 717,953.7"/></g></svg>
<svg class="a" style="left:0;top:0;overflow:visible" width="1" height="1"><g fill="none" stroke="#13eef0" stroke-width="4" stroke-linecap="butt" stroke-linejoin="miter" filter="url(#glowy)"><polyline points="45.5,1015.6 15.5,873.8 37,840"/><polyline points="18.8,844.7 37,840 38,857.9"/></g></svg>
<svg class="a" style="left:0;top:0;overflow:visible" width="1" height="1"><text x="196" y="987.5" font-family="Liberation Sans" font-weight="bold" font-size="27.3" textLength="479" lengthAdjust="spacingAndGlyphs" fill="#000" stroke="#000" stroke-width="9" stroke-linejoin="round" filter="url(#blur3)" opacity="1">3.COPY COMPONENT TO LOD 0 / 1 / 2</text><text x="196" y="987.5" font-family="Liberation Sans" font-weight="bold" font-size="27.3" textLength="479" lengthAdjust="spacingAndGlyphs" fill="#000" stroke="#000" stroke-width="3" stroke-linejoin="round">3.COPY COMPONENT TO LOD 0 / 1 / 2</text><text x="196" y="987.5" font-family="Liberation Sans" font-weight="bold" font-size="27.3" textLength="479" lengthAdjust="spacingAndGlyphs" fill="#fff">3.COPY COMPONENT TO LOD 0 / 1 / 2</text></svg>
<svg class="a" style="left:0;top:0;overflow:visible" width="1" height="1"><text x="64" y="1063" font-family="Liberation Sans" font-weight="bold" font-size="26.6" textLength="361" lengthAdjust="spacingAndGlyphs" fill="#000" stroke="#000" stroke-width="9" stroke-linejoin="round" filter="url(#blur3)" opacity="1">4.DRAG BONE TO [SKINNED]</text><text x="64" y="1063" font-family="Liberation Sans" font-weight="bold" font-size="26.6" textLength="361" lengthAdjust="spacingAndGlyphs" fill="#000" stroke="#000" stroke-width="3" stroke-linejoin="round">4.DRAG BONE TO [SKINNED]</text><text x="64" y="1063" font-family="Liberation Sans" font-weight="bold" font-size="26.6" textLength="361" lengthAdjust="spacingAndGlyphs" fill="#fff">4.DRAG BONE TO [SKINNED]</text></svg>
<div class="a" style="left:40px;top:1605px;width:134px;height:52px;border:4px solid #ffe614;box-sizing:border-box;box-shadow:0 0 3px rgba(255,240,120,0.6);"></div>
<div class="a" style="left:744px;top:1953px;width:498px;height:281px;border:4px solid #ffe614;box-sizing:border-box;box-shadow:0 0 3px rgba(255,240,120,0.6);"></div>
<div class="a" style="left:783px;top:2064px;width:306px;height:41px;border:4px solid #ffe614;box-sizing:border-box;box-shadow:0 0 3px rgba(255,240,120,0.6);"></div>
<div class="a" style="left:784px;top:2186px;width:304px;height:33px;border:4px solid #ffe614;box-sizing:border-box;box-shadow:0 0 3px rgba(255,240,120,0.6);"></div>
<svg class="a" style="left:0;top:0;overflow:visible" width="1" height="1"><g fill="none" stroke="#ffe614" stroke-width="4" stroke-linecap="butt" stroke-linejoin="miter" filter="url(#glowy)"><polyline points="182.5,1631 719,2012"/><polyline points="694,2025 724,2026"/><polyline points="718.6,1985 734,2027"/></g></svg>
<svg class="a" style="left:0;top:0;overflow:visible" width="1" height="1"><text x="753" y="2006.6" font-family="Liberation Sans" font-weight="bold" font-size="32.3" textLength="434" lengthAdjust="spacingAndGlyphs" fill="#000" stroke="#000" stroke-width="9" stroke-linejoin="round" filter="url(#blur3)" opacity="1">4.REVERT UNWANTED DATA</text><text x="753" y="2006.6" font-family="Liberation Sans" font-weight="bold" font-size="32.3" textLength="434" lengthAdjust="spacingAndGlyphs" fill="#000" stroke="#000" stroke-width="3" stroke-linejoin="round">4.REVERT UNWANTED DATA</text><text x="753" y="2006.6" font-family="Liberation Sans" font-weight="bold" font-size="32.3" textLength="434" lengthAdjust="spacingAndGlyphs" fill="#fff">4.REVERT UNWANTED DATA</text></svg></div></body></html>
